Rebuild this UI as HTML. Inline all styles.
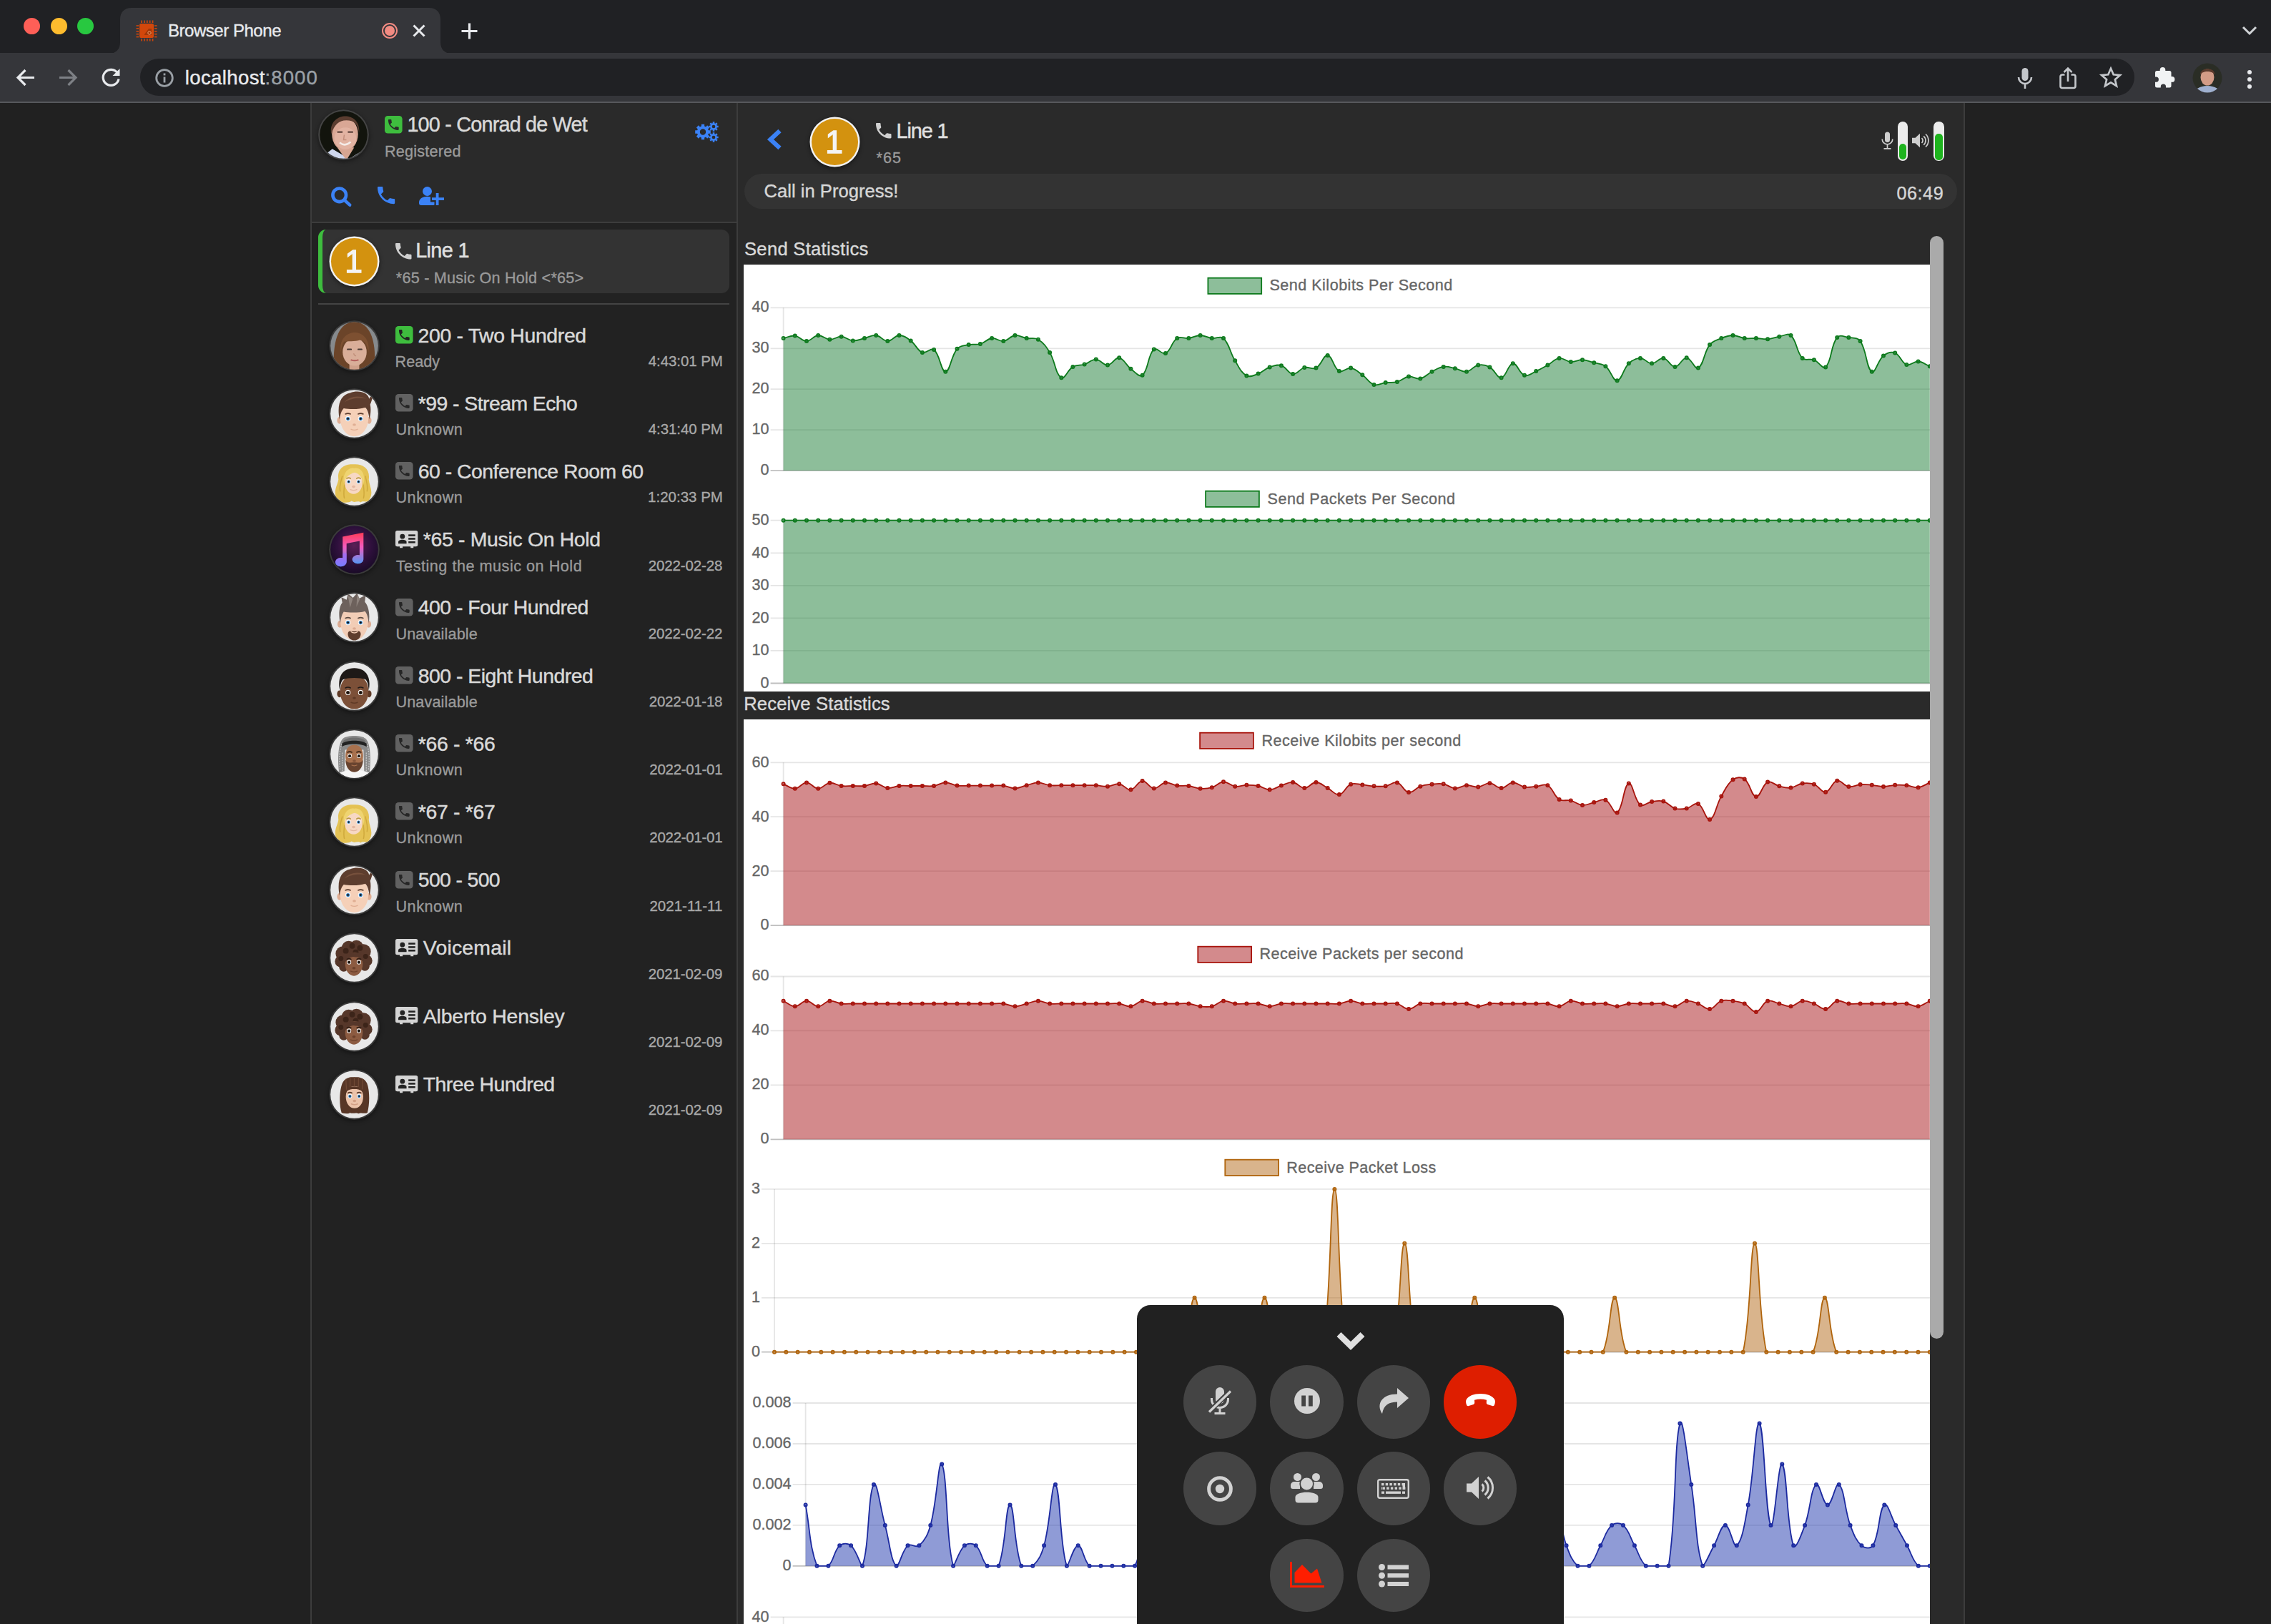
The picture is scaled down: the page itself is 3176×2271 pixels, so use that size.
<!DOCTYPE html><html><head><meta charset="utf-8"><title>Browser Phone</title><style>
*{box-sizing:border-box;margin:0;padding:0}
html,body{width:3176px;height:2271px;overflow:hidden;background:#202124}
body{position:relative;font-family:"Liberation Sans",sans-serif;}
.abs,.t{position:absolute}
.t{white-space:nowrap;line-height:1;-webkit-text-stroke:0.300px currentColor}
svg{position:absolute;overflow:visible}
svg.chart{overflow:hidden}
#tabstrip{position:absolute;left:0;top:0;width:3176px;height:74px;background:#202124}
#tab{position:absolute;left:168px;top:11px;width:449px;height:64px;background:#35363a;border-radius:16px 16px 0 0}
#toolbar{position:absolute;left:0;top:74px;width:3176px;height:68px;background:#35363a}
#toolbar-border{position:absolute;left:0;top:142px;width:3176px;height:2px;background:#57585c}
#omnibox{position:absolute;left:196px;top:8px;width:2789px;height:52px;border-radius:26px;background:#202124}
#page{position:absolute;left:0;top:144px;width:3176px;height:2127px;background:#212121;overflow:hidden}
#leftpanel{position:absolute;left:434px;top:0;width:596px;height:2127px;background:#222222;border-left:2px solid #3c3c3c}
#profile{position:absolute;left:0;top:0;width:594px;height:168px;background:#2a2a2a;border-bottom:2px solid #3c3c3c}
#rightpanel{position:absolute;left:1030px;top:0;width:1718px;height:2127px;background:#2a2a2a;border-left:2px solid #3c3c3c;border-right:2px solid #3c3c3c}
.avatar{position:absolute;width:72px;height:72px;border-radius:50%;overflow:hidden;border:2px solid #444;box-shadow:0 2px 6px rgba(0,0,0,.5)}

#linesel{position:absolute;left:8.600px;top:176.600px;width:575.400px;height:89.800px;background:#333;border-radius:11px;border-left:6.200px solid #3ebd3e}
#linesel i{display:none}
#listsep{position:absolute;left:9px;top:279.500px;width:575px;height:2px;background:#444}
#statuspill{position:absolute;left:8.600px;top:98.500px;width:1696px;height:49.500px;border-radius:25px;background:#333}
#content{position:absolute;left:0;top:0;width:3176px;height:2271px;overflow:hidden}
.buddy{position:static}
</style></head><body><div id="tabstrip">
<div class="abs" style="left:33.2px;top:25px;width:23px;height:23px;border-radius:50%;background:#fe5f57"></div>
<div class="abs" style="left:70.7px;top:25px;width:23px;height:23px;border-radius:50%;background:#febc2e"></div>
<div class="abs" style="left:108.1px;top:25px;width:23px;height:23px;border-radius:50%;background:#28c840"></div>
<svg style="left:152px;top:11px" width="480" height="64" viewBox="0 0 480 64"><path fill="#35363a" d="M0 64 C10 64 16 58 16 48 L16 16 C16 6 22 0 32 0 L448 0 C458 0 464 6 464 16 L464 48 C464 58 470 64 480 64 Z"/></svg>
<svg style="left:190px;top:28px" width="30" height="30" viewBox="0 0 30 30"><rect x="5" y="5" width="20" height="20" rx="2" fill="#d2470b"/><rect x="7.2" y="0.5" width="1.6" height="3.5" fill="#d2470b"/><rect x="7.2" y="26" width="1.6" height="3.5" fill="#d2470b"/><rect x="0.5" y="7.2" width="3.5" height="1.6" fill="#d2470b"/><rect x="26" y="7.2" width="3.5" height="1.6" fill="#d2470b"/><rect x="11.1" y="0.5" width="1.6" height="3.5" fill="#d2470b"/><rect x="11.1" y="26" width="1.6" height="3.5" fill="#d2470b"/><rect x="0.5" y="11.1" width="3.5" height="1.6" fill="#d2470b"/><rect x="26" y="11.1" width="3.5" height="1.6" fill="#d2470b"/><rect x="15.0" y="0.5" width="1.6" height="3.5" fill="#d2470b"/><rect x="15.0" y="26" width="1.6" height="3.5" fill="#d2470b"/><rect x="0.5" y="15.0" width="3.5" height="1.6" fill="#d2470b"/><rect x="26" y="15.0" width="3.5" height="1.6" fill="#d2470b"/><rect x="18.9" y="0.5" width="1.6" height="3.5" fill="#d2470b"/><rect x="18.9" y="26" width="1.6" height="3.5" fill="#d2470b"/><rect x="0.5" y="18.9" width="3.5" height="1.6" fill="#d2470b"/><rect x="26" y="18.9" width="3.5" height="1.6" fill="#d2470b"/><rect x="22.8" y="0.5" width="1.6" height="3.5" fill="#d2470b"/><rect x="22.8" y="26" width="1.6" height="3.5" fill="#d2470b"/><rect x="0.5" y="22.8" width="3.5" height="1.6" fill="#d2470b"/><rect x="26" y="22.8" width="3.5" height="1.6" fill="#d2470b"/><path d="M12 20 L18 12 L22 12 L22 21 L12 21Z" fill="#7a2a06" opacity=".55"/><circle cx="19" cy="18" r="2.2" fill="none" stroke="#f0a070" stroke-width="1"/></svg>
<span id="t1" class="t " style="top:30.6px;font-size:24.00px;color:#e8eaed;-webkit-text-stroke-width:0.38px;left:235.0px;letter-spacing:-0.467px;">Browser Phone</span>
<svg style="left:533px;top:31px" width="24" height="24" viewBox="0 0 24 24"><circle cx="12" cy="12" r="10" fill="none" stroke="#f28b82" stroke-width="2"/><circle cx="12" cy="12" r="7" fill="#f28b82"/></svg>
<svg style="left:577px;top:34px" width="18" height="18" viewBox="0 0 18 18"><path d="M1.5 1.5 L16.500 16.5 M16.5 1.5 L1.5 16.5" stroke="#e8eaed" stroke-width="3" fill="none"/></svg>
<svg style="left:645px;top:32px" width="23" height="23" viewBox="0 0 23 23"><path d="M11.5 0.5 V22.5 M0.5 11.5 H22.5" stroke="#e8eaed" stroke-width="3.200" fill="none"/></svg>
<svg style="left:3135px;top:36px" width="22" height="14" viewBox="0 0 22 14"><path d="M2 2 L11 11 L20 2" stroke="#d0d3d6" stroke-width="3" fill="none"/></svg>
</div>
<div id="toolbar"><div id="omnibox"></div></div><div id="toolbar-border"></div>
<svg style="left:21.500px;top:95px" width="28" height="27" viewBox="0 0 28 27"><path d="M26 13.5 H4 M13.500 3 L3 13.5 L13.500 24" stroke="#e8eaed" stroke-width="3.200" fill="none" stroke-linejoin="miter"/></svg>
<svg style="left:80.500px;top:95px" width="28" height="27" viewBox="0 0 28 27"><path d="M2 13.5 H24 M14.500 3 L25 13.5 L14.500 24" stroke="#7d8085" stroke-width="3.200" fill="none"/></svg>
<svg style="left:140px;top:93px" width="30" height="31" viewBox="0 0 30 31"><path d="M24.500 9.5 A11 11 0 1 0 26 17.500" stroke="#e8eaed" stroke-width="3.200" fill="none"/><path d="M27.500 3 V13 H17.500Z" fill="#e8eaed"/></svg>
<svg style="left:217px;top:95.500px" width="26" height="26" viewBox="0 0 26 26"><circle cx="13" cy="13" r="11.300" fill="none" stroke="#9aa0a6" stroke-width="2.800"/><rect x="11.600" y="11.500" width="2.800" height="8" fill="#9aa0a6"/><rect x="11.600" y="6.500" width="2.800" height="2.900" fill="#9aa0a6"/></svg>
<span id="t2" class="t " style="top:94.9px;font-size:27.50px;color:#e8eaed;-webkit-text-stroke-width:0.44px;left:258.8px;letter-spacing:0.387px;">localhost</span>
<span id="t3" class="t " style="top:94.9px;font-size:27.50px;color:#9aa0a6;-webkit-text-stroke-width:0.44px;left:370.6px;letter-spacing:1.100px;">:8000</span>
<svg style="left:2821px;top:94px" width="22" height="31" viewBox="0 0 22 31"><rect x="6.500" y="1" width="9" height="18" rx="4.500" fill="#c4c7cb"/><path d="M2 14 a9 9 0 0 0 18 0 M11 23 V30" stroke="#c4c7cb" stroke-width="2.600" fill="none"/></svg>
<svg style="left:2880px;top:93px" width="24" height="32" viewBox="0 0 24 32"><path d="M7.500 11.500 H4 a2.500 2.500 0 0 0 -2.500 2.500 V27.500 a2.500 2.500 0 0 0 2.500 2.500 H20 a2.500 2.500 0 0 0 2.500 -2.500 V14 a2.500 2.500 0 0 0 -2.500 -2.500 H16.500 M12 21 V3 M6.500 8 L12 2.500 L17.500 8" stroke="#c4c7cb" stroke-width="2.600" fill="none"/></svg>
<svg style="left:2937px;top:93px" width="30" height="30" viewBox="0 0 30 30"><path d="M15 2.800 L18.700 11.300 L27.900 12.100 L20.900 18.200 L23 27.200 L15 22.400 L7 27.200 L9.100 18.200 L2.100 12.100 L11.300 11.300 Z" stroke="#c4c7cb" stroke-width="2.700" fill="none" stroke-linejoin="miter"/></svg>
<svg style="left:3012px;top:93px" width="30" height="30" viewBox="0 0 30 30"><path fill="#f1f3f4" d="M12.500 1 a3.800 3.800 0 0 1 3.800 3.800 V6 H22 a2.500 2.500 0 0 1 2.500 2.500 V14 h1 a3.900 3.900 0 0 1 0 7.800 h-1 V27 a2.500 2.500 0 0 1 -2.500 2.500 H17 v-1.300 a3.600 3.600 0 0 0 -7.200 0 V29.500 H4.500 A2.500 2.500 0 0 1 2 27 V21.800 h1.300 a3.600 3.600 0 0 0 0 -7.200 H2 V8.500 A2.500 2.500 0 0 1 4.500 6 H8.700 V4.800 A3.800 3.800 0 0 1 12.500 1 Z"/></svg>
<svg style="left:3066px;top:88px" width="42" height="42" viewBox="0 0 42 42"><defs><clipPath id="cpa"><circle cx="21" cy="21" r="20.500"/></clipPath></defs><g clip-path="url(#cpa)"><rect width="42" height="42" fill="#2a2d25"/><ellipse cx="21" cy="44" rx="19" ry="12" fill="#9fb0cf"/><ellipse cx="21" cy="20" rx="9.500" ry="11.500" fill="#d39c86"/><path d="M11 17 C10 6 32 5 31.500 17 C29 11 14 10 11 17Z" fill="#5a3a2c"/></g></svg>
<svg style="left:3141px;top:97px" width="10" height="28" viewBox="0 0 10 28"><circle cx="5" cy="4" r="3" fill="#e8eaed"/><circle cx="5" cy="14" r="3" fill="#e8eaed"/><circle cx="5" cy="24" r="3" fill="#e8eaed"/></svg>
<div id="page"><div id="leftpanel"><div id="profile"></div><div id="linesel"><i></i></div><div id="listsep"></div></div><div id="rightpanel"><div id="statuspill"></div></div></div>
<div id="content">
<svg style="left:445.1px;top:152.9px;filter:drop-shadow(0 2px 3px rgba(0,0,0,.45))" width="71.0" height="71.0" viewBox="0 0 72 72"><defs><clipPath id="av1"><circle cx="36" cy="36" r="33.800"/></clipPath></defs><circle cx="36" cy="36" r="35.800" fill="#444"/><g clip-path="url(#av1)"><rect width="72" height="72" fill="#12140d"/><path d="M0 72 L20 56 L44 70 L60 60 L72 72Z" fill="#cfd8ee"/><path d="M27 54 L40 72 L51 54Z" fill="#d7a691"/><ellipse cx="38" cy="35" rx="18.500" ry="23.500" fill="#d9a795"/><ellipse cx="38.500" cy="41" rx="15.500" ry="15.500" fill="#e2b3a2"/><path d="M18.500 35 C13 3 61 0 58 33 C56 21 51 15.500 40 15.500 C29 15.500 23 22 18.500 35Z" fill="#5b3d30"/><path d="M30.500 47 Q38 53.500 46 46" stroke="#f5ece8" stroke-width="2.600" fill="none"/><rect x="27" y="31" width="7.500" height="2.200" fill="#5a4038"/><rect x="42" y="31" width="7.500" height="2.200" fill="#5a4038"/><path d="M37 36 L36 43 L40 43" stroke="#c48f7c" stroke-width="1.500" fill="none"/></g></svg>
<svg style="left:538.2px;top:161.5px" width="24.6" height="24.6" viewBox="0 0 24 24" ><rect x="0" y="0" width="24" height="24" rx="4.200" fill="#3ebd3e"/><g transform="translate(2.400,2.600) scale(0.800)"><path fill="none" stroke="#2a2a2a" stroke-width="0" d=""/><path fill="#2a2a2a" d="M6.6 10.8c1.4 2.8 3.8 5.1 6.6 6.6l2.200-2.200c.3-.3.7-.4 1-.2 1.100.4 2.300.6 3.600.6.600 0 1 .4 1 1V20c0 .600-.400 1-1 1C10.600 21 3 13.400 3 4c0-.6.4-1 1-1h3.500c.600 0 1 .4 1 1 0 1.300.2 2.500.6 3.600.100.3 0 .700-.2 1l-2.300 2.200z"/></g></svg>
<span id="t4" class="t " style="top:159.7px;font-size:28.80px;color:#d9d9d9;-webkit-text-stroke-width:0.46px;left:569.4px;letter-spacing:-0.800px;">100 - Conrad de Wet</span>
<span id="t5" class="t " style="top:201.0px;font-size:21.60px;color:#9a9a9a;-webkit-text-stroke-width:0.35px;left:538.0px;letter-spacing:0.222px;">Registered</span>
<svg style="left:971.7px;top:170.0px" width="33.0" height="29.0" viewBox="0 0 33 29" ><path fill="#3b82f6" fill-rule="evenodd" d="M18.91 12.35L21.79 12.35L21.79 16.65L18.91 16.65L18.11 18.58L20.15 20.61L17.11 23.65L15.08 21.61L13.15 22.41L13.15 25.29L8.85 25.29L8.85 22.41L6.92 21.61L4.89 23.65L1.85 20.61L3.89 18.58L3.09 16.65L0.21 16.65L0.21 12.35L3.09 12.35L3.89 10.42L1.85 8.39L4.89 5.35L6.92 7.39L8.85 6.59L8.85 3.71L13.15 3.71L13.15 6.59L15.08 7.39L17.11 5.35L20.15 8.39L18.11 10.42ZM6.80 14.50 a4.20 4.20 0 1 0 8.40 0 a4.20 4.20 0 1 0 -8.40 0ZM30.73 5.72L32.67 5.67L32.67 8.33L30.73 8.28L30.25 9.44L31.65 10.78L29.78 12.65L28.44 11.25L27.28 11.73L27.33 13.67L24.67 13.67L24.72 11.73L23.56 11.25L22.22 12.65L20.35 10.78L21.75 9.44L21.27 8.28L19.33 8.33L19.33 5.67L21.27 5.72L21.75 4.56L20.35 3.22L22.22 1.35L23.56 2.75L24.72 2.27L24.67 0.33L27.33 0.33L27.28 2.27L28.44 2.75L29.78 1.35L31.65 3.22L30.25 4.56ZM23.70 7.00 a2.30 2.30 0 1 0 4.60 0 a2.30 2.30 0 1 0 -4.60 0ZM30.73 20.72L32.67 20.67L32.67 23.33L30.73 23.28L30.25 24.44L31.65 25.78L29.78 27.65L28.44 26.25L27.28 26.73L27.33 28.67L24.67 28.67L24.72 26.73L23.56 26.25L22.22 27.65L20.35 25.78L21.75 24.44L21.27 23.28L19.33 23.33L19.33 20.67L21.27 20.72L21.75 19.56L20.35 18.22L22.22 16.35L23.56 17.75L24.72 17.27L24.67 15.33L27.33 15.33L27.28 17.27L28.44 17.75L29.78 16.35L31.65 18.22L30.25 19.56ZM23.70 22.00 a2.30 2.30 0 1 0 4.60 0 a2.30 2.30 0 1 0 -4.60 0Z"/></svg>
<svg style="left:462.0px;top:260.0px" width="30.0" height="30.0" viewBox="0 0 30 30" ><circle cx="12.700" cy="12.800" r="9.300" fill="none" stroke="#3b82f6" stroke-width="4.600"/><path d="M19.500 19.600 L27.200 26.600" stroke="#3b82f6" stroke-width="4.600" stroke-linecap="round"/></svg>
<svg style="left:528.2px;top:260.6px" width="24.2" height="24.2" viewBox="3 3 18 18" ><path fill="#3b82f6" d="M6.6 10.8c1.4 2.8 3.8 5.1 6.6 6.6l2.200-2.200c.3-.3.7-.4 1-.2 1.100.4 2.300.6 3.600.6.600 0 1 .4 1 1V20c0 .600-.400 1-1 1C10.600 21 3 13.400 3 4c0-.6.4-1 1-1h3.500c.600 0 1 .4 1 1 0 1.300.2 2.500.6 3.600.100.3 0 .700-.2 1l-2.300 2.200z"/></svg>
<svg style="left:586.4px;top:260.6px" width="35.0" height="26.0" viewBox="0 0 35 26" ><circle cx="11.500" cy="6.500" r="6.500" fill="#3b82f6"/><path d="M0 22 C0 11 23 11 23 22 V23 A3 3 0 0 1 20 26 H3 A3 3 0 0 1 0 23Z" fill="#3b82f6"/><path d="M16 12.500 H35 V21.500 H16Z M21.500 7 H29.500 V26 H21.500Z" fill="#2a2a2a"/><path d="M18 15.200 H35 V19 H18Z M23.700 9 H27.500 V26 H23.700Z" fill="#3b82f6"/></svg>
<svg style="left:459.9px;top:330.0px;filter:drop-shadow(0 2px 3px rgba(0,0,0,.45))" width="71.0" height="71.0" viewBox="0 0 72 72"><circle cx="36" cy="36" r="35.500" fill="#f2f2f2"/><circle cx="36" cy="36" r="33" fill="#d3920f"/><text x="35" y="52" font-size="45" text-anchor="middle" fill="#f4f4f4" stroke="#f4f4f4" stroke-width="1.400" font-family="Liberation Sans, sans-serif">1</text></svg>
<svg style="left:553.3px;top:340.0px" width="22.5" height="22.5" viewBox="3 3 18 18" ><path fill="#d0d0d0" d="M6.6 10.8c1.4 2.8 3.8 5.1 6.6 6.6l2.200-2.200c.3-.3.7-.4 1-.2 1.100.4 2.300.6 3.600.6.600 0 1 .4 1 1V20c0 .600-.400 1-1 1C10.600 21 3 13.400 3 4c0-.6.4-1 1-1h3.500c.600 0 1 .4 1 1 0 1.300.2 2.500.6 3.600.100.3 0 .700-.2 1l-2.300 2.200z"/></svg>
<span id="t6" class="t " style="top:336.3px;font-size:28.80px;color:#e0e0e0;-webkit-text-stroke-width:0.46px;left:581.2px;letter-spacing:-0.640px;">Line 1</span>
<span id="t7" class="t " style="top:378.1px;font-size:21.60px;color:#9a9a9a;-webkit-text-stroke-width:0.35px;left:553.8px;letter-spacing:0.229px;">*65 - Music On Hold &lt;*65&gt;</span>
<div class="buddy">
<svg style="left:459.9px;top:447.5px;filter:drop-shadow(0 2px 3px rgba(0,0,0,.45))" width="71.0" height="71.0" viewBox="0 0 72 72"><defs><clipPath id="av2"><circle cx="36" cy="36" r="33.800"/></clipPath></defs><circle cx="36" cy="36" r="35.800" fill="#3a3a3a"/><g clip-path="url(#av2)"><rect width="72" height="72" fill="#868a8d"/><path d="M8 80 C4 40 9 3 36 2 C63 3 69 40 63 80Z" fill="#6b4429"/><ellipse cx="36" cy="82" rx="26" ry="14" fill="#3f3431"/><rect x="29" y="58" width="14" height="14" fill="#cfa08a"/><ellipse cx="36.500" cy="45" rx="17" ry="19.500" fill="#d9ae99"/><path d="M17 45 C11 9 61 7 56 45 C54.500 33 50 29 44 28 C38 30 24 30 22 30 C19 33 18 38 17 45Z" fill="#7d5031"/><rect x="25.500" y="40" width="7" height="2.200" rx="1" fill="#4b3a35"/><rect x="40.500" y="40" width="7" height="2.200" rx="1" fill="#4b3a35"/><path d="M31 56 Q36.500 58 42 56" stroke="#b5625e" stroke-width="2.200" fill="none"/><path d="M35 47 Q36.500 51 38.500 50" stroke="#c08f7a" stroke-width="1.500" fill="none"/></g></svg>
<svg style="left:553.2px;top:455.9px" width="24.6" height="24.6" viewBox="0 0 24 24" ><rect x="0" y="0" width="24" height="24" rx="4.200" fill="#3ebd3e"/><g transform="translate(2.400,2.600) scale(0.800)"><path fill="none" stroke="#222222" stroke-width="0" d=""/><path fill="#222222" d="M6.6 10.8c1.4 2.8 3.8 5.1 6.6 6.6l2.200-2.200c.3-.3.7-.4 1-.2 1.100.4 2.300.6 3.600.6.600 0 1 .4 1 1V20c0 .600-.400 1-1 1C10.600 21 3 13.400 3 4c0-.6.4-1 1-1h3.500c.600 0 1 .4 1 1 0 1.300.2 2.500.6 3.600.100.3 0 .700-.2 1l-2.300 2.200z"/></g></svg>
<span id="t8" class="t " style="top:454.6px;font-size:28.40px;color:#d9d9d9;-webkit-text-stroke-width:0.45px;left:584.6px;letter-spacing:-0.337px;">200 - Two Hundred</span>
<span id="t9" class="t " style="top:494.9px;font-size:21.60px;color:#9a9a9a;-webkit-text-stroke-width:0.35px;left:552.6px;">Ready</span>
<span id="t10" class="t " style="top:494.9px;font-size:20.50px;color:#a8a8a8;-webkit-text-stroke-width:0.33px;left:1010.9px;transform:translateX(-100%);letter-spacing:-0.067px;">4:43:01 PM</span>
</div>
<div class="buddy">
<svg style="left:459.9px;top:542.7px;filter:drop-shadow(0 2px 3px rgba(0,0,0,.45))" width="71.0" height="71.0" viewBox="0 0 72 72"><defs><clipPath id="av3"><circle cx="36" cy="36" r="33.800"/></clipPath></defs><circle cx="36" cy="36" r="35.800" fill="#3a3a3a"/><g clip-path="url(#av3)"><rect width="72" height="72" fill="#e8e8e8"/><ellipse cx="15.0" cy="45.5" rx="3.400" ry="5" fill="#e0ae93"/><ellipse cx="57.0" cy="45.5" rx="3.400" ry="5" fill="#e0ae93"/><path d="M36.0 19.0 C51.0 19.0 56.0 30.0 56.0 42.3 C56.0 57.0 47.0 68.0 36.0 68.0 C25.0 68.0 16.0 57.0 16.0 42.3 C16.0 30.0 21.0 19.0 36.0 19.0 Z" fill="#f5d0b8"/><ellipse cx="36.0" cy="51.6" rx="2.400" ry="1.700" fill="#e0ae93"/><path d="M31.5 58.2 Q36.0 60.2 40.5 58.2" stroke="#e0ae93" stroke-width="1.500" fill="none" stroke-linecap="round"/><path d="M15 44 C11 22 17 9 30 6.500 C42 2 56 6 57 15 C58 12 61 11 63 10 C61 16 60 20 58.500 23 C60 30 59 37 57.500 44 C56.500 36 55 30 51.500 27 C44 30 30 30 21 28.500 C17.500 32 16 38 15 44Z" fill="#5d3d2e"/><path d="M22 20 C28 11 44 9 53 15 C44 13 30 14 22 20Z" fill="#76503c"/><path d="M23.4 36.5 q3.6 -1.800 7.2 0 M41.4 36.5 q3.6 -1.800 7.2 0" stroke="#5d3d2e" stroke-width="1.600" fill="none" stroke-linecap="round"/><ellipse cx="27.0" cy="43.0" rx="3.6" ry="3.8" fill="#fdfdfd"/><circle cx="27.0" cy="43.2" r="2.6" fill="#3f86c4"/><circle cx="27.0" cy="43.2" r="1.4" fill="#111"/><ellipse cx="45.0" cy="43.0" rx="3.6" ry="3.8" fill="#fdfdfd"/><circle cx="45.0" cy="43.2" r="2.6" fill="#3f86c4"/><circle cx="45.0" cy="43.2" r="1.4" fill="#111"/></g></svg>
<svg style="left:553.2px;top:551.1px" width="24.6" height="24.6" viewBox="0 0 24 24" ><rect x="0" y="0" width="24" height="24" rx="4.200" fill="#616161"/><g transform="translate(2.400,2.600) scale(0.800)"><path fill="none" stroke="#262626" stroke-width="0" d=""/><path fill="#262626" d="M6.6 10.8c1.4 2.8 3.8 5.1 6.6 6.6l2.200-2.200c.3-.3.7-.4 1-.2 1.100.4 2.300.6 3.600.6.600 0 1 .4 1 1V20c0 .600-.400 1-1 1C10.600 21 3 13.400 3 4c0-.6.4-1 1-1h3.500c.600 0 1 .4 1 1 0 1.300.2 2.500.6 3.600.100.3 0 .700-.2 1l-2.300 2.200z"/></g></svg>
<span id="t11" class="t " style="top:549.8px;font-size:28.40px;color:#d9d9d9;-webkit-text-stroke-width:0.45px;left:584.8px;letter-spacing:-0.556px;">*99 - Stream Echo</span>
<span id="t12" class="t " style="top:590.1px;font-size:21.60px;color:#9a9a9a;-webkit-text-stroke-width:0.35px;left:553.4px;letter-spacing:0.567px;">Unknown</span>
<span id="t13" class="t " style="top:590.1px;font-size:20.50px;color:#a8a8a8;-webkit-text-stroke-width:0.33px;left:1010.9px;transform:translateX(-100%);letter-spacing:-0.067px;">4:31:40 PM</span>
</div>
<div class="buddy">
<svg style="left:459.9px;top:637.9px;filter:drop-shadow(0 2px 3px rgba(0,0,0,.45))" width="71.0" height="71.0" viewBox="0 0 72 72"><defs><clipPath id="av4"><circle cx="36" cy="36" r="33.800"/></clipPath></defs><circle cx="36" cy="36" r="35.800" fill="#3a3a3a"/><g clip-path="url(#av4)"><rect width="72" height="72" fill="#e8e8e8"/><path d="M12 62 C5 50 12 42 13.500 33 C11 16 24 10.500 35 11.500 C47 10.500 59 17 56.500 33 C57.500 43 64 51 57 62 C53 67 48 62 45 65.500 C41 62 37 67 32 63.500 C28 67 22 65 19 66 C16 66 14 64 12 62Z" fill="#e4c254"/><path d="M16 50 C14 40 18 34 19 28 M54 50 C56 40 52 34 52 28 M22 60 C20 52 22 46 22 40 M49 60 C51 52 49 46 49 40" stroke="#cfa93c" stroke-width="1.500" fill="none"/><path d="M35.0 22.5 C44.4 22.5 47.5 29.5 47.5 37.2 C47.5 46.5 41.9 53.5 35.0 53.5 C28.1 53.5 22.5 46.5 22.5 37.2 C22.5 29.5 25.6 22.5 35.0 22.5 Z" fill="#f7d8c4"/><ellipse cx="35.0" cy="43.1" rx="2.400" ry="1.700" fill="#e4b8a2"/><path d="M30.5 47.3 Q35.0 49.3 39.5 47.3" stroke="#e4b8a2" stroke-width="1.500" fill="none" stroke-linecap="round"/><path d="M21 38 C19 20 31 15.500 36 17 C45 15 52 24 49.500 39 C47 30 43 24.500 36.500 23 C29 25 24 29 21 38Z" fill="#efd470"/><path d="M25.2 31.5 q2.8 -1.800 5.6 0 M39.2 31.5 q2.8 -1.800 5.6 0" stroke="#b99a45" stroke-width="1.600" fill="none" stroke-linecap="round"/><ellipse cx="28.0" cy="36.0" rx="3.0" ry="3.2" fill="#fdfdfd"/><circle cx="28.0" cy="36.2" r="2.2" fill="#3f86c4"/><circle cx="28.0" cy="36.2" r="1.1" fill="#111"/><ellipse cx="42.0" cy="36.0" rx="3.0" ry="3.2" fill="#fdfdfd"/><circle cx="42.0" cy="36.2" r="2.2" fill="#3f86c4"/><circle cx="42.0" cy="36.2" r="1.1" fill="#111"/></g></svg>
<svg style="left:553.2px;top:646.3px" width="24.6" height="24.6" viewBox="0 0 24 24" ><rect x="0" y="0" width="24" height="24" rx="4.200" fill="#616161"/><g transform="translate(2.400,2.600) scale(0.800)"><path fill="none" stroke="#262626" stroke-width="0" d=""/><path fill="#262626" d="M6.6 10.8c1.4 2.8 3.8 5.1 6.6 6.6l2.200-2.200c.3-.3.7-.4 1-.2 1.100.4 2.300.6 3.600.6.600 0 1 .4 1 1V20c0 .600-.400 1-1 1C10.600 21 3 13.400 3 4c0-.6.4-1 1-1h3.500c.600 0 1 .4 1 1 0 1.300.2 2.500.6 3.600.100.3 0 .700-.2 1l-2.300 2.200z"/></g></svg>
<span id="t14" class="t " style="top:645.0px;font-size:28.40px;color:#d9d9d9;-webkit-text-stroke-width:0.45px;left:584.8px;letter-spacing:-0.518px;">60 - Conference Room 60</span>
<span id="t15" class="t " style="top:685.3px;font-size:21.60px;color:#9a9a9a;-webkit-text-stroke-width:0.35px;left:553.4px;letter-spacing:0.567px;">Unknown</span>
<span id="t16" class="t " style="top:685.3px;font-size:20.50px;color:#a8a8a8;-webkit-text-stroke-width:0.33px;left:1010.9px;transform:translateX(-100%);">1:20:33 PM</span>
</div>
<div class="buddy">
<svg style="left:459.9px;top:733.1px;filter:drop-shadow(0 2px 3px rgba(0,0,0,.45))" width="71.0" height="71.0" viewBox="0 0 72 72"><defs><clipPath id="av5"><circle cx="36" cy="36" r="33.800"/></clipPath><radialGradient id="mgav5" cx="50%" cy="42%" r="62%"><stop offset="0" stop-color="#5c1f56"/><stop offset=".55" stop-color="#2e103c"/><stop offset="1" stop-color="#130920"/></radialGradient><linearGradient id="ngav5" x1="0" y1="0" x2="0" y2="1"><stop offset="0" stop-color="#ff3b55"/><stop offset=".42" stop-color="#f45bbf"/><stop offset="1" stop-color="#3aa2ff"/></linearGradient></defs><circle cx="36" cy="36" r="35.800" fill="#3a3a3a"/><g clip-path="url(#av5)"><rect width="72" height="72" fill="url(#mgav5)"/><g transform="translate(30.250 36) scale(1.230 1.130) translate(-35.750 -35.250)"><path fill="url(#ngav5)" d="M27 19 L51 14 V47.500 A6.500 5.500 0 1 1 46.500 42.300 V24.500 L31.500 27.600 V51 A6.500 5.500 0 1 1 27 45.800 Z"/><path fill="#a264ff" opacity=".6" d="M31.500 51 A6.500 5.500 0 1 1 27 45.800 V40 L31.500 40Z"/></g></g></svg>
<svg style="left:553.4px;top:742.0px" width="31.3" height="24.4" viewBox="0 0 31 24" ><path fill="#d4d4d4" d="M2.500 0 H28.500 A2.500 2.500 0 0 1 31 2.500 V19.500 A2.500 2.500 0 0 1 28.500 22 H25 V24 H21 V22 H10 V24 H6 V22 H2.500 A2.500 2.500 0 0 1 0 19.500 V2.500 A2.500 2.500 0 0 1 2.500 0Z"/><circle cx="9.700" cy="8" r="3.400" fill="#222222"/><path d="M4 18 V15.500 C4 11.500 15.400 11.500 15.400 15.500 V18Z" fill="#222222"/><rect x="18" y="5.2" width="9.500" height="2.500" fill="#222222"/><rect x="18" y="10.0" width="9.500" height="2.500" fill="#222222"/><rect x="18" y="14.8" width="9.500" height="2.500" fill="#222222"/></svg>
<span id="t17" class="t " style="top:740.2px;font-size:28.40px;color:#d9d9d9;-webkit-text-stroke-width:0.45px;left:591.8px;letter-spacing:-0.317px;">*65 - Music On Hold</span>
<span id="t18" class="t " style="top:780.5px;font-size:21.60px;color:#9a9a9a;-webkit-text-stroke-width:0.35px;left:553.8px;letter-spacing:0.525px;">Testing the music on Hold</span>
<span id="t19" class="t " style="top:780.5px;font-size:20.50px;color:#a8a8a8;-webkit-text-stroke-width:0.33px;left:1010.3px;transform:translateX(-100%);letter-spacing:-0.133px;">2022-02-28</span>
</div>
<div class="buddy">
<svg style="left:459.9px;top:828.3px;filter:drop-shadow(0 2px 3px rgba(0,0,0,.45))" width="71.0" height="71.0" viewBox="0 0 72 72"><defs><clipPath id="av6"><circle cx="36" cy="36" r="33.800"/></clipPath></defs><circle cx="36" cy="36" r="35.800" fill="#3a3a3a"/><g clip-path="url(#av6)"><rect width="72" height="72" fill="#e8e8e8"/><ellipse cx="15.5" cy="45.5" rx="3.400" ry="5" fill="#dcab92"/><ellipse cx="56.5" cy="45.5" rx="3.400" ry="5" fill="#dcab92"/><path d="M36.0 19.0 C50.6 19.0 55.5 30.0 55.5 42.3 C55.5 57.0 46.7 68.0 36.0 68.0 C25.3 68.0 16.5 57.0 16.5 42.3 C16.5 30.0 21.4 19.0 36.0 19.0 Z" fill="#f2cdb6"/><ellipse cx="36.0" cy="51.6" rx="2.400" ry="1.700" fill="#dcab92"/><path d="M31.5 58.2 Q36.0 60.2 40.5 58.2" stroke="#dcab92" stroke-width="1.500" fill="none" stroke-linecap="round"/><path d="M27 58 C28 54 32 55.500 36 55.500 C40 55.500 44 54 45 58 C46 64 41 68.500 36 68.500 C31 68.500 26 64 27 58Z" fill="#5e3d2d"/><path d="M31 56 Q36 59.500 41 56" stroke="#f2cdb6" stroke-width="1.400" fill="none"/><path d="M16 44 C13 30 15 20 19 15 L17.500 7 L25 11 L27 2 L34 8 L40 1.500 L43 9 L52 4 L51 14 C56 20 58.500 30 56.500 44 C55.500 36 54 30 51 27 C44 29.500 29 29.500 21 28 C18 32 17 38 16 44Z" fill="#6d615c"/><path d="M27 5 L30 22 L34 9Z M40 3 L39 21 L44 10Z" fill="#8d827c"/><path d="M23.4 37.0 q3.6 -1.800 7.2 0 M41.4 37.0 q3.6 -1.800 7.2 0" stroke="#5a4a42" stroke-width="1.600" fill="none" stroke-linecap="round"/><ellipse cx="27.0" cy="43.0" rx="3.6" ry="3.8" fill="#fdfdfd"/><circle cx="27.0" cy="43.2" r="2.6" fill="#3f86c4"/><circle cx="27.0" cy="43.2" r="1.4" fill="#111"/><ellipse cx="45.0" cy="43.0" rx="3.6" ry="3.8" fill="#fdfdfd"/><circle cx="45.0" cy="43.2" r="2.6" fill="#3f86c4"/><circle cx="45.0" cy="43.2" r="1.4" fill="#111"/></g></svg>
<svg style="left:553.2px;top:836.7px" width="24.6" height="24.6" viewBox="0 0 24 24" ><rect x="0" y="0" width="24" height="24" rx="4.200" fill="#616161"/><g transform="translate(2.400,2.600) scale(0.800)"><path fill="none" stroke="#262626" stroke-width="0" d=""/><path fill="#262626" d="M6.6 10.8c1.4 2.8 3.8 5.1 6.6 6.6l2.200-2.200c.3-.3.7-.4 1-.2 1.100.4 2.300.6 3.600.6.600 0 1 .4 1 1V20c0 .600-.400 1-1 1C10.600 21 3 13.400 3 4c0-.6.4-1 1-1h3.500c.600 0 1 .4 1 1 0 1.300.2 2.500.6 3.600.100.3 0 .700-.2 1l-2.300 2.200z"/></g></svg>
<span id="t20" class="t " style="top:835.4px;font-size:28.40px;color:#d9d9d9;-webkit-text-stroke-width:0.45px;left:584.8px;letter-spacing:-0.541px;">400 - Four Hundred</span>
<span id="t21" class="t " style="top:875.7px;font-size:21.60px;color:#9a9a9a;-webkit-text-stroke-width:0.35px;left:553.4px;letter-spacing:0.160px;">Unavailable</span>
<span id="t22" class="t " style="top:875.7px;font-size:20.50px;color:#a8a8a8;-webkit-text-stroke-width:0.33px;left:1010.3px;transform:translateX(-100%);letter-spacing:-0.133px;">2022-02-22</span>
</div>
<div class="buddy">
<svg style="left:459.9px;top:923.5px;filter:drop-shadow(0 2px 3px rgba(0,0,0,.45))" width="71.0" height="71.0" viewBox="0 0 72 72"><defs><clipPath id="av7"><circle cx="36" cy="36" r="33.800"/></clipPath></defs><circle cx="36" cy="36" r="35.800" fill="#3a3a3a"/><g clip-path="url(#av7)"><rect width="72" height="72" fill="#e8e8e8"/><ellipse cx="15.0" cy="47.0" rx="3.400" ry="5" fill="#5f3a26"/><ellipse cx="57.0" cy="47.0" rx="3.400" ry="5" fill="#5f3a26"/><path d="M36.0 21.5 C51.0 21.5 56.0 32.1 56.0 43.8 C56.0 57.9 47.0 68.5 36.0 68.5 C25.0 68.5 16.0 57.9 16.0 43.8 C16.0 32.1 21.0 21.5 36.0 21.5 Z" fill="#7c5038"/><ellipse cx="36.0" cy="52.8" rx="2.400" ry="1.700" fill="#5f3a26"/><path d="M31.5 59.1 Q36.0 61.1 40.5 59.1" stroke="#5f3a26" stroke-width="1.500" fill="none" stroke-linecap="round"/><path d="M15.500 42 C12 24 18 11 36 10.500 C54 11 60 24 56.500 42 C56 34 54.500 29 52 26.500 C44 23.500 28 23.500 20 26.500 C17.500 29 16 34 15.500 42Z" fill="#1e1917"/><path d="M23.4 38.5 q3.6 -1.800 7.2 0 M41.4 38.5 q3.6 -1.800 7.2 0" stroke="#1e1917" stroke-width="1.600" fill="none" stroke-linecap="round"/><ellipse cx="27.0" cy="45.0" rx="3.6" ry="3.8" fill="#fdfdfd"/><circle cx="27.0" cy="45.2" r="2.6" fill="#3a2416"/><circle cx="27.0" cy="45.2" r="1.4" fill="#111"/><ellipse cx="45.0" cy="45.0" rx="3.6" ry="3.8" fill="#fdfdfd"/><circle cx="45.0" cy="45.2" r="2.6" fill="#3a2416"/><circle cx="45.0" cy="45.2" r="1.4" fill="#111"/></g></svg>
<svg style="left:553.2px;top:931.9px" width="24.6" height="24.6" viewBox="0 0 24 24" ><rect x="0" y="0" width="24" height="24" rx="4.200" fill="#616161"/><g transform="translate(2.400,2.600) scale(0.800)"><path fill="none" stroke="#262626" stroke-width="0" d=""/><path fill="#262626" d="M6.6 10.8c1.4 2.8 3.8 5.1 6.6 6.6l2.200-2.200c.3-.3.7-.4 1-.2 1.100.4 2.300.6 3.600.6.600 0 1 .4 1 1V20c0 .600-.400 1-1 1C10.600 21 3 13.400 3 4c0-.6.4-1 1-1h3.500c.600 0 1 .4 1 1 0 1.300.2 2.500.6 3.600.100.3 0 .700-.2 1l-2.300 2.200z"/></g></svg>
<span id="t23" class="t " style="top:930.6px;font-size:28.40px;color:#d9d9d9;-webkit-text-stroke-width:0.45px;left:584.8px;letter-spacing:-0.511px;">800 - Eight Hundred</span>
<span id="t24" class="t " style="top:970.9px;font-size:21.60px;color:#9a9a9a;-webkit-text-stroke-width:0.35px;left:553.4px;letter-spacing:0.160px;">Unavailable</span>
<span id="t25" class="t " style="top:970.9px;font-size:20.50px;color:#a8a8a8;-webkit-text-stroke-width:0.33px;left:1010.3px;transform:translateX(-100%);letter-spacing:-0.233px;">2022-01-18</span>
</div>
<div class="buddy">
<svg style="left:459.9px;top:1018.7px;filter:drop-shadow(0 2px 3px rgba(0,0,0,.45))" width="71.0" height="71.0" viewBox="0 0 72 72"><defs><clipPath id="av8"><circle cx="36" cy="36" r="33.800"/></clipPath></defs><circle cx="36" cy="36" r="35.800" fill="#3a3a3a"/><g clip-path="url(#av8)"><rect width="72" height="72" fill="#e8e8e8"/><path d="M10 72 C14 62 24 58 36 58 C48 58 58 62 62 72Z" fill="#f6f6f6"/><path d="M14.500 62 C12 44 13 20 20 14 C26 9 46 9 52 14 C59 20 60 44 57.500 62 L50 60 L49 30 L23 30 L22 60Z" fill="#8b8b8b"/><path d="M16 58 C14 44 15 28 19 20 M56 58 C58 44 57 28 53 20 M19 60 L19 34 M53 60 L53 34" stroke="#c9c9c9" stroke-width="1.300" fill="none" stroke-dasharray="2 1.500"/><path d="M20 18 C24 11 48 11 52 18 L52 22 C44 18 28 18 20 22Z" fill="#6f6f6f"/><path d="M36.0 23.0 C45.4 23.0 48.5 30.6 48.5 39.1 C48.5 49.4 42.9 57.0 36.0 57.0 C29.1 57.0 23.5 49.4 23.5 39.1 C23.5 30.6 26.6 23.0 36.0 23.0 Z" fill="#a8714e"/><ellipse cx="36.0" cy="45.6" rx="2.400" ry="1.700" fill="#85553a"/><path d="M31.5 50.2 Q36.0 52.2 40.5 50.2" stroke="#85553a" stroke-width="1.500" fill="none" stroke-linecap="round"/><path d="M23.500 44 C24 56 30 61.500 36 61.500 C42 61.500 48 56 48.500 44 C45 49.500 41 48 36 48 C31 48 27 49.500 23.500 44Z" fill="#68432f"/><path d="M32 51.500 Q36 53.500 40 51.500" stroke="#a8714e" stroke-width="1.300" fill="none"/><path d="M18.500 21 C26 15.500 46 15.500 53.500 21 L53.500 25.500 C46 20.500 26 20.500 18.500 25.500Z" fill="#222"/><path d="M26.5 33.5 q3.0 -1.800 6.0 0 M39.5 33.5 q3.0 -1.800 6.0 0" stroke="#3b2618" stroke-width="1.600" fill="none" stroke-linecap="round"/><ellipse cx="29.5" cy="38.5" rx="3.0" ry="3.2" fill="#fdfdfd"/><circle cx="29.5" cy="38.7" r="2.2" fill="#3a2416"/><circle cx="29.5" cy="38.7" r="1.1" fill="#111"/><ellipse cx="42.5" cy="38.5" rx="3.0" ry="3.2" fill="#fdfdfd"/><circle cx="42.5" cy="38.7" r="2.2" fill="#3a2416"/><circle cx="42.5" cy="38.7" r="1.1" fill="#111"/></g></svg>
<svg style="left:553.2px;top:1027.1px" width="24.6" height="24.6" viewBox="0 0 24 24" ><rect x="0" y="0" width="24" height="24" rx="4.200" fill="#616161"/><g transform="translate(2.400,2.600) scale(0.800)"><path fill="none" stroke="#262626" stroke-width="0" d=""/><path fill="#262626" d="M6.6 10.8c1.4 2.8 3.8 5.1 6.6 6.6l2.200-2.200c.3-.3.7-.4 1-.2 1.100.4 2.300.6 3.600.6.600 0 1 .4 1 1V20c0 .600-.400 1-1 1C10.600 21 3 13.400 3 4c0-.6.4-1 1-1h3.500c.600 0 1 .4 1 1 0 1.300.2 2.500.6 3.600.100.3 0 .700-.2 1l-2.300 2.200z"/></g></svg>
<span id="t26" class="t " style="top:1025.8px;font-size:28.40px;color:#d9d9d9;-webkit-text-stroke-width:0.45px;left:584.8px;letter-spacing:-0.300px;">*66 - *66</span>
<span id="t27" class="t " style="top:1066.1px;font-size:21.60px;color:#9a9a9a;-webkit-text-stroke-width:0.35px;left:553.4px;letter-spacing:0.567px;">Unknown</span>
<span id="t28" class="t " style="top:1066.1px;font-size:20.50px;color:#a8a8a8;-webkit-text-stroke-width:0.33px;left:1010.3px;transform:translateX(-100%);letter-spacing:-0.289px;">2022-01-01</span>
</div>
<div class="buddy">
<svg style="left:459.9px;top:1113.9px;filter:drop-shadow(0 2px 3px rgba(0,0,0,.45))" width="71.0" height="71.0" viewBox="0 0 72 72"><defs><clipPath id="av9"><circle cx="36" cy="36" r="33.800"/></clipPath></defs><circle cx="36" cy="36" r="35.800" fill="#3a3a3a"/><g clip-path="url(#av9)"><rect width="72" height="72" fill="#e8e8e8"/><path d="M12 62 C5 50 12 42 13.500 33 C11 16 24 10.500 35 11.500 C47 10.500 59 17 56.500 33 C57.500 43 64 51 57 62 C53 67 48 62 45 65.500 C41 62 37 67 32 63.500 C28 67 22 65 19 66 C16 66 14 64 12 62Z" fill="#e4c254"/><path d="M16 50 C14 40 18 34 19 28 M54 50 C56 40 52 34 52 28 M22 60 C20 52 22 46 22 40 M49 60 C51 52 49 46 49 40" stroke="#cfa93c" stroke-width="1.500" fill="none"/><path d="M35.0 22.5 C44.4 22.5 47.5 29.5 47.5 37.2 C47.5 46.5 41.9 53.5 35.0 53.5 C28.1 53.5 22.5 46.5 22.5 37.2 C22.5 29.5 25.6 22.5 35.0 22.5 Z" fill="#f7d8c4"/><ellipse cx="35.0" cy="43.1" rx="2.400" ry="1.700" fill="#e4b8a2"/><path d="M30.5 47.3 Q35.0 49.3 39.5 47.3" stroke="#e4b8a2" stroke-width="1.500" fill="none" stroke-linecap="round"/><path d="M21 38 C19 20 31 15.500 36 17 C45 15 52 24 49.500 39 C47 30 43 24.500 36.500 23 C29 25 24 29 21 38Z" fill="#efd470"/><path d="M25.2 31.5 q2.8 -1.800 5.6 0 M39.2 31.5 q2.8 -1.800 5.6 0" stroke="#b99a45" stroke-width="1.600" fill="none" stroke-linecap="round"/><ellipse cx="28.0" cy="36.0" rx="3.0" ry="3.2" fill="#fdfdfd"/><circle cx="28.0" cy="36.2" r="2.2" fill="#3f86c4"/><circle cx="28.0" cy="36.2" r="1.1" fill="#111"/><ellipse cx="42.0" cy="36.0" rx="3.0" ry="3.2" fill="#fdfdfd"/><circle cx="42.0" cy="36.2" r="2.2" fill="#3f86c4"/><circle cx="42.0" cy="36.2" r="1.1" fill="#111"/></g></svg>
<svg style="left:553.2px;top:1122.3px" width="24.6" height="24.6" viewBox="0 0 24 24" ><rect x="0" y="0" width="24" height="24" rx="4.200" fill="#616161"/><g transform="translate(2.400,2.600) scale(0.800)"><path fill="none" stroke="#262626" stroke-width="0" d=""/><path fill="#262626" d="M6.6 10.8c1.4 2.8 3.8 5.1 6.6 6.6l2.200-2.200c.3-.3.7-.4 1-.2 1.100.4 2.300.6 3.600.6.600 0 1 .4 1 1V20c0 .600-.400 1-1 1C10.600 21 3 13.400 3 4c0-.6.4-1 1-1h3.500c.600 0 1 .4 1 1 0 1.300.2 2.500.6 3.600.100.3 0 .700-.2 1l-2.300 2.200z"/></g></svg>
<span id="t29" class="t " style="top:1121.0px;font-size:28.40px;color:#d9d9d9;-webkit-text-stroke-width:0.45px;left:584.8px;letter-spacing:-0.300px;">*67 - *67</span>
<span id="t30" class="t " style="top:1161.3px;font-size:21.60px;color:#9a9a9a;-webkit-text-stroke-width:0.35px;left:553.4px;letter-spacing:0.567px;">Unknown</span>
<span id="t31" class="t " style="top:1161.3px;font-size:20.50px;color:#a8a8a8;-webkit-text-stroke-width:0.33px;left:1010.3px;transform:translateX(-100%);letter-spacing:-0.289px;">2022-01-01</span>
</div>
<div class="buddy">
<svg style="left:459.9px;top:1209.1px;filter:drop-shadow(0 2px 3px rgba(0,0,0,.45))" width="71.0" height="71.0" viewBox="0 0 72 72"><defs><clipPath id="av10"><circle cx="36" cy="36" r="33.800"/></clipPath></defs><circle cx="36" cy="36" r="35.800" fill="#3a3a3a"/><g clip-path="url(#av10)"><rect width="72" height="72" fill="#e8e8e8"/><ellipse cx="15.0" cy="45.5" rx="3.400" ry="5" fill="#e0ae93"/><ellipse cx="57.0" cy="45.5" rx="3.400" ry="5" fill="#e0ae93"/><path d="M36.0 19.0 C51.0 19.0 56.0 30.0 56.0 42.3 C56.0 57.0 47.0 68.0 36.0 68.0 C25.0 68.0 16.0 57.0 16.0 42.3 C16.0 30.0 21.0 19.0 36.0 19.0 Z" fill="#f5d0b8"/><ellipse cx="36.0" cy="51.6" rx="2.400" ry="1.700" fill="#e0ae93"/><path d="M31.5 58.2 Q36.0 60.2 40.5 58.2" stroke="#e0ae93" stroke-width="1.500" fill="none" stroke-linecap="round"/><path d="M15 44 C11 22 17 9 30 6.500 C42 2 56 6 57 15 C58 12 61 11 63 10 C61 16 60 20 58.500 23 C60 30 59 37 57.500 44 C56.500 36 55 30 51.500 27 C44 30 30 30 21 28.500 C17.500 32 16 38 15 44Z" fill="#5d3d2e"/><path d="M22 20 C28 11 44 9 53 15 C44 13 30 14 22 20Z" fill="#76503c"/><path d="M23.4 36.5 q3.6 -1.800 7.2 0 M41.4 36.5 q3.6 -1.800 7.2 0" stroke="#5d3d2e" stroke-width="1.600" fill="none" stroke-linecap="round"/><ellipse cx="27.0" cy="43.0" rx="3.6" ry="3.8" fill="#fdfdfd"/><circle cx="27.0" cy="43.2" r="2.6" fill="#3f86c4"/><circle cx="27.0" cy="43.2" r="1.4" fill="#111"/><ellipse cx="45.0" cy="43.0" rx="3.6" ry="3.8" fill="#fdfdfd"/><circle cx="45.0" cy="43.2" r="2.6" fill="#3f86c4"/><circle cx="45.0" cy="43.2" r="1.4" fill="#111"/></g></svg>
<svg style="left:553.2px;top:1217.5px" width="24.6" height="24.6" viewBox="0 0 24 24" ><rect x="0" y="0" width="24" height="24" rx="4.200" fill="#616161"/><g transform="translate(2.400,2.600) scale(0.800)"><path fill="none" stroke="#262626" stroke-width="0" d=""/><path fill="#262626" d="M6.6 10.8c1.4 2.8 3.8 5.1 6.6 6.6l2.200-2.200c.3-.3.7-.4 1-.2 1.100.4 2.300.6 3.600.6.600 0 1 .4 1 1V20c0 .600-.400 1-1 1C10.600 21 3 13.400 3 4c0-.6.4-1 1-1h3.500c.600 0 1 .4 1 1 0 1.300.2 2.500.6 3.600.100.3 0 .700-.2 1l-2.300 2.200z"/></g></svg>
<span id="t32" class="t " style="top:1216.2px;font-size:28.40px;color:#d9d9d9;-webkit-text-stroke-width:0.45px;left:584.8px;letter-spacing:-0.650px;">500 - 500</span>
<span id="t33" class="t " style="top:1256.5px;font-size:21.60px;color:#9a9a9a;-webkit-text-stroke-width:0.35px;left:553.4px;letter-spacing:0.567px;">Unknown</span>
<span id="t34" class="t " style="top:1256.5px;font-size:20.50px;color:#a8a8a8;-webkit-text-stroke-width:0.33px;left:1010.3px;transform:translateX(-100%);">2021-11-11</span>
</div>
<div class="buddy">
<svg style="left:459.9px;top:1304.3px;filter:drop-shadow(0 2px 3px rgba(0,0,0,.45))" width="71.0" height="71.0" viewBox="0 0 72 72"><defs><clipPath id="av11"><circle cx="36" cy="36" r="33.800"/></clipPath></defs><circle cx="36" cy="36" r="35.800" fill="#3a3a3a"/><g clip-path="url(#av11)"><rect width="72" height="72" fill="#e8e8e8"/><circle cx="20.0" cy="30.0" r="10.5" fill="#56372a"/><circle cx="28.0" cy="22.0" r="10.0" fill="#56372a"/><circle cx="39.0" cy="21.0" r="10.0" fill="#56372a"/><circle cx="49.0" cy="27.0" r="10.5" fill="#56372a"/><circle cx="17.0" cy="41.0" r="8.5" fill="#56372a"/><circle cx="53.0" cy="40.0" r="8.5" fill="#56372a"/><circle cx="35.0" cy="25.0" r="11.0" fill="#56372a"/><circle cx="21.0" cy="49.0" r="6.5" fill="#56372a"/><circle cx="51.0" cy="48.0" r="6.5" fill="#56372a"/><circle cx="24.0" cy="26.0" r="4.0" fill="#3c2419"/><circle cx="33.0" cy="19.0" r="4.0" fill="#3c2419"/><circle cx="44.0" cy="22.0" r="4.0" fill="#3c2419"/><circle cx="17.0" cy="37.0" r="3.5" fill="#3c2419"/><circle cx="52.0" cy="34.0" r="3.5" fill="#3c2419"/><circle cx="38.0" cy="28.0" r="4.0" fill="#3c2419"/><path d="M35.5 28.5 C44.9 28.5 48.0 35.9 48.0 44.2 C48.0 54.1 42.4 61.5 35.5 61.5 C28.6 61.5 23.0 54.1 23.0 44.2 C23.0 35.9 26.1 28.5 35.5 28.5 Z" fill="#8c5b41"/><ellipse cx="35.5" cy="50.4" rx="2.400" ry="1.700" fill="#6c412b"/><path d="M31.0 54.9 Q35.5 56.9 40.0 54.9" stroke="#6c412b" stroke-width="1.500" fill="none" stroke-linecap="round"/><path d="M22 44 C22 30 30 27 37 29 C44 27 50 32 49 44 C46 37 42 34.500 38 35 C32 33 26 37 22 44Z" fill="#56372a"/><path d="M25.7 38.0 q2.8 -1.800 5.6 0 M39.7 38.0 q2.8 -1.800 5.6 0" stroke="#2f1c13" stroke-width="1.600" fill="none" stroke-linecap="round"/><ellipse cx="28.5" cy="42.0" rx="3.1" ry="3.3" fill="#fdfdfd"/><circle cx="28.5" cy="42.2" r="2.2" fill="#2c1a10"/><circle cx="28.5" cy="42.2" r="1.2" fill="#111"/><ellipse cx="42.5" cy="42.0" rx="3.1" ry="3.3" fill="#fdfdfd"/><circle cx="42.5" cy="42.2" r="2.2" fill="#2c1a10"/><circle cx="42.5" cy="42.2" r="1.2" fill="#111"/></g></svg>
<svg style="left:553.4px;top:1313.2px" width="31.3" height="24.4" viewBox="0 0 31 24" ><path fill="#d4d4d4" d="M2.500 0 H28.500 A2.500 2.500 0 0 1 31 2.500 V19.500 A2.500 2.500 0 0 1 28.500 22 H25 V24 H21 V22 H10 V24 H6 V22 H2.500 A2.500 2.500 0 0 1 0 19.500 V2.500 A2.500 2.500 0 0 1 2.500 0Z"/><circle cx="9.700" cy="8" r="3.400" fill="#222222"/><path d="M4 18 V15.500 C4 11.500 15.400 11.500 15.400 15.500 V18Z" fill="#222222"/><rect x="18" y="5.2" width="9.500" height="2.500" fill="#222222"/><rect x="18" y="10.0" width="9.500" height="2.500" fill="#222222"/><rect x="18" y="14.8" width="9.500" height="2.500" fill="#222222"/></svg>
<span id="t35" class="t " style="top:1311.4px;font-size:28.40px;color:#d9d9d9;-webkit-text-stroke-width:0.45px;left:591.8px;letter-spacing:0.213px;">Voicemail</span>
<span id="t36" class="t " style="top:1351.7px;font-size:20.50px;color:#a8a8a8;-webkit-text-stroke-width:0.33px;left:1010.3px;transform:translateX(-100%);letter-spacing:-0.133px;">2021-02-09</span>
</div>
<div class="buddy">
<svg style="left:459.9px;top:1399.5px;filter:drop-shadow(0 2px 3px rgba(0,0,0,.45))" width="71.0" height="71.0" viewBox="0 0 72 72"><defs><clipPath id="av12"><circle cx="36" cy="36" r="33.800"/></clipPath></defs><circle cx="36" cy="36" r="35.800" fill="#3a3a3a"/><g clip-path="url(#av12)"><rect width="72" height="72" fill="#e8e8e8"/><circle cx="20.0" cy="30.0" r="10.5" fill="#56372a"/><circle cx="28.0" cy="22.0" r="10.0" fill="#56372a"/><circle cx="39.0" cy="21.0" r="10.0" fill="#56372a"/><circle cx="49.0" cy="27.0" r="10.5" fill="#56372a"/><circle cx="17.0" cy="41.0" r="8.5" fill="#56372a"/><circle cx="53.0" cy="40.0" r="8.5" fill="#56372a"/><circle cx="35.0" cy="25.0" r="11.0" fill="#56372a"/><circle cx="21.0" cy="49.0" r="6.5" fill="#56372a"/><circle cx="51.0" cy="48.0" r="6.5" fill="#56372a"/><circle cx="24.0" cy="26.0" r="4.0" fill="#3c2419"/><circle cx="33.0" cy="19.0" r="4.0" fill="#3c2419"/><circle cx="44.0" cy="22.0" r="4.0" fill="#3c2419"/><circle cx="17.0" cy="37.0" r="3.5" fill="#3c2419"/><circle cx="52.0" cy="34.0" r="3.5" fill="#3c2419"/><circle cx="38.0" cy="28.0" r="4.0" fill="#3c2419"/><path d="M35.5 28.5 C44.9 28.5 48.0 35.9 48.0 44.2 C48.0 54.1 42.4 61.5 35.5 61.5 C28.6 61.5 23.0 54.1 23.0 44.2 C23.0 35.9 26.1 28.5 35.5 28.5 Z" fill="#8c5b41"/><ellipse cx="35.5" cy="50.4" rx="2.400" ry="1.700" fill="#6c412b"/><path d="M31.0 54.9 Q35.5 56.9 40.0 54.9" stroke="#6c412b" stroke-width="1.500" fill="none" stroke-linecap="round"/><path d="M22 44 C22 30 30 27 37 29 C44 27 50 32 49 44 C46 37 42 34.500 38 35 C32 33 26 37 22 44Z" fill="#56372a"/><path d="M25.7 38.0 q2.8 -1.800 5.6 0 M39.7 38.0 q2.8 -1.800 5.6 0" stroke="#2f1c13" stroke-width="1.600" fill="none" stroke-linecap="round"/><ellipse cx="28.5" cy="42.0" rx="3.1" ry="3.3" fill="#fdfdfd"/><circle cx="28.5" cy="42.2" r="2.2" fill="#2c1a10"/><circle cx="28.5" cy="42.2" r="1.2" fill="#111"/><ellipse cx="42.5" cy="42.0" rx="3.1" ry="3.3" fill="#fdfdfd"/><circle cx="42.5" cy="42.2" r="2.2" fill="#2c1a10"/><circle cx="42.5" cy="42.2" r="1.2" fill="#111"/></g></svg>
<svg style="left:553.4px;top:1408.4px" width="31.3" height="24.4" viewBox="0 0 31 24" ><path fill="#d4d4d4" d="M2.500 0 H28.500 A2.500 2.500 0 0 1 31 2.500 V19.500 A2.500 2.500 0 0 1 28.500 22 H25 V24 H21 V22 H10 V24 H6 V22 H2.500 A2.500 2.500 0 0 1 0 19.500 V2.500 A2.500 2.500 0 0 1 2.500 0Z"/><circle cx="9.700" cy="8" r="3.400" fill="#222222"/><path d="M4 18 V15.500 C4 11.500 15.400 11.500 15.400 15.500 V18Z" fill="#222222"/><rect x="18" y="5.2" width="9.500" height="2.500" fill="#222222"/><rect x="18" y="10.0" width="9.500" height="2.500" fill="#222222"/><rect x="18" y="14.8" width="9.500" height="2.500" fill="#222222"/></svg>
<span id="t37" class="t " style="top:1406.6px;font-size:28.40px;color:#d9d9d9;-webkit-text-stroke-width:0.45px;left:591.8px;letter-spacing:-0.171px;">Alberto Hensley</span>
<span id="t38" class="t " style="top:1446.9px;font-size:20.50px;color:#a8a8a8;-webkit-text-stroke-width:0.33px;left:1010.3px;transform:translateX(-100%);letter-spacing:-0.133px;">2021-02-09</span>
</div>
<div class="buddy">
<svg style="left:459.9px;top:1494.7px;filter:drop-shadow(0 2px 3px rgba(0,0,0,.45))" width="71.0" height="71.0" viewBox="0 0 72 72"><defs><clipPath id="av13"><circle cx="36" cy="36" r="33.800"/></clipPath></defs><circle cx="36" cy="36" r="35.800" fill="#3a3a3a"/><g clip-path="url(#av13)"><rect width="72" height="72" fill="#e8e8e8"/><path d="M18 62 C14 50 15 30 19 20 C23 12 30 11 36 11.500 C42 11 50 12 54 20 C58 30 58 50 54.500 62 C50 64 46 61 42 63 C38 61 34 64 30 62 C26 64 22 63 18 62Z" fill="#573626"/><path d="M24 14 L25 30 M30 12 L30 28 M36 11.500 L36 27 M42 12 L42 28 M48 14 L47 30" stroke="#6e4834" stroke-width="1.400"/><path d="M36.3 24.4 C45.5 24.4 48.6 31.4 48.6 39.2 C48.6 48.6 43.1 55.6 36.3 55.6 C29.5 55.6 24.0 48.6 24.0 39.2 C24.0 31.4 27.1 24.4 36.3 24.4 Z" fill="#ecc3aa"/><ellipse cx="36.3" cy="45.1" rx="2.400" ry="1.700" fill="#d29f85"/><path d="M31.8 49.4 Q36.3 51.4 40.8 49.4" stroke="#d29f85" stroke-width="1.500" fill="none" stroke-linecap="round"/><path d="M23.500 38 C23 27 28 24.500 36 24.500 C44 24.500 49.500 27 49 38 C48 31 45 28.500 36 28.500 C27 28.500 24.500 31 23.500 38Z" fill="#573626"/><path d="M27.0 34.0 q2.8 -1.800 5.6 0 M40.0 34.0 q2.8 -1.800 5.6 0" stroke="#573626" stroke-width="1.600" fill="none" stroke-linecap="round"/><ellipse cx="29.8" cy="38.3" rx="3.0" ry="3.2" fill="#fdfdfd"/><circle cx="29.8" cy="38.5" r="2.2" fill="#3f86c4"/><circle cx="29.8" cy="38.5" r="1.1" fill="#111"/><ellipse cx="42.8" cy="38.3" rx="3.0" ry="3.2" fill="#fdfdfd"/><circle cx="42.8" cy="38.5" r="2.2" fill="#3f86c4"/><circle cx="42.8" cy="38.5" r="1.1" fill="#111"/></g></svg>
<svg style="left:553.4px;top:1503.6px" width="31.3" height="24.4" viewBox="0 0 31 24" ><path fill="#d4d4d4" d="M2.500 0 H28.500 A2.500 2.500 0 0 1 31 2.500 V19.500 A2.500 2.500 0 0 1 28.500 22 H25 V24 H21 V22 H10 V24 H6 V22 H2.500 A2.500 2.500 0 0 1 0 19.500 V2.500 A2.500 2.500 0 0 1 2.500 0Z"/><circle cx="9.700" cy="8" r="3.400" fill="#222222"/><path d="M4 18 V15.500 C4 11.500 15.400 11.500 15.400 15.500 V18Z" fill="#222222"/><rect x="18" y="5.2" width="9.500" height="2.500" fill="#222222"/><rect x="18" y="10.0" width="9.500" height="2.500" fill="#222222"/><rect x="18" y="14.8" width="9.500" height="2.500" fill="#222222"/></svg>
<span id="t39" class="t " style="top:1501.8px;font-size:28.40px;color:#d9d9d9;-webkit-text-stroke-width:0.45px;left:591.8px;letter-spacing:-0.550px;">Three Hundred</span>
<span id="t40" class="t " style="top:1542.1px;font-size:20.50px;color:#a8a8a8;-webkit-text-stroke-width:0.33px;left:1010.3px;transform:translateX(-100%);letter-spacing:-0.133px;">2021-02-09</span>
</div>
<svg style="left:1071.0px;top:180.0px" width="24.0" height="30.0" viewBox="0 0 24 30" ><path d="M19.500 3 L6.500 15 L19.500 27" stroke="#3b82f6" stroke-width="6.200" fill="none" stroke-linejoin="miter"/></svg>
<svg style="left:1131.8px;top:162.6px;filter:drop-shadow(0 2px 3px rgba(0,0,0,.45))" width="71.0" height="71.0" viewBox="0 0 72 72"><circle cx="36" cy="36" r="35.500" fill="#f2f2f2"/><circle cx="36" cy="36" r="33" fill="#d3920f"/><text x="35" y="52" font-size="45" text-anchor="middle" fill="#f4f4f4" stroke="#f4f4f4" stroke-width="1.400" font-family="Liberation Sans, sans-serif">1</text></svg>
<svg style="left:1225.4px;top:171.5px" width="21.5" height="21.5" viewBox="3 3 18 18" ><path fill="#d0d0d0" d="M6.6 10.8c1.4 2.8 3.8 5.1 6.6 6.6l2.200-2.200c.3-.3.7-.4 1-.2 1.100.4 2.300.6 3.600.6.600 0 1 .4 1 1V20c0 .600-.400 1-1 1C10.600 21 3 13.400 3 4c0-.6.4-1 1-1h3.500c.600 0 1 .4 1 1 0 1.300.2 2.500.6 3.600.100.3 0 .700-.2 1l-2.300 2.200z"/></svg>
<span id="t41" class="t " style="top:169.1px;font-size:28.80px;color:#e0e0e0;-webkit-text-stroke-width:0.46px;left:1253.6px;letter-spacing:-1.120px;">Line 1</span>
<span id="t42" class="t " style="top:209.7px;font-size:21.60px;color:#9a9a9a;-webkit-text-stroke-width:0.35px;left:1225.4px;letter-spacing:1.100px;">*65</span>
<span id="t43" class="t " style="top:255.0px;font-size:25.60px;color:#d6d6d6;-webkit-text-stroke-width:0.41px;left:1068.6px;">Call in Progress!</span>
<span id="t44" class="t " style="top:258.2px;font-size:25.20px;color:#d6d6d6;-webkit-text-stroke-width:0.40px;left:2718.2px;transform:translateX(-100%);letter-spacing:0.550px;">06:49</span>
<svg style="left:2631.0px;top:183.5px" width="17.0" height="25.0" viewBox="0 0 17 25" ><rect x="5" y="0.500" width="7" height="14.500" rx="3.500" fill="#cfcfcf"/><path d="M1.200 10.500 a7.300 7.300 0 0 0 14.600 0 M8.500 18 V23.500 M3.500 23.800 H13.500" stroke="#cfcfcf" stroke-width="1.700" fill="none"/></svg>
<div class="abs" style="left:2653.5px;top:169.8px;width:14.3px;height:55.7px;border-radius:7.150px;background:#ececec"></div><div class="abs" style="left:2655.5px;top:200.8px;width:10.3px;height:22.7px;border-radius:5px;background:#1eb41e"></div>
<svg style="left:2674.4px;top:186.0px" width="24.5" height="21.0" viewBox="0 0 24.500 21" ><path d="M0 6.800 H4.500 L11 0.800 V20.200 L4.500 14.200 H0Z" fill="#cfcfcf"/><path d="M13.500 7.200 A4.300 4.300 0 0 1 13.500 13.800 M16.200 4.300 A8.300 8.300 0 0 1 16.200 16.700 M19 1.500 A12.300 12.300 0 0 1 19 19.500" stroke="#cfcfcf" stroke-width="1.700" fill="none"/></svg>
<div class="abs" style="left:2704.4px;top:169.8px;width:14.3px;height:55.7px;border-radius:7.150px;background:#ececec"></div><div class="abs" style="left:2706.4px;top:187.0px;width:10.3px;height:36.5px;border-radius:5px;background:#1eb41e"></div>
<span id="t45" class="t " style="top:336.3px;font-size:25.60px;color:#d9d9d9;-webkit-text-stroke-width:0.41px;left:1041.0px;letter-spacing:0.286px;">Send Statistics</span>
<span id="t46" class="t " style="top:972.3px;font-size:25.60px;color:#d9d9d9;-webkit-text-stroke-width:0.41px;left:1040.2px;letter-spacing:0.147px;">Receive Statistics</span>
<div class="abs" id="sendpanel" style="left:1040px;top:369.5px;width:1659px;height:597.300px;background:#fff"></div>
<div class="abs" id="recvpanel" style="left:1040px;top:1005.800px;width:1659px;height:1270px;background:#fff"></div>
<svg class="chart" style="left:1040px;top:369.5px" width="1659" height="298.5" viewBox="1040 369.5 1659 298.5"><path d="M1077.6 657.6 H2699" stroke="rgba(0,0,0,0.25)" stroke-width="1.800"/><path d="M1077.6 600.6 H2699" stroke="rgba(0,0,0,0.1)" stroke-width="1.800"/><path d="M1077.6 543.7 H2699" stroke="rgba(0,0,0,0.1)" stroke-width="1.800"/><path d="M1077.6 486.8 H2699" stroke="rgba(0,0,0,0.1)" stroke-width="1.800"/><path d="M1077.6 429.8 H2699" stroke="rgba(0,0,0,0.1)" stroke-width="1.800"/><path d="M1095.6 429.8 V657.6" stroke="rgba(0,0,0,0.1)" stroke-width="1.800"/><path d="M1095.6 472.5C1102.1 471.1 1105.6 468.3 1111.8 469.1C1118.5 469.9 1121.6 476.6 1128.0 476.5C1134.5 476.4 1137.5 469.0 1144.2 468.5C1150.5 468.1 1153.8 473.9 1160.4 474.2C1166.8 474.6 1170.2 469.9 1176.6 470.2C1183.1 470.6 1186.2 475.5 1192.8 475.9C1199.1 476.4 1202.5 474.0 1209.0 472.5C1215.5 471.0 1218.9 467.8 1225.2 468.5C1231.9 469.4 1234.9 476.5 1241.3 476.5C1247.8 476.5 1251.0 468.6 1257.5 468.5C1264.0 468.4 1268.1 471.8 1273.7 475.9C1281.1 481.3 1282.4 489.5 1289.9 492.4C1295.4 494.5 1301.9 485.0 1306.1 488.5C1314.9 495.7 1315.9 519.4 1322.3 519.2C1328.9 519.0 1329.8 497.5 1338.5 487.3C1342.7 482.4 1348.0 483.0 1354.7 481.6C1361.0 480.3 1364.8 482.2 1370.9 480.5C1377.7 478.6 1380.4 473.3 1387.1 472.5C1393.3 471.7 1397.1 477.3 1403.3 476.5C1410.0 475.7 1412.7 469.4 1419.5 468.5C1425.7 467.8 1429.1 471.4 1435.7 472.5C1442.1 473.6 1446.7 471.0 1451.9 474.2C1459.6 479.0 1463.1 484.2 1468.1 492.4C1476.0 505.6 1476.0 522.7 1484.3 527.8C1489.0 530.7 1493.0 516.7 1500.4 512.4C1506.0 509.2 1510.4 510.9 1516.6 509.0C1523.3 506.8 1526.4 501.9 1532.8 502.1C1539.4 502.4 1542.7 510.5 1549.0 510.1C1555.7 509.6 1559.2 498.9 1565.2 499.8C1572.2 501.0 1574.3 509.9 1581.4 515.2C1587.3 519.7 1593.5 527.8 1597.6 524.3C1606.4 516.9 1604.7 496.5 1613.8 487.9C1617.7 484.2 1624.9 496.0 1630.0 493.6C1637.9 489.8 1638.1 477.7 1646.2 472.5C1651.1 469.3 1656.0 473.3 1662.4 472.5C1669.0 471.7 1672.1 468.5 1678.6 468.5C1685.1 468.5 1688.2 471.7 1694.8 472.5C1701.2 473.3 1706.9 468.6 1711.0 472.5C1719.8 481.1 1719.8 491.9 1727.2 503.8C1732.7 512.8 1735.4 520.4 1743.4 524.9C1748.3 527.7 1753.5 524.3 1759.6 522.1C1766.4 519.5 1768.9 515.4 1775.7 512.9C1781.8 510.8 1786.1 508.9 1791.9 510.7C1799.1 512.8 1801.4 522.0 1808.1 522.6C1814.4 523.2 1817.4 515.3 1824.3 513.5C1830.4 511.9 1835.3 516.8 1840.5 514.1C1848.2 510.0 1850.7 495.6 1856.7 496.4C1863.6 497.4 1864.9 514.3 1872.9 518.6C1877.8 521.3 1883.0 513.1 1889.1 514.1C1896.0 515.2 1899.2 519.4 1905.3 523.8C1912.2 528.7 1914.2 535.0 1921.5 537.4C1927.2 539.3 1931.2 535.4 1937.7 534.6C1944.1 533.8 1947.7 535.1 1953.9 533.4C1960.7 531.7 1963.3 527.0 1970.1 526.0C1976.3 525.2 1980.2 530.2 1986.3 528.9C1993.2 527.4 1995.8 522.6 2002.5 519.2C2008.7 516.0 2011.9 513.3 2018.7 512.4C2024.9 511.5 2028.5 513.3 2034.8 514.7C2041.4 516.0 2044.9 520.1 2051.0 519.2C2057.8 518.3 2060.4 511.4 2067.2 510.1C2073.3 508.9 2077.9 509.9 2083.4 512.9C2090.8 517.0 2093.7 528.7 2099.6 527.8C2106.6 526.6 2109.0 508.5 2115.8 507.8C2122.0 507.2 2124.6 521.9 2132.0 524.3C2137.5 526.2 2141.9 521.4 2148.2 518.6C2154.9 515.7 2158.0 513.7 2164.4 510.1C2171.0 506.4 2173.8 501.4 2180.6 500.4C2186.7 499.6 2190.2 505.1 2196.8 505.5C2203.2 506.0 2206.6 502.5 2213.0 502.7C2219.5 502.9 2222.8 504.9 2229.2 506.7C2235.7 508.5 2240.2 507.8 2245.4 511.8C2253.2 517.8 2255.5 532.5 2261.6 531.7C2268.4 530.9 2269.7 515.6 2277.8 507.8C2282.7 503.0 2287.5 500.4 2294.0 500.4C2300.4 500.4 2303.7 507.8 2310.1 507.8C2316.6 507.8 2320.3 499.6 2326.3 500.4C2333.2 501.4 2336.1 512.5 2342.5 512.4C2349.1 512.3 2352.4 499.5 2358.7 499.8C2365.4 500.2 2370.1 516.8 2374.9 514.1C2383.0 509.5 2382.5 492.6 2391.1 481.6C2395.5 476.0 2400.5 475.3 2407.3 472.5C2413.4 470.0 2417.0 468.5 2423.5 468.5C2430.0 468.5 2433.1 471.7 2439.7 472.5C2446.1 473.3 2449.4 472.3 2455.9 472.5C2462.4 472.7 2465.7 474.1 2472.1 473.7C2478.6 473.2 2481.7 471.3 2488.3 470.2C2494.7 469.2 2500.4 464.7 2504.5 468.5C2513.4 476.8 2511.8 491.0 2520.7 500.4C2524.7 504.7 2530.9 500.4 2536.9 502.7C2543.9 505.4 2549.2 516.7 2553.1 512.9C2562.1 504.2 2559.7 483.6 2569.2 471.4C2572.7 466.9 2579.1 470.4 2585.4 471.4C2592.1 472.4 2598.1 471.3 2601.6 476.5C2611.1 490.4 2609.7 514.1 2617.8 519.2C2622.7 522.3 2626.0 503.5 2634.0 497.0C2638.9 493.0 2644.8 490.9 2650.2 493.0C2657.7 495.9 2658.9 506.8 2666.4 509.5C2671.9 511.5 2676.3 504.5 2682.6 505.0C2689.2 505.4 2692.3 509.1 2698.8 511.8 L2698.8 657.6 L1095.6 657.6 Z" fill="rgba(27,125,53,0.5)"/><path d="M1095.6 472.5C1102.1 471.1 1105.6 468.3 1111.8 469.1C1118.5 469.9 1121.6 476.6 1128.0 476.5C1134.5 476.4 1137.5 469.0 1144.2 468.5C1150.5 468.1 1153.8 473.9 1160.4 474.2C1166.8 474.6 1170.2 469.9 1176.6 470.2C1183.1 470.6 1186.2 475.5 1192.8 475.9C1199.1 476.4 1202.5 474.0 1209.0 472.5C1215.5 471.0 1218.9 467.8 1225.2 468.5C1231.9 469.4 1234.9 476.5 1241.3 476.5C1247.8 476.5 1251.0 468.6 1257.5 468.5C1264.0 468.4 1268.1 471.8 1273.7 475.9C1281.1 481.3 1282.4 489.5 1289.9 492.4C1295.4 494.5 1301.9 485.0 1306.1 488.5C1314.9 495.7 1315.9 519.4 1322.3 519.2C1328.9 519.0 1329.8 497.5 1338.5 487.3C1342.7 482.4 1348.0 483.0 1354.7 481.6C1361.0 480.3 1364.8 482.2 1370.9 480.5C1377.7 478.6 1380.4 473.3 1387.1 472.5C1393.3 471.7 1397.1 477.3 1403.3 476.5C1410.0 475.7 1412.7 469.4 1419.5 468.5C1425.7 467.8 1429.1 471.4 1435.7 472.5C1442.1 473.6 1446.7 471.0 1451.9 474.2C1459.6 479.0 1463.1 484.2 1468.1 492.4C1476.0 505.6 1476.0 522.7 1484.3 527.8C1489.0 530.7 1493.0 516.7 1500.4 512.4C1506.0 509.2 1510.4 510.9 1516.6 509.0C1523.3 506.8 1526.4 501.9 1532.8 502.1C1539.4 502.4 1542.7 510.5 1549.0 510.1C1555.7 509.6 1559.2 498.9 1565.2 499.8C1572.2 501.0 1574.3 509.9 1581.4 515.2C1587.3 519.7 1593.5 527.8 1597.6 524.3C1606.4 516.9 1604.7 496.5 1613.8 487.9C1617.7 484.2 1624.9 496.0 1630.0 493.6C1637.9 489.8 1638.1 477.7 1646.2 472.5C1651.1 469.3 1656.0 473.3 1662.4 472.5C1669.0 471.7 1672.1 468.5 1678.6 468.5C1685.1 468.5 1688.2 471.7 1694.8 472.5C1701.2 473.3 1706.9 468.6 1711.0 472.5C1719.8 481.1 1719.8 491.9 1727.2 503.8C1732.7 512.8 1735.4 520.4 1743.4 524.9C1748.3 527.7 1753.5 524.3 1759.6 522.1C1766.4 519.5 1768.9 515.4 1775.7 512.9C1781.8 510.8 1786.1 508.9 1791.9 510.7C1799.1 512.8 1801.4 522.0 1808.1 522.6C1814.4 523.2 1817.4 515.3 1824.3 513.5C1830.4 511.9 1835.3 516.8 1840.5 514.1C1848.2 510.0 1850.7 495.6 1856.7 496.4C1863.6 497.4 1864.9 514.3 1872.9 518.6C1877.8 521.3 1883.0 513.1 1889.1 514.1C1896.0 515.2 1899.2 519.4 1905.3 523.8C1912.2 528.7 1914.2 535.0 1921.5 537.4C1927.2 539.3 1931.2 535.4 1937.7 534.6C1944.1 533.8 1947.7 535.1 1953.9 533.4C1960.7 531.7 1963.3 527.0 1970.1 526.0C1976.3 525.2 1980.2 530.2 1986.3 528.9C1993.2 527.4 1995.8 522.6 2002.5 519.2C2008.7 516.0 2011.9 513.3 2018.7 512.4C2024.9 511.5 2028.5 513.3 2034.8 514.7C2041.4 516.0 2044.9 520.1 2051.0 519.2C2057.8 518.3 2060.4 511.4 2067.2 510.1C2073.3 508.9 2077.9 509.9 2083.4 512.9C2090.8 517.0 2093.7 528.7 2099.6 527.8C2106.6 526.6 2109.0 508.5 2115.8 507.8C2122.0 507.2 2124.6 521.9 2132.0 524.3C2137.5 526.2 2141.9 521.4 2148.2 518.6C2154.9 515.7 2158.0 513.7 2164.4 510.1C2171.0 506.4 2173.8 501.4 2180.6 500.4C2186.7 499.6 2190.2 505.1 2196.8 505.5C2203.2 506.0 2206.6 502.5 2213.0 502.7C2219.5 502.9 2222.8 504.9 2229.2 506.7C2235.7 508.5 2240.2 507.8 2245.4 511.8C2253.2 517.8 2255.5 532.5 2261.6 531.7C2268.4 530.9 2269.7 515.6 2277.8 507.8C2282.7 503.0 2287.5 500.4 2294.0 500.4C2300.4 500.4 2303.7 507.8 2310.1 507.8C2316.6 507.8 2320.3 499.6 2326.3 500.4C2333.2 501.4 2336.1 512.5 2342.5 512.4C2349.1 512.3 2352.4 499.5 2358.7 499.8C2365.4 500.2 2370.1 516.8 2374.9 514.1C2383.0 509.5 2382.5 492.6 2391.1 481.6C2395.5 476.0 2400.5 475.3 2407.3 472.5C2413.4 470.0 2417.0 468.5 2423.5 468.5C2430.0 468.5 2433.1 471.7 2439.7 472.5C2446.1 473.3 2449.4 472.3 2455.9 472.5C2462.4 472.7 2465.7 474.1 2472.1 473.7C2478.6 473.2 2481.7 471.3 2488.3 470.2C2494.7 469.2 2500.4 464.7 2504.5 468.5C2513.4 476.8 2511.8 491.0 2520.7 500.4C2524.7 504.7 2530.9 500.4 2536.9 502.7C2543.9 505.4 2549.2 516.7 2553.1 512.9C2562.1 504.2 2559.7 483.6 2569.2 471.4C2572.7 466.9 2579.1 470.4 2585.4 471.4C2592.1 472.4 2598.1 471.3 2601.6 476.5C2611.1 490.4 2609.7 514.1 2617.8 519.2C2622.7 522.3 2626.0 503.5 2634.0 497.0C2638.9 493.0 2644.8 490.9 2650.2 493.0C2657.7 495.9 2658.9 506.8 2666.4 509.5C2671.9 511.5 2676.3 504.5 2682.6 505.0C2689.2 505.4 2692.3 509.1 2698.8 511.8" fill="none" stroke="#0d7a1c" stroke-width="1.800" stroke-linejoin="round"/><g fill="rgba(27,125,53,0.5)" stroke="#0d7a1c" stroke-width="1.800"><circle cx="1095.6" cy="472.5" r="2.100"/><circle cx="1111.8" cy="469.1" r="2.100"/><circle cx="1128.0" cy="476.5" r="2.100"/><circle cx="1144.2" cy="468.5" r="2.100"/><circle cx="1160.4" cy="474.2" r="2.100"/><circle cx="1176.6" cy="470.2" r="2.100"/><circle cx="1192.8" cy="475.9" r="2.100"/><circle cx="1209.0" cy="472.5" r="2.100"/><circle cx="1225.2" cy="468.5" r="2.100"/><circle cx="1241.3" cy="476.5" r="2.100"/><circle cx="1257.5" cy="468.5" r="2.100"/><circle cx="1273.7" cy="475.9" r="2.100"/><circle cx="1289.9" cy="492.4" r="2.100"/><circle cx="1306.1" cy="488.5" r="2.100"/><circle cx="1322.3" cy="519.2" r="2.100"/><circle cx="1338.5" cy="487.3" r="2.100"/><circle cx="1354.7" cy="481.6" r="2.100"/><circle cx="1370.9" cy="480.5" r="2.100"/><circle cx="1387.1" cy="472.5" r="2.100"/><circle cx="1403.3" cy="476.5" r="2.100"/><circle cx="1419.5" cy="468.5" r="2.100"/><circle cx="1435.7" cy="472.5" r="2.100"/><circle cx="1451.9" cy="474.2" r="2.100"/><circle cx="1468.1" cy="492.4" r="2.100"/><circle cx="1484.3" cy="527.8" r="2.100"/><circle cx="1500.4" cy="512.4" r="2.100"/><circle cx="1516.6" cy="509.0" r="2.100"/><circle cx="1532.8" cy="502.1" r="2.100"/><circle cx="1549.0" cy="510.1" r="2.100"/><circle cx="1565.2" cy="499.8" r="2.100"/><circle cx="1581.4" cy="515.2" r="2.100"/><circle cx="1597.6" cy="524.3" r="2.100"/><circle cx="1613.8" cy="487.9" r="2.100"/><circle cx="1630.0" cy="493.6" r="2.100"/><circle cx="1646.2" cy="472.5" r="2.100"/><circle cx="1662.4" cy="472.5" r="2.100"/><circle cx="1678.6" cy="468.5" r="2.100"/><circle cx="1694.8" cy="472.5" r="2.100"/><circle cx="1711.0" cy="472.5" r="2.100"/><circle cx="1727.2" cy="503.8" r="2.100"/><circle cx="1743.4" cy="524.9" r="2.100"/><circle cx="1759.6" cy="522.1" r="2.100"/><circle cx="1775.7" cy="512.9" r="2.100"/><circle cx="1791.9" cy="510.7" r="2.100"/><circle cx="1808.1" cy="522.6" r="2.100"/><circle cx="1824.3" cy="513.5" r="2.100"/><circle cx="1840.5" cy="514.1" r="2.100"/><circle cx="1856.7" cy="496.4" r="2.100"/><circle cx="1872.9" cy="518.6" r="2.100"/><circle cx="1889.1" cy="514.1" r="2.100"/><circle cx="1905.3" cy="523.8" r="2.100"/><circle cx="1921.5" cy="537.4" r="2.100"/><circle cx="1937.7" cy="534.6" r="2.100"/><circle cx="1953.9" cy="533.4" r="2.100"/><circle cx="1970.1" cy="526.0" r="2.100"/><circle cx="1986.3" cy="528.9" r="2.100"/><circle cx="2002.5" cy="519.2" r="2.100"/><circle cx="2018.7" cy="512.4" r="2.100"/><circle cx="2034.8" cy="514.7" r="2.100"/><circle cx="2051.0" cy="519.2" r="2.100"/><circle cx="2067.2" cy="510.1" r="2.100"/><circle cx="2083.4" cy="512.9" r="2.100"/><circle cx="2099.6" cy="527.8" r="2.100"/><circle cx="2115.8" cy="507.8" r="2.100"/><circle cx="2132.0" cy="524.3" r="2.100"/><circle cx="2148.2" cy="518.6" r="2.100"/><circle cx="2164.4" cy="510.1" r="2.100"/><circle cx="2180.6" cy="500.4" r="2.100"/><circle cx="2196.8" cy="505.5" r="2.100"/><circle cx="2213.0" cy="502.7" r="2.100"/><circle cx="2229.2" cy="506.7" r="2.100"/><circle cx="2245.4" cy="511.8" r="2.100"/><circle cx="2261.6" cy="531.7" r="2.100"/><circle cx="2277.8" cy="507.8" r="2.100"/><circle cx="2294.0" cy="500.4" r="2.100"/><circle cx="2310.1" cy="507.8" r="2.100"/><circle cx="2326.3" cy="500.4" r="2.100"/><circle cx="2342.5" cy="512.4" r="2.100"/><circle cx="2358.7" cy="499.8" r="2.100"/><circle cx="2374.9" cy="514.1" r="2.100"/><circle cx="2391.1" cy="481.6" r="2.100"/><circle cx="2407.3" cy="472.5" r="2.100"/><circle cx="2423.5" cy="468.5" r="2.100"/><circle cx="2439.7" cy="472.5" r="2.100"/><circle cx="2455.9" cy="472.5" r="2.100"/><circle cx="2472.1" cy="473.7" r="2.100"/><circle cx="2488.3" cy="470.2" r="2.100"/><circle cx="2504.5" cy="468.5" r="2.100"/><circle cx="2520.7" cy="500.4" r="2.100"/><circle cx="2536.9" cy="502.7" r="2.100"/><circle cx="2553.1" cy="512.9" r="2.100"/><circle cx="2569.2" cy="471.4" r="2.100"/><circle cx="2585.4" cy="471.4" r="2.100"/><circle cx="2601.6" cy="476.5" r="2.100"/><circle cx="2617.8" cy="519.2" r="2.100"/><circle cx="2634.0" cy="497.0" r="2.100"/><circle cx="2650.2" cy="493.0" r="2.100"/><circle cx="2666.4" cy="509.5" r="2.100"/><circle cx="2682.6" cy="505.0" r="2.100"/><circle cx="2698.8" cy="511.8" r="2.100"/></g><rect x="1689.4" y="388.2" width="74.800" height="22.200" fill="rgba(27,125,53,0.5)" stroke="#0d7a1c" stroke-width="1.800"/></svg>
<span id="t47" class="t " style="top:645.9px;font-size:21.60px;color:#666666;-webkit-text-stroke-width:0.35px;left:1075.6px;transform:translateX(-100%);">0</span>
<span id="t48" class="t " style="top:589.0px;font-size:21.60px;color:#666666;-webkit-text-stroke-width:0.35px;left:1075.6px;transform:translateX(-100%);">10</span>
<span id="t49" class="t " style="top:532.0px;font-size:21.60px;color:#666666;-webkit-text-stroke-width:0.35px;left:1075.6px;transform:translateX(-100%);">20</span>
<span id="t50" class="t " style="top:475.1px;font-size:21.60px;color:#666666;-webkit-text-stroke-width:0.35px;left:1075.6px;transform:translateX(-100%);">30</span>
<span id="t51" class="t " style="top:418.1px;font-size:21.60px;color:#666666;-webkit-text-stroke-width:0.35px;left:1075.6px;transform:translateX(-100%);">40</span>
<span id="t52" class="t " style="top:388.4px;font-size:21.60px;color:#666666;-webkit-text-stroke-width:0.35px;left:1775.4px;letter-spacing:0.478px;">Send Kilobits Per Second</span>
<svg class="chart" style="left:1040px;top:668.0px" width="1659" height="298.5" viewBox="1040 668.0 1659 298.5"><path d="M1077.6 955.5 H2699" stroke="rgba(0,0,0,0.25)" stroke-width="1.800"/><path d="M1077.6 909.9 H2699" stroke="rgba(0,0,0,0.1)" stroke-width="1.800"/><path d="M1077.6 864.4 H2699" stroke="rgba(0,0,0,0.1)" stroke-width="1.800"/><path d="M1077.6 818.8 H2699" stroke="rgba(0,0,0,0.1)" stroke-width="1.800"/><path d="M1077.6 773.3 H2699" stroke="rgba(0,0,0,0.1)" stroke-width="1.800"/><path d="M1077.6 727.7 H2699" stroke="rgba(0,0,0,0.1)" stroke-width="1.800"/><path d="M1095.6 727.7 V955.5" stroke="rgba(0,0,0,0.1)" stroke-width="1.800"/><path d="M1095.6 727.7C1102.1 727.7 1105.3 727.7 1111.8 727.7C1118.3 727.7 1121.5 727.7 1128.0 727.7C1134.5 727.7 1137.7 727.7 1144.2 727.7C1150.7 727.7 1153.9 727.7 1160.4 727.7C1166.9 727.7 1170.1 727.7 1176.6 727.7C1183.0 727.7 1186.3 727.7 1192.8 727.7C1199.2 727.7 1202.5 727.7 1209.0 727.7C1215.4 727.7 1218.7 727.7 1225.2 727.7C1231.6 727.7 1234.9 727.7 1241.3 727.7C1247.8 727.7 1251.1 727.7 1257.5 727.7C1264.0 727.7 1267.3 727.7 1273.7 727.7C1280.2 727.7 1283.4 727.7 1289.9 727.7C1296.4 727.7 1299.6 727.7 1306.1 727.7C1312.6 727.7 1315.8 727.7 1322.3 727.7C1328.8 727.7 1332.0 727.7 1338.5 727.7C1345.0 727.7 1348.2 727.7 1354.7 727.7C1361.2 727.7 1364.4 727.7 1370.9 727.7C1377.4 727.7 1380.6 727.7 1387.1 727.7C1393.6 727.7 1396.8 727.7 1403.3 727.7C1409.8 727.7 1413.0 727.7 1419.5 727.7C1426.0 727.7 1429.2 727.7 1435.7 727.7C1442.2 727.7 1445.4 727.7 1451.9 727.7C1458.3 727.7 1461.6 727.7 1468.1 727.7C1474.5 727.7 1477.8 727.7 1484.3 727.7C1490.7 727.7 1494.0 727.7 1500.4 727.7C1506.9 727.7 1510.2 727.7 1516.6 727.7C1523.1 727.7 1526.4 727.7 1532.8 727.7C1539.3 727.7 1542.6 727.7 1549.0 727.7C1555.5 727.7 1558.7 727.7 1565.2 727.7C1571.7 727.7 1574.9 727.7 1581.4 727.7C1587.9 727.7 1591.1 727.7 1597.6 727.7C1604.1 727.7 1607.3 727.7 1613.8 727.7C1620.3 727.7 1623.5 727.7 1630.0 727.7C1636.5 727.7 1639.7 727.7 1646.2 727.7C1652.7 727.7 1655.9 727.7 1662.4 727.7C1668.9 727.7 1672.1 727.7 1678.6 727.7C1685.1 727.7 1688.3 727.7 1694.8 727.7C1701.3 727.7 1704.5 727.7 1711.0 727.7C1717.4 727.7 1720.7 727.7 1727.2 727.7C1733.6 727.7 1736.9 727.7 1743.4 727.7C1749.8 727.7 1753.1 727.7 1759.6 727.7C1766.0 727.7 1769.3 727.7 1775.7 727.7C1782.2 727.7 1785.5 727.7 1791.9 727.7C1798.4 727.7 1801.7 727.7 1808.1 727.7C1814.6 727.7 1817.8 727.7 1824.3 727.7C1830.8 727.7 1834.0 727.7 1840.5 727.7C1847.0 727.7 1850.2 727.7 1856.7 727.7C1863.2 727.7 1866.4 727.7 1872.9 727.7C1879.4 727.7 1882.6 727.7 1889.1 727.7C1895.6 727.7 1898.8 727.7 1905.3 727.7C1911.8 727.7 1915.0 727.7 1921.5 727.7C1928.0 727.7 1931.2 727.7 1937.7 727.7C1944.2 727.7 1947.4 727.7 1953.9 727.7C1960.4 727.7 1963.6 727.7 1970.1 727.7C1976.6 727.7 1979.8 727.7 1986.3 727.7C1992.7 727.7 1996.0 727.7 2002.5 727.7C2008.9 727.7 2012.2 727.7 2018.7 727.7C2025.1 727.7 2028.4 727.7 2034.8 727.7C2041.3 727.7 2044.6 727.7 2051.0 727.7C2057.5 727.7 2060.8 727.7 2067.2 727.7C2073.7 727.7 2077.0 727.7 2083.4 727.7C2089.9 727.7 2093.1 727.7 2099.6 727.7C2106.1 727.7 2109.3 727.7 2115.8 727.7C2122.3 727.7 2125.5 727.7 2132.0 727.7C2138.5 727.7 2141.7 727.7 2148.2 727.7C2154.7 727.7 2157.9 727.7 2164.4 727.7C2170.9 727.7 2174.1 727.7 2180.6 727.7C2187.1 727.7 2190.3 727.7 2196.8 727.7C2203.3 727.7 2206.5 727.7 2213.0 727.7C2219.5 727.7 2222.7 727.7 2229.2 727.7C2235.7 727.7 2238.9 727.7 2245.4 727.7C2251.8 727.7 2255.1 727.7 2261.6 727.7C2268.0 727.7 2271.3 727.7 2277.8 727.7C2284.2 727.7 2287.5 727.7 2294.0 727.7C2300.4 727.7 2303.7 727.7 2310.1 727.7C2316.6 727.7 2319.9 727.7 2326.3 727.7C2332.8 727.7 2336.1 727.7 2342.5 727.7C2349.0 727.7 2352.2 727.7 2358.7 727.7C2365.2 727.7 2368.4 727.7 2374.9 727.7C2381.4 727.7 2384.6 727.7 2391.1 727.7C2397.6 727.7 2400.8 727.7 2407.3 727.7C2413.8 727.7 2417.0 727.7 2423.5 727.7C2430.0 727.7 2433.2 727.7 2439.7 727.7C2446.2 727.7 2449.4 727.7 2455.9 727.7C2462.4 727.7 2465.6 727.7 2472.1 727.7C2478.6 727.7 2481.8 727.7 2488.3 727.7C2494.8 727.7 2498.0 727.7 2504.5 727.7C2511.0 727.7 2514.2 727.7 2520.7 727.7C2527.1 727.7 2530.4 727.7 2536.9 727.7C2543.3 727.7 2546.6 727.7 2553.1 727.7C2559.5 727.7 2562.8 727.7 2569.2 727.7C2575.7 727.7 2579.0 727.7 2585.4 727.7C2591.9 727.7 2595.2 727.7 2601.6 727.7C2608.1 727.7 2611.4 727.7 2617.8 727.7C2624.3 727.7 2627.5 727.7 2634.0 727.7C2640.5 727.7 2643.7 727.7 2650.2 727.7C2656.7 727.7 2659.9 727.7 2666.4 727.7C2672.9 727.7 2676.1 727.7 2682.6 727.7C2689.1 727.7 2692.3 727.7 2698.8 727.7 L2698.8 955.5 L1095.6 955.5 Z" fill="rgba(27,125,53,0.5)"/><path d="M1095.6 727.7C1102.1 727.7 1105.3 727.7 1111.8 727.7C1118.3 727.7 1121.5 727.7 1128.0 727.7C1134.5 727.7 1137.7 727.7 1144.2 727.7C1150.7 727.7 1153.9 727.7 1160.4 727.7C1166.9 727.7 1170.1 727.7 1176.6 727.7C1183.0 727.7 1186.3 727.7 1192.8 727.7C1199.2 727.7 1202.5 727.7 1209.0 727.7C1215.4 727.7 1218.7 727.7 1225.2 727.7C1231.6 727.7 1234.9 727.7 1241.3 727.7C1247.8 727.7 1251.1 727.7 1257.5 727.7C1264.0 727.7 1267.3 727.7 1273.7 727.7C1280.2 727.7 1283.4 727.7 1289.9 727.7C1296.4 727.7 1299.6 727.7 1306.1 727.7C1312.6 727.7 1315.8 727.7 1322.3 727.7C1328.8 727.7 1332.0 727.7 1338.5 727.7C1345.0 727.7 1348.2 727.7 1354.7 727.7C1361.2 727.7 1364.4 727.7 1370.9 727.7C1377.4 727.7 1380.6 727.7 1387.1 727.7C1393.6 727.7 1396.8 727.7 1403.3 727.7C1409.8 727.7 1413.0 727.7 1419.5 727.7C1426.0 727.7 1429.2 727.7 1435.7 727.7C1442.2 727.7 1445.4 727.7 1451.9 727.7C1458.3 727.7 1461.6 727.7 1468.1 727.7C1474.5 727.7 1477.8 727.7 1484.3 727.7C1490.7 727.7 1494.0 727.7 1500.4 727.7C1506.9 727.7 1510.2 727.7 1516.6 727.7C1523.1 727.7 1526.4 727.7 1532.8 727.7C1539.3 727.7 1542.6 727.7 1549.0 727.7C1555.5 727.7 1558.7 727.7 1565.2 727.7C1571.7 727.7 1574.9 727.7 1581.4 727.7C1587.9 727.7 1591.1 727.7 1597.6 727.7C1604.1 727.7 1607.3 727.7 1613.8 727.7C1620.3 727.7 1623.5 727.7 1630.0 727.7C1636.5 727.7 1639.7 727.7 1646.2 727.7C1652.7 727.7 1655.9 727.7 1662.4 727.7C1668.9 727.7 1672.1 727.7 1678.6 727.7C1685.1 727.7 1688.3 727.7 1694.8 727.7C1701.3 727.7 1704.5 727.7 1711.0 727.7C1717.4 727.7 1720.7 727.7 1727.2 727.7C1733.6 727.7 1736.9 727.7 1743.4 727.7C1749.8 727.7 1753.1 727.7 1759.6 727.7C1766.0 727.7 1769.3 727.7 1775.7 727.7C1782.2 727.7 1785.5 727.7 1791.9 727.7C1798.4 727.7 1801.7 727.7 1808.1 727.7C1814.6 727.7 1817.8 727.7 1824.3 727.7C1830.8 727.7 1834.0 727.7 1840.5 727.7C1847.0 727.7 1850.2 727.7 1856.7 727.7C1863.2 727.7 1866.4 727.7 1872.9 727.7C1879.4 727.7 1882.6 727.7 1889.1 727.7C1895.6 727.7 1898.8 727.7 1905.3 727.7C1911.8 727.7 1915.0 727.7 1921.5 727.7C1928.0 727.7 1931.2 727.7 1937.7 727.7C1944.2 727.7 1947.4 727.7 1953.9 727.7C1960.4 727.7 1963.6 727.7 1970.1 727.7C1976.6 727.7 1979.8 727.7 1986.3 727.7C1992.7 727.7 1996.0 727.7 2002.5 727.7C2008.9 727.7 2012.2 727.7 2018.7 727.7C2025.1 727.7 2028.4 727.7 2034.8 727.7C2041.3 727.7 2044.6 727.7 2051.0 727.7C2057.5 727.7 2060.8 727.7 2067.2 727.7C2073.7 727.7 2077.0 727.7 2083.4 727.7C2089.9 727.7 2093.1 727.7 2099.6 727.7C2106.1 727.7 2109.3 727.7 2115.8 727.7C2122.3 727.7 2125.5 727.7 2132.0 727.7C2138.5 727.7 2141.7 727.7 2148.2 727.7C2154.7 727.7 2157.9 727.7 2164.4 727.7C2170.9 727.7 2174.1 727.7 2180.6 727.7C2187.1 727.7 2190.3 727.7 2196.8 727.7C2203.3 727.7 2206.5 727.7 2213.0 727.7C2219.5 727.7 2222.7 727.7 2229.2 727.7C2235.7 727.7 2238.9 727.7 2245.4 727.7C2251.8 727.7 2255.1 727.7 2261.6 727.7C2268.0 727.7 2271.3 727.7 2277.8 727.7C2284.2 727.7 2287.5 727.7 2294.0 727.7C2300.4 727.7 2303.7 727.7 2310.1 727.7C2316.6 727.7 2319.9 727.7 2326.3 727.7C2332.8 727.7 2336.1 727.7 2342.5 727.7C2349.0 727.7 2352.2 727.7 2358.7 727.7C2365.2 727.7 2368.4 727.7 2374.9 727.7C2381.4 727.7 2384.6 727.7 2391.1 727.7C2397.6 727.7 2400.8 727.7 2407.3 727.7C2413.8 727.7 2417.0 727.7 2423.5 727.7C2430.0 727.7 2433.2 727.7 2439.7 727.7C2446.2 727.7 2449.4 727.7 2455.9 727.7C2462.4 727.7 2465.6 727.7 2472.1 727.7C2478.6 727.7 2481.8 727.7 2488.3 727.7C2494.8 727.7 2498.0 727.7 2504.5 727.7C2511.0 727.7 2514.2 727.7 2520.7 727.7C2527.1 727.7 2530.4 727.7 2536.9 727.7C2543.3 727.7 2546.6 727.7 2553.1 727.7C2559.5 727.7 2562.8 727.7 2569.2 727.7C2575.7 727.7 2579.0 727.7 2585.4 727.7C2591.9 727.7 2595.2 727.7 2601.6 727.7C2608.1 727.7 2611.4 727.7 2617.8 727.7C2624.3 727.7 2627.5 727.7 2634.0 727.7C2640.5 727.7 2643.7 727.7 2650.2 727.7C2656.7 727.7 2659.9 727.7 2666.4 727.7C2672.9 727.7 2676.1 727.7 2682.6 727.7C2689.1 727.7 2692.3 727.7 2698.8 727.7" fill="none" stroke="#0d7a1c" stroke-width="1.800" stroke-linejoin="round"/><g fill="rgba(27,125,53,0.5)" stroke="#0d7a1c" stroke-width="1.800"><circle cx="1095.6" cy="727.7" r="2.100"/><circle cx="1111.8" cy="727.7" r="2.100"/><circle cx="1128.0" cy="727.7" r="2.100"/><circle cx="1144.2" cy="727.7" r="2.100"/><circle cx="1160.4" cy="727.7" r="2.100"/><circle cx="1176.6" cy="727.7" r="2.100"/><circle cx="1192.8" cy="727.7" r="2.100"/><circle cx="1209.0" cy="727.7" r="2.100"/><circle cx="1225.2" cy="727.7" r="2.100"/><circle cx="1241.3" cy="727.7" r="2.100"/><circle cx="1257.5" cy="727.7" r="2.100"/><circle cx="1273.7" cy="727.7" r="2.100"/><circle cx="1289.9" cy="727.7" r="2.100"/><circle cx="1306.1" cy="727.7" r="2.100"/><circle cx="1322.3" cy="727.7" r="2.100"/><circle cx="1338.5" cy="727.7" r="2.100"/><circle cx="1354.7" cy="727.7" r="2.100"/><circle cx="1370.9" cy="727.7" r="2.100"/><circle cx="1387.1" cy="727.7" r="2.100"/><circle cx="1403.3" cy="727.7" r="2.100"/><circle cx="1419.5" cy="727.7" r="2.100"/><circle cx="1435.7" cy="727.7" r="2.100"/><circle cx="1451.9" cy="727.7" r="2.100"/><circle cx="1468.1" cy="727.7" r="2.100"/><circle cx="1484.3" cy="727.7" r="2.100"/><circle cx="1500.4" cy="727.7" r="2.100"/><circle cx="1516.6" cy="727.7" r="2.100"/><circle cx="1532.8" cy="727.7" r="2.100"/><circle cx="1549.0" cy="727.7" r="2.100"/><circle cx="1565.2" cy="727.7" r="2.100"/><circle cx="1581.4" cy="727.7" r="2.100"/><circle cx="1597.6" cy="727.7" r="2.100"/><circle cx="1613.8" cy="727.7" r="2.100"/><circle cx="1630.0" cy="727.7" r="2.100"/><circle cx="1646.2" cy="727.7" r="2.100"/><circle cx="1662.4" cy="727.7" r="2.100"/><circle cx="1678.6" cy="727.7" r="2.100"/><circle cx="1694.8" cy="727.7" r="2.100"/><circle cx="1711.0" cy="727.7" r="2.100"/><circle cx="1727.2" cy="727.7" r="2.100"/><circle cx="1743.4" cy="727.7" r="2.100"/><circle cx="1759.6" cy="727.7" r="2.100"/><circle cx="1775.7" cy="727.7" r="2.100"/><circle cx="1791.9" cy="727.7" r="2.100"/><circle cx="1808.1" cy="727.7" r="2.100"/><circle cx="1824.3" cy="727.7" r="2.100"/><circle cx="1840.5" cy="727.7" r="2.100"/><circle cx="1856.7" cy="727.7" r="2.100"/><circle cx="1872.9" cy="727.7" r="2.100"/><circle cx="1889.1" cy="727.7" r="2.100"/><circle cx="1905.3" cy="727.7" r="2.100"/><circle cx="1921.5" cy="727.7" r="2.100"/><circle cx="1937.7" cy="727.7" r="2.100"/><circle cx="1953.9" cy="727.7" r="2.100"/><circle cx="1970.1" cy="727.7" r="2.100"/><circle cx="1986.3" cy="727.7" r="2.100"/><circle cx="2002.5" cy="727.7" r="2.100"/><circle cx="2018.7" cy="727.7" r="2.100"/><circle cx="2034.8" cy="727.7" r="2.100"/><circle cx="2051.0" cy="727.7" r="2.100"/><circle cx="2067.2" cy="727.7" r="2.100"/><circle cx="2083.4" cy="727.7" r="2.100"/><circle cx="2099.6" cy="727.7" r="2.100"/><circle cx="2115.8" cy="727.7" r="2.100"/><circle cx="2132.0" cy="727.7" r="2.100"/><circle cx="2148.2" cy="727.7" r="2.100"/><circle cx="2164.4" cy="727.7" r="2.100"/><circle cx="2180.6" cy="727.7" r="2.100"/><circle cx="2196.8" cy="727.7" r="2.100"/><circle cx="2213.0" cy="727.7" r="2.100"/><circle cx="2229.2" cy="727.7" r="2.100"/><circle cx="2245.4" cy="727.7" r="2.100"/><circle cx="2261.6" cy="727.7" r="2.100"/><circle cx="2277.8" cy="727.7" r="2.100"/><circle cx="2294.0" cy="727.7" r="2.100"/><circle cx="2310.1" cy="727.7" r="2.100"/><circle cx="2326.3" cy="727.7" r="2.100"/><circle cx="2342.5" cy="727.7" r="2.100"/><circle cx="2358.7" cy="727.7" r="2.100"/><circle cx="2374.9" cy="727.7" r="2.100"/><circle cx="2391.1" cy="727.7" r="2.100"/><circle cx="2407.3" cy="727.7" r="2.100"/><circle cx="2423.5" cy="727.7" r="2.100"/><circle cx="2439.7" cy="727.7" r="2.100"/><circle cx="2455.9" cy="727.7" r="2.100"/><circle cx="2472.1" cy="727.7" r="2.100"/><circle cx="2488.3" cy="727.7" r="2.100"/><circle cx="2504.5" cy="727.7" r="2.100"/><circle cx="2520.7" cy="727.7" r="2.100"/><circle cx="2536.9" cy="727.7" r="2.100"/><circle cx="2553.1" cy="727.7" r="2.100"/><circle cx="2569.2" cy="727.7" r="2.100"/><circle cx="2585.4" cy="727.7" r="2.100"/><circle cx="2601.6" cy="727.7" r="2.100"/><circle cx="2617.8" cy="727.7" r="2.100"/><circle cx="2634.0" cy="727.7" r="2.100"/><circle cx="2650.2" cy="727.7" r="2.100"/><circle cx="2666.4" cy="727.7" r="2.100"/><circle cx="2682.6" cy="727.7" r="2.100"/><circle cx="2698.8" cy="727.7" r="2.100"/></g><rect x="1686.1" y="686.7" width="74.800" height="22.200" fill="rgba(27,125,53,0.5)" stroke="#0d7a1c" stroke-width="1.800"/></svg>
<span id="t53" class="t " style="top:943.8px;font-size:21.60px;color:#666666;-webkit-text-stroke-width:0.35px;left:1075.6px;transform:translateX(-100%);">0</span>
<span id="t54" class="t " style="top:898.3px;font-size:21.60px;color:#666666;-webkit-text-stroke-width:0.35px;left:1075.6px;transform:translateX(-100%);">10</span>
<span id="t55" class="t " style="top:852.7px;font-size:21.60px;color:#666666;-webkit-text-stroke-width:0.35px;left:1075.6px;transform:translateX(-100%);">20</span>
<span id="t56" class="t " style="top:807.1px;font-size:21.60px;color:#666666;-webkit-text-stroke-width:0.35px;left:1075.6px;transform:translateX(-100%);">30</span>
<span id="t57" class="t " style="top:761.6px;font-size:21.60px;color:#666666;-webkit-text-stroke-width:0.35px;left:1075.6px;transform:translateX(-100%);">40</span>
<span id="t58" class="t " style="top:716.0px;font-size:21.60px;color:#666666;-webkit-text-stroke-width:0.35px;left:1075.6px;transform:translateX(-100%);">50</span>
<span id="t59" class="t " style="top:686.9px;font-size:21.60px;color:#666666;-webkit-text-stroke-width:0.35px;left:1772.6px;letter-spacing:0.468px;">Send Packets Per Second</span>
<svg class="chart" style="left:1040px;top:1006.0px" width="1659" height="298.5" viewBox="1040 1006.0 1659 298.5"><path d="M1077.6 1294.1 H2699" stroke="rgba(0,0,0,0.25)" stroke-width="1.800"/><path d="M1077.6 1218.2 H2699" stroke="rgba(0,0,0,0.1)" stroke-width="1.800"/><path d="M1077.6 1142.2 H2699" stroke="rgba(0,0,0,0.1)" stroke-width="1.800"/><path d="M1077.6 1066.3 H2699" stroke="rgba(0,0,0,0.1)" stroke-width="1.800"/><path d="M1095.6 1066.3 V1294.1" stroke="rgba(0,0,0,0.1)" stroke-width="1.800"/><path d="M1095.6 1096.3C1102.1 1098.9 1105.5 1103.1 1111.8 1102.7C1118.4 1102.4 1121.5 1094.4 1128.0 1094.4C1134.5 1094.4 1137.7 1102.7 1144.2 1102.7C1150.6 1102.8 1153.7 1095.6 1160.4 1094.8C1166.6 1094.0 1170.0 1098.1 1176.6 1099.0C1182.9 1099.8 1186.3 1099.0 1192.8 1099.0C1199.2 1099.0 1202.6 1099.6 1209.0 1099.0C1215.5 1098.3 1218.8 1094.9 1225.2 1095.5C1231.8 1096.2 1234.7 1101.3 1241.3 1102.0C1247.6 1102.7 1251.0 1099.6 1257.5 1099.0C1264.0 1098.3 1267.3 1099.0 1273.7 1099.0C1280.2 1099.0 1283.4 1099.0 1289.9 1099.0C1296.4 1099.0 1299.8 1099.8 1306.1 1099.0C1312.7 1098.0 1315.8 1094.5 1322.3 1094.4C1328.8 1094.3 1331.9 1097.7 1338.5 1098.6C1344.9 1099.4 1348.2 1098.6 1354.7 1098.6C1361.2 1098.6 1364.4 1098.6 1370.9 1098.6C1377.4 1098.6 1380.6 1098.6 1387.1 1098.6C1393.6 1098.6 1396.9 1097.8 1403.3 1098.6C1409.8 1099.3 1413.0 1102.4 1419.5 1102.4C1426.0 1102.3 1429.2 1099.8 1435.7 1098.2C1442.1 1096.6 1445.4 1094.4 1451.9 1094.4C1458.3 1094.4 1461.5 1097.4 1468.1 1098.2C1474.5 1098.9 1477.8 1098.2 1484.3 1098.2C1490.7 1098.2 1494.0 1098.2 1500.4 1098.2C1506.9 1098.2 1510.2 1098.2 1516.6 1098.2C1523.1 1098.2 1526.4 1097.9 1532.8 1098.2C1539.3 1098.5 1542.6 1100.1 1549.0 1099.7C1555.6 1099.3 1559.0 1095.4 1565.2 1096.3C1572.0 1097.2 1575.3 1105.1 1581.4 1104.3C1588.3 1103.4 1591.0 1092.5 1597.6 1092.1C1603.9 1091.7 1607.1 1101.9 1613.8 1102.4C1620.1 1102.8 1623.3 1095.2 1630.0 1094.4C1636.2 1093.7 1639.6 1097.6 1646.2 1098.6C1652.6 1099.5 1656.0 1098.1 1662.4 1099.0C1669.0 1099.8 1672.0 1102.3 1678.6 1102.7C1685.0 1103.2 1688.6 1103.0 1694.8 1101.2C1701.6 1099.2 1704.4 1093.6 1711.0 1093.3C1717.3 1093.0 1720.5 1098.8 1727.2 1099.7C1733.4 1100.6 1736.9 1098.0 1743.4 1097.8C1749.8 1097.7 1753.2 1097.7 1759.6 1099.0C1766.2 1100.3 1769.3 1104.3 1775.7 1104.3C1782.2 1104.2 1785.4 1100.6 1791.9 1098.6C1798.4 1096.5 1801.9 1093.4 1808.1 1094.0C1814.8 1094.7 1817.8 1102.0 1824.3 1102.0C1830.8 1102.0 1834.0 1094.0 1840.5 1094.0C1847.0 1094.0 1850.3 1098.6 1856.7 1102.0C1863.3 1105.5 1866.9 1112.1 1872.9 1111.1C1879.9 1110.0 1881.7 1099.8 1889.1 1096.7C1894.6 1094.3 1898.8 1096.9 1905.3 1097.4C1911.8 1098.0 1915.0 1099.0 1921.5 1099.3C1927.9 1099.7 1931.4 1100.3 1937.7 1099.3C1944.3 1098.3 1948.1 1092.8 1953.9 1094.4C1961.1 1096.3 1963.1 1106.9 1970.1 1108.1C1976.1 1109.0 1979.5 1102.1 1986.3 1099.7C1992.4 1097.5 1995.9 1097.4 2002.5 1096.7C2008.9 1096.0 2012.4 1095.2 2018.7 1096.3C2025.3 1097.5 2028.3 1102.0 2034.8 1102.4C2041.2 1102.7 2044.5 1098.6 2051.0 1098.2C2057.4 1097.8 2060.9 1101.1 2067.2 1100.5C2073.8 1099.8 2077.1 1094.9 2083.4 1095.2C2090.0 1095.5 2093.2 1102.1 2099.6 1102.0C2106.2 1101.8 2109.2 1094.7 2115.8 1094.4C2122.2 1094.1 2125.3 1099.4 2132.0 1100.5C2138.3 1101.5 2141.7 1100.2 2148.2 1099.7C2154.7 1099.3 2159.4 1095.4 2164.4 1098.2C2172.3 1102.6 2172.7 1112.7 2180.6 1117.9C2185.6 1121.2 2190.5 1117.9 2196.8 1119.5C2203.5 1121.1 2206.4 1125.4 2213.0 1125.9C2219.3 1126.4 2222.7 1123.6 2229.2 1122.1C2235.6 1120.7 2240.1 1116.3 2245.4 1118.7C2253.0 1122.1 2257.0 1139.8 2261.6 1136.5C2269.9 1130.5 2270.5 1098.0 2277.8 1095.5C2283.4 1093.6 2285.3 1118.7 2294.0 1125.5C2298.2 1128.9 2303.5 1122.0 2310.1 1121.0C2316.5 1120.0 2320.4 1118.8 2326.3 1120.6C2333.3 1122.6 2335.5 1128.3 2342.5 1130.5C2348.5 1132.3 2352.5 1131.7 2358.7 1130.5C2365.4 1129.1 2369.9 1121.6 2374.9 1124.0C2382.8 1127.8 2385.6 1147.9 2391.1 1146.0C2398.5 1143.6 2400.0 1126.0 2407.3 1113.4C2413.0 1103.6 2415.3 1096.3 2423.5 1090.2C2428.2 1086.7 2435.1 1086.1 2439.7 1089.5C2448.1 1095.6 2449.0 1113.3 2455.9 1114.1C2462.0 1114.9 2464.3 1097.2 2472.1 1093.6C2477.2 1091.3 2481.6 1097.7 2488.3 1099.3C2494.6 1100.9 2498.2 1102.3 2504.5 1101.6C2511.1 1100.8 2514.0 1096.6 2520.7 1095.5C2526.9 1094.6 2531.0 1094.5 2536.9 1096.7C2543.9 1099.3 2547.1 1108.6 2553.1 1107.7C2560.0 1106.6 2562.1 1093.4 2569.2 1091.7C2575.0 1090.4 2578.6 1099.0 2585.4 1100.1C2591.6 1101.1 2595.1 1097.5 2601.6 1097.1C2608.1 1096.6 2611.4 1097.2 2617.8 1097.8C2624.3 1098.4 2627.5 1100.1 2634.0 1100.1C2640.5 1100.1 2643.7 1098.2 2650.2 1097.8C2656.7 1097.4 2660.0 1097.5 2666.4 1098.2C2672.9 1098.9 2676.3 1102.0 2682.6 1101.2C2689.3 1100.4 2692.3 1097.1 2698.8 1094.4 L2698.8 1294.1 L1095.6 1294.1 Z" fill="rgba(167,21,25,0.5)"/><path d="M1095.6 1096.3C1102.1 1098.9 1105.5 1103.1 1111.8 1102.7C1118.4 1102.4 1121.5 1094.4 1128.0 1094.4C1134.5 1094.4 1137.7 1102.7 1144.2 1102.7C1150.6 1102.8 1153.7 1095.6 1160.4 1094.8C1166.6 1094.0 1170.0 1098.1 1176.6 1099.0C1182.9 1099.8 1186.3 1099.0 1192.8 1099.0C1199.2 1099.0 1202.6 1099.6 1209.0 1099.0C1215.5 1098.3 1218.8 1094.9 1225.2 1095.5C1231.8 1096.2 1234.7 1101.3 1241.3 1102.0C1247.6 1102.7 1251.0 1099.6 1257.5 1099.0C1264.0 1098.3 1267.3 1099.0 1273.7 1099.0C1280.2 1099.0 1283.4 1099.0 1289.9 1099.0C1296.4 1099.0 1299.8 1099.8 1306.1 1099.0C1312.7 1098.0 1315.8 1094.5 1322.3 1094.4C1328.8 1094.3 1331.9 1097.7 1338.5 1098.6C1344.9 1099.4 1348.2 1098.6 1354.7 1098.6C1361.2 1098.6 1364.4 1098.6 1370.9 1098.6C1377.4 1098.6 1380.6 1098.6 1387.1 1098.6C1393.6 1098.6 1396.9 1097.8 1403.3 1098.6C1409.8 1099.3 1413.0 1102.4 1419.5 1102.4C1426.0 1102.3 1429.2 1099.8 1435.7 1098.2C1442.1 1096.6 1445.4 1094.4 1451.9 1094.4C1458.3 1094.4 1461.5 1097.4 1468.1 1098.2C1474.5 1098.9 1477.8 1098.2 1484.3 1098.2C1490.7 1098.2 1494.0 1098.2 1500.4 1098.2C1506.9 1098.2 1510.2 1098.2 1516.6 1098.2C1523.1 1098.2 1526.4 1097.9 1532.8 1098.2C1539.3 1098.5 1542.6 1100.1 1549.0 1099.7C1555.6 1099.3 1559.0 1095.4 1565.2 1096.3C1572.0 1097.2 1575.3 1105.1 1581.4 1104.3C1588.3 1103.4 1591.0 1092.5 1597.6 1092.1C1603.9 1091.7 1607.1 1101.9 1613.8 1102.4C1620.1 1102.8 1623.3 1095.2 1630.0 1094.4C1636.2 1093.7 1639.6 1097.6 1646.2 1098.6C1652.6 1099.5 1656.0 1098.1 1662.4 1099.0C1669.0 1099.8 1672.0 1102.3 1678.6 1102.7C1685.0 1103.2 1688.6 1103.0 1694.8 1101.2C1701.6 1099.2 1704.4 1093.6 1711.0 1093.3C1717.3 1093.0 1720.5 1098.8 1727.2 1099.7C1733.4 1100.6 1736.9 1098.0 1743.4 1097.8C1749.8 1097.7 1753.2 1097.7 1759.6 1099.0C1766.2 1100.3 1769.3 1104.3 1775.7 1104.3C1782.2 1104.2 1785.4 1100.6 1791.9 1098.6C1798.4 1096.5 1801.9 1093.4 1808.1 1094.0C1814.8 1094.7 1817.8 1102.0 1824.3 1102.0C1830.8 1102.0 1834.0 1094.0 1840.5 1094.0C1847.0 1094.0 1850.3 1098.6 1856.7 1102.0C1863.3 1105.5 1866.9 1112.1 1872.9 1111.1C1879.9 1110.0 1881.7 1099.8 1889.1 1096.7C1894.6 1094.3 1898.8 1096.9 1905.3 1097.4C1911.8 1098.0 1915.0 1099.0 1921.5 1099.3C1927.9 1099.7 1931.4 1100.3 1937.7 1099.3C1944.3 1098.3 1948.1 1092.8 1953.9 1094.4C1961.1 1096.3 1963.1 1106.9 1970.1 1108.1C1976.1 1109.0 1979.5 1102.1 1986.3 1099.7C1992.4 1097.5 1995.9 1097.4 2002.5 1096.7C2008.9 1096.0 2012.4 1095.2 2018.7 1096.3C2025.3 1097.5 2028.3 1102.0 2034.8 1102.4C2041.2 1102.7 2044.5 1098.6 2051.0 1098.2C2057.4 1097.8 2060.9 1101.1 2067.2 1100.5C2073.8 1099.8 2077.1 1094.9 2083.4 1095.2C2090.0 1095.5 2093.2 1102.1 2099.6 1102.0C2106.2 1101.8 2109.2 1094.7 2115.8 1094.4C2122.2 1094.1 2125.3 1099.4 2132.0 1100.5C2138.3 1101.5 2141.7 1100.2 2148.2 1099.7C2154.7 1099.3 2159.4 1095.4 2164.4 1098.2C2172.3 1102.6 2172.7 1112.7 2180.6 1117.9C2185.6 1121.2 2190.5 1117.9 2196.8 1119.5C2203.5 1121.1 2206.4 1125.4 2213.0 1125.9C2219.3 1126.4 2222.7 1123.6 2229.2 1122.1C2235.6 1120.7 2240.1 1116.3 2245.4 1118.7C2253.0 1122.1 2257.0 1139.8 2261.6 1136.5C2269.9 1130.5 2270.5 1098.0 2277.8 1095.5C2283.4 1093.6 2285.3 1118.7 2294.0 1125.5C2298.2 1128.9 2303.5 1122.0 2310.1 1121.0C2316.5 1120.0 2320.4 1118.8 2326.3 1120.6C2333.3 1122.6 2335.5 1128.3 2342.5 1130.5C2348.5 1132.3 2352.5 1131.7 2358.7 1130.5C2365.4 1129.1 2369.9 1121.6 2374.9 1124.0C2382.8 1127.8 2385.6 1147.9 2391.1 1146.0C2398.5 1143.6 2400.0 1126.0 2407.3 1113.4C2413.0 1103.6 2415.3 1096.3 2423.5 1090.2C2428.2 1086.7 2435.1 1086.1 2439.7 1089.5C2448.1 1095.6 2449.0 1113.3 2455.9 1114.1C2462.0 1114.9 2464.3 1097.2 2472.1 1093.6C2477.2 1091.3 2481.6 1097.7 2488.3 1099.3C2494.6 1100.9 2498.2 1102.3 2504.5 1101.6C2511.1 1100.8 2514.0 1096.6 2520.7 1095.5C2526.9 1094.6 2531.0 1094.5 2536.9 1096.7C2543.9 1099.3 2547.1 1108.6 2553.1 1107.7C2560.0 1106.6 2562.1 1093.4 2569.2 1091.7C2575.0 1090.4 2578.6 1099.0 2585.4 1100.1C2591.6 1101.1 2595.1 1097.5 2601.6 1097.1C2608.1 1096.6 2611.4 1097.2 2617.8 1097.8C2624.3 1098.4 2627.5 1100.1 2634.0 1100.1C2640.5 1100.1 2643.7 1098.2 2650.2 1097.8C2656.7 1097.4 2660.0 1097.5 2666.4 1098.2C2672.9 1098.9 2676.3 1102.0 2682.6 1101.2C2689.3 1100.4 2692.3 1097.1 2698.8 1094.4" fill="none" stroke="#a8140c" stroke-width="1.800" stroke-linejoin="round"/><g fill="rgba(167,21,25,0.5)" stroke="#a8140c" stroke-width="1.800"><circle cx="1095.6" cy="1096.3" r="2.100"/><circle cx="1111.8" cy="1102.7" r="2.100"/><circle cx="1128.0" cy="1094.4" r="2.100"/><circle cx="1144.2" cy="1102.7" r="2.100"/><circle cx="1160.4" cy="1094.8" r="2.100"/><circle cx="1176.6" cy="1099.0" r="2.100"/><circle cx="1192.8" cy="1099.0" r="2.100"/><circle cx="1209.0" cy="1099.0" r="2.100"/><circle cx="1225.2" cy="1095.5" r="2.100"/><circle cx="1241.3" cy="1102.0" r="2.100"/><circle cx="1257.5" cy="1099.0" r="2.100"/><circle cx="1273.7" cy="1099.0" r="2.100"/><circle cx="1289.9" cy="1099.0" r="2.100"/><circle cx="1306.1" cy="1099.0" r="2.100"/><circle cx="1322.3" cy="1094.4" r="2.100"/><circle cx="1338.5" cy="1098.6" r="2.100"/><circle cx="1354.7" cy="1098.6" r="2.100"/><circle cx="1370.9" cy="1098.6" r="2.100"/><circle cx="1387.1" cy="1098.6" r="2.100"/><circle cx="1403.3" cy="1098.6" r="2.100"/><circle cx="1419.5" cy="1102.4" r="2.100"/><circle cx="1435.7" cy="1098.2" r="2.100"/><circle cx="1451.9" cy="1094.4" r="2.100"/><circle cx="1468.1" cy="1098.2" r="2.100"/><circle cx="1484.3" cy="1098.2" r="2.100"/><circle cx="1500.4" cy="1098.2" r="2.100"/><circle cx="1516.6" cy="1098.2" r="2.100"/><circle cx="1532.8" cy="1098.2" r="2.100"/><circle cx="1549.0" cy="1099.7" r="2.100"/><circle cx="1565.2" cy="1096.3" r="2.100"/><circle cx="1581.4" cy="1104.3" r="2.100"/><circle cx="1597.6" cy="1092.1" r="2.100"/><circle cx="1613.8" cy="1102.4" r="2.100"/><circle cx="1630.0" cy="1094.4" r="2.100"/><circle cx="1646.2" cy="1098.6" r="2.100"/><circle cx="1662.4" cy="1099.0" r="2.100"/><circle cx="1678.6" cy="1102.7" r="2.100"/><circle cx="1694.8" cy="1101.2" r="2.100"/><circle cx="1711.0" cy="1093.3" r="2.100"/><circle cx="1727.2" cy="1099.7" r="2.100"/><circle cx="1743.4" cy="1097.8" r="2.100"/><circle cx="1759.6" cy="1099.0" r="2.100"/><circle cx="1775.7" cy="1104.3" r="2.100"/><circle cx="1791.9" cy="1098.6" r="2.100"/><circle cx="1808.1" cy="1094.0" r="2.100"/><circle cx="1824.3" cy="1102.0" r="2.100"/><circle cx="1840.5" cy="1094.0" r="2.100"/><circle cx="1856.7" cy="1102.0" r="2.100"/><circle cx="1872.9" cy="1111.1" r="2.100"/><circle cx="1889.1" cy="1096.7" r="2.100"/><circle cx="1905.3" cy="1097.4" r="2.100"/><circle cx="1921.5" cy="1099.3" r="2.100"/><circle cx="1937.7" cy="1099.3" r="2.100"/><circle cx="1953.9" cy="1094.4" r="2.100"/><circle cx="1970.1" cy="1108.1" r="2.100"/><circle cx="1986.3" cy="1099.7" r="2.100"/><circle cx="2002.5" cy="1096.7" r="2.100"/><circle cx="2018.7" cy="1096.3" r="2.100"/><circle cx="2034.8" cy="1102.4" r="2.100"/><circle cx="2051.0" cy="1098.2" r="2.100"/><circle cx="2067.2" cy="1100.5" r="2.100"/><circle cx="2083.4" cy="1095.2" r="2.100"/><circle cx="2099.6" cy="1102.0" r="2.100"/><circle cx="2115.8" cy="1094.4" r="2.100"/><circle cx="2132.0" cy="1100.5" r="2.100"/><circle cx="2148.2" cy="1099.7" r="2.100"/><circle cx="2164.4" cy="1098.2" r="2.100"/><circle cx="2180.6" cy="1117.9" r="2.100"/><circle cx="2196.8" cy="1119.5" r="2.100"/><circle cx="2213.0" cy="1125.9" r="2.100"/><circle cx="2229.2" cy="1122.1" r="2.100"/><circle cx="2245.4" cy="1118.7" r="2.100"/><circle cx="2261.6" cy="1136.5" r="2.100"/><circle cx="2277.8" cy="1095.5" r="2.100"/><circle cx="2294.0" cy="1125.5" r="2.100"/><circle cx="2310.1" cy="1121.0" r="2.100"/><circle cx="2326.3" cy="1120.6" r="2.100"/><circle cx="2342.5" cy="1130.5" r="2.100"/><circle cx="2358.7" cy="1130.5" r="2.100"/><circle cx="2374.9" cy="1124.0" r="2.100"/><circle cx="2391.1" cy="1146.0" r="2.100"/><circle cx="2407.3" cy="1113.4" r="2.100"/><circle cx="2423.5" cy="1090.2" r="2.100"/><circle cx="2439.7" cy="1089.5" r="2.100"/><circle cx="2455.9" cy="1114.1" r="2.100"/><circle cx="2472.1" cy="1093.6" r="2.100"/><circle cx="2488.3" cy="1099.3" r="2.100"/><circle cx="2504.5" cy="1101.6" r="2.100"/><circle cx="2520.7" cy="1095.5" r="2.100"/><circle cx="2536.9" cy="1096.7" r="2.100"/><circle cx="2553.1" cy="1107.7" r="2.100"/><circle cx="2569.2" cy="1091.7" r="2.100"/><circle cx="2585.4" cy="1100.1" r="2.100"/><circle cx="2601.6" cy="1097.1" r="2.100"/><circle cx="2617.8" cy="1097.8" r="2.100"/><circle cx="2634.0" cy="1100.1" r="2.100"/><circle cx="2650.2" cy="1097.8" r="2.100"/><circle cx="2666.4" cy="1098.2" r="2.100"/><circle cx="2682.6" cy="1101.2" r="2.100"/><circle cx="2698.8" cy="1094.4" r="2.100"/></g><rect x="1678.1" y="1024.7" width="74.800" height="22.200" fill="rgba(167,21,25,0.5)" stroke="#a8140c" stroke-width="1.800"/></svg>
<span id="t60" class="t " style="top:1282.4px;font-size:21.60px;color:#666666;-webkit-text-stroke-width:0.35px;left:1075.6px;transform:translateX(-100%);">0</span>
<span id="t61" class="t " style="top:1206.5px;font-size:21.60px;color:#666666;-webkit-text-stroke-width:0.35px;left:1075.6px;transform:translateX(-100%);">20</span>
<span id="t62" class="t " style="top:1130.5px;font-size:21.60px;color:#666666;-webkit-text-stroke-width:0.35px;left:1075.6px;transform:translateX(-100%);">40</span>
<span id="t63" class="t " style="top:1054.6px;font-size:21.60px;color:#666666;-webkit-text-stroke-width:0.35px;left:1075.6px;transform:translateX(-100%);">60</span>
<span id="t64" class="t " style="top:1024.9px;font-size:21.60px;color:#666666;-webkit-text-stroke-width:0.35px;left:1764.4px;letter-spacing:0.477px;">Receive Kilobits per second</span>
<svg class="chart" style="left:1040px;top:1304.5px" width="1659" height="298.5" viewBox="1040 1304.5 1659 298.5"><path d="M1077.6 1592.8 H2699" stroke="rgba(0,0,0,0.25)" stroke-width="1.800"/><path d="M1077.6 1516.9 H2699" stroke="rgba(0,0,0,0.1)" stroke-width="1.800"/><path d="M1077.6 1440.9 H2699" stroke="rgba(0,0,0,0.1)" stroke-width="1.800"/><path d="M1077.6 1365.0 H2699" stroke="rgba(0,0,0,0.1)" stroke-width="1.800"/><path d="M1095.6 1365.0 V1592.8" stroke="rgba(0,0,0,0.1)" stroke-width="1.800"/><path d="M1095.6 1399.2C1102.1 1402.2 1105.3 1406.8 1111.8 1406.8C1118.3 1406.8 1121.5 1399.2 1128.0 1399.2C1134.5 1399.2 1137.7 1406.8 1144.2 1406.8C1150.7 1406.8 1153.7 1400.0 1160.4 1399.2C1166.6 1398.4 1170.0 1402.2 1176.6 1403.0C1183.0 1403.7 1186.3 1403.0 1192.8 1403.0C1199.2 1403.0 1202.5 1403.0 1209.0 1403.0C1215.4 1403.0 1218.7 1403.0 1225.2 1403.0C1231.6 1403.0 1234.9 1403.0 1241.3 1403.0C1247.8 1403.0 1251.1 1403.0 1257.5 1403.0C1264.0 1403.0 1267.3 1403.0 1273.7 1403.0C1280.2 1403.0 1283.4 1403.0 1289.9 1403.0C1296.4 1403.0 1299.6 1403.0 1306.1 1403.0C1312.6 1403.0 1315.8 1403.0 1322.3 1403.0C1328.8 1403.0 1332.0 1403.0 1338.5 1403.0C1345.0 1403.0 1348.2 1403.0 1354.7 1403.0C1361.2 1403.0 1364.4 1403.0 1370.9 1403.0C1377.4 1403.0 1380.6 1403.0 1387.1 1403.0C1393.6 1403.0 1396.9 1402.2 1403.3 1403.0C1409.8 1403.7 1413.0 1406.8 1419.5 1406.8C1426.0 1406.8 1429.2 1404.5 1435.7 1403.0C1442.2 1401.4 1445.4 1399.2 1451.9 1399.2C1458.3 1399.2 1461.5 1402.2 1468.1 1403.0C1474.5 1403.7 1477.8 1403.0 1484.3 1403.0C1490.7 1403.0 1494.0 1403.0 1500.4 1403.0C1506.9 1403.0 1510.2 1403.0 1516.6 1403.0C1523.1 1403.0 1526.4 1403.0 1532.8 1403.0C1539.3 1403.0 1542.6 1403.0 1549.0 1403.0C1555.5 1403.0 1558.8 1402.2 1565.2 1403.0C1571.8 1403.7 1575.2 1407.5 1581.4 1406.8C1588.1 1406.0 1590.9 1400.0 1597.6 1399.2C1603.9 1398.4 1607.2 1402.2 1613.8 1403.0C1620.2 1403.7 1623.5 1403.0 1630.0 1403.0C1636.5 1403.0 1639.7 1403.0 1646.2 1403.0C1652.7 1403.0 1656.0 1402.2 1662.4 1403.0C1669.0 1403.7 1672.0 1406.0 1678.6 1406.8C1685.0 1407.5 1688.6 1408.2 1694.8 1406.8C1701.6 1405.2 1704.3 1400.0 1711.0 1399.2C1717.2 1398.4 1720.6 1402.2 1727.2 1403.0C1733.6 1403.7 1736.9 1403.0 1743.4 1403.0C1749.8 1403.0 1753.2 1402.2 1759.6 1403.0C1766.1 1403.7 1769.3 1406.8 1775.7 1406.8C1782.2 1406.8 1785.4 1403.7 1791.9 1403.0C1798.3 1402.2 1801.7 1403.0 1808.1 1403.0C1814.6 1403.0 1817.8 1403.0 1824.3 1403.0C1830.8 1403.0 1834.0 1403.0 1840.5 1403.0C1847.0 1403.0 1850.2 1403.0 1856.7 1403.0C1863.2 1403.0 1866.5 1403.7 1872.9 1403.0C1879.5 1402.2 1882.6 1399.2 1889.1 1399.2C1895.6 1399.2 1898.7 1402.2 1905.3 1403.0C1911.7 1403.7 1915.0 1403.0 1921.5 1403.0C1928.0 1403.0 1931.2 1403.0 1937.7 1403.0C1944.2 1403.0 1947.7 1401.5 1953.9 1403.0C1960.7 1404.6 1963.6 1410.6 1970.1 1410.6C1976.6 1410.6 1979.5 1404.6 1986.3 1403.0C1992.4 1401.5 1996.0 1403.0 2002.5 1403.0C2008.9 1403.0 2012.2 1403.0 2018.7 1403.0C2025.1 1403.0 2028.4 1403.0 2034.8 1403.0C2041.3 1403.0 2044.7 1402.2 2051.0 1403.0C2057.6 1403.7 2060.8 1406.8 2067.2 1406.8C2073.7 1406.8 2076.9 1403.7 2083.4 1403.0C2089.8 1402.2 2093.1 1403.0 2099.6 1403.0C2106.1 1403.0 2109.3 1403.0 2115.8 1403.0C2122.3 1403.0 2125.5 1403.0 2132.0 1403.0C2138.5 1403.0 2141.7 1403.0 2148.2 1403.0C2154.7 1403.0 2158.0 1402.2 2164.4 1403.0C2171.0 1403.7 2174.4 1407.5 2180.6 1406.8C2187.3 1406.0 2190.1 1400.0 2196.8 1399.2C2203.0 1398.4 2206.4 1402.2 2213.0 1403.0C2219.4 1403.7 2222.7 1403.0 2229.2 1403.0C2235.7 1403.0 2239.0 1402.2 2245.4 1403.0C2251.9 1403.7 2255.1 1406.8 2261.6 1406.8C2268.0 1406.8 2271.2 1403.7 2277.8 1403.0C2284.1 1402.2 2287.5 1403.0 2294.0 1403.0C2300.4 1403.0 2303.7 1403.0 2310.1 1403.0C2316.6 1403.0 2319.9 1402.2 2326.3 1403.0C2332.9 1403.7 2336.3 1407.5 2342.5 1406.8C2349.2 1406.0 2352.0 1400.0 2358.7 1399.2C2365.0 1398.4 2368.7 1400.8 2374.9 1403.0C2381.6 1405.3 2385.0 1411.3 2391.1 1410.6C2397.9 1409.8 2400.2 1401.7 2407.3 1399.2C2413.1 1397.1 2417.1 1398.4 2423.5 1399.2C2430.1 1399.9 2433.8 1400.2 2439.7 1403.0C2446.7 1406.3 2449.8 1415.1 2455.9 1414.4C2462.7 1413.6 2464.7 1401.8 2472.1 1399.2C2477.6 1397.2 2481.8 1401.4 2488.3 1403.0C2494.8 1404.5 2498.2 1407.5 2504.5 1406.8C2511.2 1406.0 2514.0 1400.0 2520.7 1399.2C2526.9 1398.4 2530.6 1400.8 2536.9 1403.0C2543.6 1405.3 2546.9 1411.3 2553.1 1410.6C2559.9 1409.8 2562.2 1400.8 2569.2 1399.2C2575.2 1397.8 2578.9 1402.2 2585.4 1403.0C2591.8 1403.7 2595.2 1403.0 2601.6 1403.0C2608.1 1403.0 2611.4 1403.0 2617.8 1403.0C2624.3 1403.0 2627.5 1403.0 2634.0 1403.0C2640.5 1403.0 2643.7 1403.0 2650.2 1403.0C2656.7 1403.0 2660.0 1402.2 2666.4 1403.0C2673.0 1403.7 2676.4 1407.5 2682.6 1406.8C2689.3 1406.0 2692.3 1402.2 2698.8 1399.2 L2698.8 1592.8 L1095.6 1592.8 Z" fill="rgba(167,21,25,0.5)"/><path d="M1095.6 1399.2C1102.1 1402.2 1105.3 1406.8 1111.8 1406.8C1118.3 1406.8 1121.5 1399.2 1128.0 1399.2C1134.5 1399.2 1137.7 1406.8 1144.2 1406.8C1150.7 1406.8 1153.7 1400.0 1160.4 1399.2C1166.6 1398.4 1170.0 1402.2 1176.6 1403.0C1183.0 1403.7 1186.3 1403.0 1192.8 1403.0C1199.2 1403.0 1202.5 1403.0 1209.0 1403.0C1215.4 1403.0 1218.7 1403.0 1225.2 1403.0C1231.6 1403.0 1234.9 1403.0 1241.3 1403.0C1247.8 1403.0 1251.1 1403.0 1257.5 1403.0C1264.0 1403.0 1267.3 1403.0 1273.7 1403.0C1280.2 1403.0 1283.4 1403.0 1289.9 1403.0C1296.4 1403.0 1299.6 1403.0 1306.1 1403.0C1312.6 1403.0 1315.8 1403.0 1322.3 1403.0C1328.8 1403.0 1332.0 1403.0 1338.5 1403.0C1345.0 1403.0 1348.2 1403.0 1354.7 1403.0C1361.2 1403.0 1364.4 1403.0 1370.9 1403.0C1377.4 1403.0 1380.6 1403.0 1387.1 1403.0C1393.6 1403.0 1396.9 1402.2 1403.3 1403.0C1409.8 1403.7 1413.0 1406.8 1419.5 1406.8C1426.0 1406.8 1429.2 1404.5 1435.7 1403.0C1442.2 1401.4 1445.4 1399.2 1451.9 1399.2C1458.3 1399.2 1461.5 1402.2 1468.1 1403.0C1474.5 1403.7 1477.8 1403.0 1484.3 1403.0C1490.7 1403.0 1494.0 1403.0 1500.4 1403.0C1506.9 1403.0 1510.2 1403.0 1516.6 1403.0C1523.1 1403.0 1526.4 1403.0 1532.8 1403.0C1539.3 1403.0 1542.6 1403.0 1549.0 1403.0C1555.5 1403.0 1558.8 1402.2 1565.2 1403.0C1571.8 1403.7 1575.2 1407.5 1581.4 1406.8C1588.1 1406.0 1590.9 1400.0 1597.6 1399.2C1603.9 1398.4 1607.2 1402.2 1613.8 1403.0C1620.2 1403.7 1623.5 1403.0 1630.0 1403.0C1636.5 1403.0 1639.7 1403.0 1646.2 1403.0C1652.7 1403.0 1656.0 1402.2 1662.4 1403.0C1669.0 1403.7 1672.0 1406.0 1678.6 1406.8C1685.0 1407.5 1688.6 1408.2 1694.8 1406.8C1701.6 1405.2 1704.3 1400.0 1711.0 1399.2C1717.2 1398.4 1720.6 1402.2 1727.2 1403.0C1733.6 1403.7 1736.9 1403.0 1743.4 1403.0C1749.8 1403.0 1753.2 1402.2 1759.6 1403.0C1766.1 1403.7 1769.3 1406.8 1775.7 1406.8C1782.2 1406.8 1785.4 1403.7 1791.9 1403.0C1798.3 1402.2 1801.7 1403.0 1808.1 1403.0C1814.6 1403.0 1817.8 1403.0 1824.3 1403.0C1830.8 1403.0 1834.0 1403.0 1840.5 1403.0C1847.0 1403.0 1850.2 1403.0 1856.7 1403.0C1863.2 1403.0 1866.5 1403.7 1872.9 1403.0C1879.5 1402.2 1882.6 1399.2 1889.1 1399.2C1895.6 1399.2 1898.7 1402.2 1905.3 1403.0C1911.7 1403.7 1915.0 1403.0 1921.5 1403.0C1928.0 1403.0 1931.2 1403.0 1937.7 1403.0C1944.2 1403.0 1947.7 1401.5 1953.9 1403.0C1960.7 1404.6 1963.6 1410.6 1970.1 1410.6C1976.6 1410.6 1979.5 1404.6 1986.3 1403.0C1992.4 1401.5 1996.0 1403.0 2002.5 1403.0C2008.9 1403.0 2012.2 1403.0 2018.7 1403.0C2025.1 1403.0 2028.4 1403.0 2034.8 1403.0C2041.3 1403.0 2044.7 1402.2 2051.0 1403.0C2057.6 1403.7 2060.8 1406.8 2067.2 1406.8C2073.7 1406.8 2076.9 1403.7 2083.4 1403.0C2089.8 1402.2 2093.1 1403.0 2099.6 1403.0C2106.1 1403.0 2109.3 1403.0 2115.8 1403.0C2122.3 1403.0 2125.5 1403.0 2132.0 1403.0C2138.5 1403.0 2141.7 1403.0 2148.2 1403.0C2154.7 1403.0 2158.0 1402.2 2164.4 1403.0C2171.0 1403.7 2174.4 1407.5 2180.6 1406.8C2187.3 1406.0 2190.1 1400.0 2196.8 1399.2C2203.0 1398.4 2206.4 1402.2 2213.0 1403.0C2219.4 1403.7 2222.7 1403.0 2229.2 1403.0C2235.7 1403.0 2239.0 1402.2 2245.4 1403.0C2251.9 1403.7 2255.1 1406.8 2261.6 1406.8C2268.0 1406.8 2271.2 1403.7 2277.8 1403.0C2284.1 1402.2 2287.5 1403.0 2294.0 1403.0C2300.4 1403.0 2303.7 1403.0 2310.1 1403.0C2316.6 1403.0 2319.9 1402.2 2326.3 1403.0C2332.9 1403.7 2336.3 1407.5 2342.5 1406.8C2349.2 1406.0 2352.0 1400.0 2358.7 1399.2C2365.0 1398.4 2368.7 1400.8 2374.9 1403.0C2381.6 1405.3 2385.0 1411.3 2391.1 1410.6C2397.9 1409.8 2400.2 1401.7 2407.3 1399.2C2413.1 1397.1 2417.1 1398.4 2423.5 1399.2C2430.1 1399.9 2433.8 1400.2 2439.7 1403.0C2446.7 1406.3 2449.8 1415.1 2455.9 1414.4C2462.7 1413.6 2464.7 1401.8 2472.1 1399.2C2477.6 1397.2 2481.8 1401.4 2488.3 1403.0C2494.8 1404.5 2498.2 1407.5 2504.5 1406.8C2511.2 1406.0 2514.0 1400.0 2520.7 1399.2C2526.9 1398.4 2530.6 1400.8 2536.9 1403.0C2543.6 1405.3 2546.9 1411.3 2553.1 1410.6C2559.9 1409.8 2562.2 1400.8 2569.2 1399.2C2575.2 1397.8 2578.9 1402.2 2585.4 1403.0C2591.8 1403.7 2595.2 1403.0 2601.6 1403.0C2608.1 1403.0 2611.4 1403.0 2617.8 1403.0C2624.3 1403.0 2627.5 1403.0 2634.0 1403.0C2640.5 1403.0 2643.7 1403.0 2650.2 1403.0C2656.7 1403.0 2660.0 1402.2 2666.4 1403.0C2673.0 1403.7 2676.4 1407.5 2682.6 1406.8C2689.3 1406.0 2692.3 1402.2 2698.8 1399.2" fill="none" stroke="#a8140c" stroke-width="1.800" stroke-linejoin="round"/><g fill="rgba(167,21,25,0.5)" stroke="#a8140c" stroke-width="1.800"><circle cx="1095.6" cy="1399.2" r="2.100"/><circle cx="1111.8" cy="1406.8" r="2.100"/><circle cx="1128.0" cy="1399.2" r="2.100"/><circle cx="1144.2" cy="1406.8" r="2.100"/><circle cx="1160.4" cy="1399.2" r="2.100"/><circle cx="1176.6" cy="1403.0" r="2.100"/><circle cx="1192.8" cy="1403.0" r="2.100"/><circle cx="1209.0" cy="1403.0" r="2.100"/><circle cx="1225.2" cy="1403.0" r="2.100"/><circle cx="1241.3" cy="1403.0" r="2.100"/><circle cx="1257.5" cy="1403.0" r="2.100"/><circle cx="1273.7" cy="1403.0" r="2.100"/><circle cx="1289.9" cy="1403.0" r="2.100"/><circle cx="1306.1" cy="1403.0" r="2.100"/><circle cx="1322.3" cy="1403.0" r="2.100"/><circle cx="1338.5" cy="1403.0" r="2.100"/><circle cx="1354.7" cy="1403.0" r="2.100"/><circle cx="1370.9" cy="1403.0" r="2.100"/><circle cx="1387.1" cy="1403.0" r="2.100"/><circle cx="1403.3" cy="1403.0" r="2.100"/><circle cx="1419.5" cy="1406.8" r="2.100"/><circle cx="1435.7" cy="1403.0" r="2.100"/><circle cx="1451.9" cy="1399.2" r="2.100"/><circle cx="1468.1" cy="1403.0" r="2.100"/><circle cx="1484.3" cy="1403.0" r="2.100"/><circle cx="1500.4" cy="1403.0" r="2.100"/><circle cx="1516.6" cy="1403.0" r="2.100"/><circle cx="1532.8" cy="1403.0" r="2.100"/><circle cx="1549.0" cy="1403.0" r="2.100"/><circle cx="1565.2" cy="1403.0" r="2.100"/><circle cx="1581.4" cy="1406.8" r="2.100"/><circle cx="1597.6" cy="1399.2" r="2.100"/><circle cx="1613.8" cy="1403.0" r="2.100"/><circle cx="1630.0" cy="1403.0" r="2.100"/><circle cx="1646.2" cy="1403.0" r="2.100"/><circle cx="1662.4" cy="1403.0" r="2.100"/><circle cx="1678.6" cy="1406.8" r="2.100"/><circle cx="1694.8" cy="1406.8" r="2.100"/><circle cx="1711.0" cy="1399.2" r="2.100"/><circle cx="1727.2" cy="1403.0" r="2.100"/><circle cx="1743.4" cy="1403.0" r="2.100"/><circle cx="1759.6" cy="1403.0" r="2.100"/><circle cx="1775.7" cy="1406.8" r="2.100"/><circle cx="1791.9" cy="1403.0" r="2.100"/><circle cx="1808.1" cy="1403.0" r="2.100"/><circle cx="1824.3" cy="1403.0" r="2.100"/><circle cx="1840.5" cy="1403.0" r="2.100"/><circle cx="1856.7" cy="1403.0" r="2.100"/><circle cx="1872.9" cy="1403.0" r="2.100"/><circle cx="1889.1" cy="1399.2" r="2.100"/><circle cx="1905.3" cy="1403.0" r="2.100"/><circle cx="1921.5" cy="1403.0" r="2.100"/><circle cx="1937.7" cy="1403.0" r="2.100"/><circle cx="1953.9" cy="1403.0" r="2.100"/><circle cx="1970.1" cy="1410.6" r="2.100"/><circle cx="1986.3" cy="1403.0" r="2.100"/><circle cx="2002.5" cy="1403.0" r="2.100"/><circle cx="2018.7" cy="1403.0" r="2.100"/><circle cx="2034.8" cy="1403.0" r="2.100"/><circle cx="2051.0" cy="1403.0" r="2.100"/><circle cx="2067.2" cy="1406.8" r="2.100"/><circle cx="2083.4" cy="1403.0" r="2.100"/><circle cx="2099.6" cy="1403.0" r="2.100"/><circle cx="2115.8" cy="1403.0" r="2.100"/><circle cx="2132.0" cy="1403.0" r="2.100"/><circle cx="2148.2" cy="1403.0" r="2.100"/><circle cx="2164.4" cy="1403.0" r="2.100"/><circle cx="2180.6" cy="1406.8" r="2.100"/><circle cx="2196.8" cy="1399.2" r="2.100"/><circle cx="2213.0" cy="1403.0" r="2.100"/><circle cx="2229.2" cy="1403.0" r="2.100"/><circle cx="2245.4" cy="1403.0" r="2.100"/><circle cx="2261.6" cy="1406.8" r="2.100"/><circle cx="2277.8" cy="1403.0" r="2.100"/><circle cx="2294.0" cy="1403.0" r="2.100"/><circle cx="2310.1" cy="1403.0" r="2.100"/><circle cx="2326.3" cy="1403.0" r="2.100"/><circle cx="2342.5" cy="1406.8" r="2.100"/><circle cx="2358.7" cy="1399.2" r="2.100"/><circle cx="2374.9" cy="1403.0" r="2.100"/><circle cx="2391.1" cy="1410.6" r="2.100"/><circle cx="2407.3" cy="1399.2" r="2.100"/><circle cx="2423.5" cy="1399.2" r="2.100"/><circle cx="2439.7" cy="1403.0" r="2.100"/><circle cx="2455.9" cy="1414.4" r="2.100"/><circle cx="2472.1" cy="1399.2" r="2.100"/><circle cx="2488.3" cy="1403.0" r="2.100"/><circle cx="2504.5" cy="1406.8" r="2.100"/><circle cx="2520.7" cy="1399.2" r="2.100"/><circle cx="2536.9" cy="1403.0" r="2.100"/><circle cx="2553.1" cy="1410.6" r="2.100"/><circle cx="2569.2" cy="1399.2" r="2.100"/><circle cx="2585.4" cy="1403.0" r="2.100"/><circle cx="2601.6" cy="1403.0" r="2.100"/><circle cx="2617.8" cy="1403.0" r="2.100"/><circle cx="2634.0" cy="1403.0" r="2.100"/><circle cx="2650.2" cy="1403.0" r="2.100"/><circle cx="2666.4" cy="1403.0" r="2.100"/><circle cx="2682.6" cy="1406.8" r="2.100"/><circle cx="2698.8" cy="1399.2" r="2.100"/></g><rect x="1675.3" y="1323.2" width="74.800" height="22.200" fill="rgba(167,21,25,0.5)" stroke="#a8140c" stroke-width="1.800"/></svg>
<span id="t65" class="t " style="top:1581.1px;font-size:21.60px;color:#666666;-webkit-text-stroke-width:0.35px;left:1075.6px;transform:translateX(-100%);">0</span>
<span id="t66" class="t " style="top:1505.2px;font-size:21.60px;color:#666666;-webkit-text-stroke-width:0.35px;left:1075.6px;transform:translateX(-100%);">20</span>
<span id="t67" class="t " style="top:1429.2px;font-size:21.60px;color:#666666;-webkit-text-stroke-width:0.35px;left:1075.6px;transform:translateX(-100%);">40</span>
<span id="t68" class="t " style="top:1353.3px;font-size:21.60px;color:#666666;-webkit-text-stroke-width:0.35px;left:1075.6px;transform:translateX(-100%);">60</span>
<span id="t69" class="t " style="top:1323.4px;font-size:21.60px;color:#666666;-webkit-text-stroke-width:0.35px;left:1761.4px;letter-spacing:0.456px;">Receive Packets per second</span>
<svg class="chart" style="left:1040px;top:1603.0px" width="1659" height="298.5" viewBox="1040 1603.0 1659 298.5"><path d="M1065.0 1890.7 H2699" stroke="rgba(0,0,0,0.25)" stroke-width="1.800"/><path d="M1065.0 1814.8 H2699" stroke="rgba(0,0,0,0.1)" stroke-width="1.800"/><path d="M1065.0 1738.8 H2699" stroke="rgba(0,0,0,0.1)" stroke-width="1.800"/><path d="M1065.0 1662.9 H2699" stroke="rgba(0,0,0,0.1)" stroke-width="1.800"/><path d="M1083.0 1662.9 V1890.7" stroke="rgba(0,0,0,0.1)" stroke-width="1.800"/><path d="M1083.0 1890.7C1089.5 1890.7 1092.8 1890.7 1099.3 1890.7C1105.8 1890.7 1109.1 1890.7 1115.6 1890.7C1122.2 1890.7 1125.4 1890.7 1132.0 1890.7C1138.5 1890.7 1141.8 1890.7 1148.3 1890.7C1154.8 1890.7 1158.1 1890.7 1164.6 1890.7C1171.1 1890.7 1174.4 1890.7 1180.9 1890.7C1187.5 1890.7 1190.7 1890.7 1197.2 1890.7C1203.8 1890.7 1207.0 1890.7 1213.6 1890.7C1220.1 1890.7 1223.4 1890.7 1229.9 1890.7C1236.4 1890.7 1239.7 1890.7 1246.2 1890.7C1252.7 1890.7 1256.0 1890.7 1262.5 1890.7C1269.1 1890.7 1272.3 1890.7 1278.9 1890.7C1285.4 1890.7 1288.6 1890.7 1295.2 1890.7C1301.7 1890.7 1305.0 1890.7 1311.5 1890.7C1318.0 1890.7 1321.3 1890.7 1327.8 1890.7C1334.3 1890.7 1337.6 1890.7 1344.1 1890.7C1350.7 1890.7 1353.9 1890.7 1360.5 1890.7C1367.0 1890.7 1370.3 1890.7 1376.8 1890.7C1383.3 1890.7 1386.6 1890.7 1393.1 1890.7C1399.6 1890.7 1402.9 1890.7 1409.4 1890.7C1416.0 1890.7 1419.2 1890.7 1425.7 1890.7C1432.3 1890.7 1435.5 1890.7 1442.1 1890.7C1448.6 1890.7 1451.9 1890.7 1458.4 1890.7C1464.9 1890.7 1468.2 1890.7 1474.7 1890.7C1481.2 1890.7 1484.5 1890.7 1491.0 1890.7C1497.6 1890.7 1500.8 1890.7 1507.4 1890.7C1513.9 1890.7 1517.1 1890.7 1523.7 1890.7C1530.2 1890.7 1533.5 1890.7 1540.0 1890.7C1546.5 1890.7 1549.8 1890.7 1556.3 1890.7C1562.8 1890.7 1566.1 1890.7 1572.6 1890.7C1579.2 1890.7 1582.4 1890.7 1589.0 1890.7C1595.5 1890.7 1598.8 1890.7 1605.3 1890.7C1611.8 1890.7 1615.1 1890.7 1621.6 1890.7C1628.1 1890.7 1631.4 1890.7 1637.9 1890.7C1644.4 1890.7 1652.0 1890.7 1654.2 1890.7C1665.0 1865.6 1664.0 1814.8 1670.6 1814.8C1677.1 1814.8 1676.1 1865.6 1686.9 1890.7C1689.2 1890.7 1696.7 1890.7 1703.2 1890.7C1709.7 1890.7 1713.0 1890.7 1719.5 1890.7C1726.1 1890.7 1729.3 1890.7 1735.8 1890.7C1742.4 1890.7 1749.9 1890.7 1752.2 1890.7C1763.0 1865.6 1762.0 1814.8 1768.5 1814.8C1775.0 1814.8 1774.0 1865.6 1784.8 1890.7C1787.1 1890.7 1794.6 1890.7 1801.1 1890.7C1807.7 1890.7 1810.9 1890.7 1817.5 1890.7C1824.0 1890.7 1827.2 1890.7 1833.8 1890.7C1840.3 1890.7 1849.2 1890.7 1850.1 1890.7C1862.3 1805.7 1859.9 1662.9 1866.4 1662.9C1872.9 1662.9 1870.6 1805.7 1882.7 1890.7C1883.6 1890.7 1892.5 1890.7 1899.1 1890.7C1905.6 1890.7 1908.9 1890.7 1915.4 1890.7C1921.9 1890.7 1925.2 1890.7 1931.7 1890.7C1938.2 1890.7 1946.8 1890.7 1948.0 1890.7C1959.8 1835.8 1957.8 1738.8 1964.3 1738.8C1970.9 1738.8 1968.9 1835.8 1980.7 1890.7C1981.9 1890.7 1990.5 1890.7 1997.0 1890.7C2003.5 1890.7 2006.8 1890.7 2013.3 1890.7C2019.8 1890.7 2023.1 1890.7 2029.6 1890.7C2036.2 1890.7 2043.7 1890.7 2046.0 1890.7C2056.7 1865.6 2055.7 1814.8 2062.3 1814.8C2068.8 1814.8 2067.8 1865.6 2078.6 1890.7C2080.9 1890.7 2088.4 1890.7 2094.9 1890.7C2101.4 1890.7 2104.7 1890.7 2111.2 1890.7C2117.8 1890.7 2121.0 1890.7 2127.6 1890.7C2134.1 1890.7 2137.4 1890.7 2143.9 1890.7C2150.4 1890.7 2153.7 1890.7 2160.2 1890.7C2166.7 1890.7 2170.0 1890.7 2176.5 1890.7C2183.0 1890.7 2186.3 1890.7 2192.8 1890.7C2199.4 1890.7 2202.6 1890.7 2209.2 1890.7C2215.7 1890.7 2219.0 1890.7 2225.5 1890.7C2232.0 1890.7 2239.5 1890.7 2241.8 1890.7C2252.6 1865.6 2251.6 1814.8 2258.1 1814.8C2264.7 1814.8 2263.7 1865.6 2274.4 1890.7C2276.7 1890.7 2284.2 1890.7 2290.8 1890.7C2297.3 1890.7 2300.6 1890.7 2307.1 1890.7C2313.6 1890.7 2316.9 1890.7 2323.4 1890.7C2329.9 1890.7 2333.2 1890.7 2339.7 1890.7C2346.3 1890.7 2349.5 1890.7 2356.1 1890.7C2362.6 1890.7 2365.8 1890.7 2372.4 1890.7C2378.9 1890.7 2382.2 1890.7 2388.7 1890.7C2395.2 1890.7 2398.5 1890.7 2405.0 1890.7C2411.5 1890.7 2414.8 1890.7 2421.3 1890.7C2427.9 1890.7 2436.4 1890.7 2437.7 1890.7C2449.5 1835.8 2447.5 1738.8 2454.0 1738.8C2460.5 1738.8 2458.5 1835.8 2470.3 1890.7C2471.6 1890.7 2480.1 1890.7 2486.6 1890.7C2493.2 1890.7 2496.4 1890.7 2502.9 1890.7C2509.5 1890.7 2512.7 1890.7 2519.3 1890.7C2525.8 1890.7 2533.3 1890.7 2535.6 1890.7C2546.4 1865.6 2545.4 1814.8 2551.9 1814.8C2558.4 1814.8 2557.4 1865.6 2568.2 1890.7C2570.5 1890.7 2578.0 1890.7 2584.6 1890.7C2591.1 1890.7 2594.3 1890.7 2600.9 1890.7C2607.4 1890.7 2610.7 1890.7 2617.2 1890.7C2623.7 1890.7 2627.0 1890.7 2633.5 1890.7C2640.0 1890.7 2643.3 1890.7 2649.8 1890.7C2656.4 1890.7 2659.6 1890.7 2666.2 1890.7C2672.7 1890.7 2676.0 1890.7 2682.5 1890.7C2689.0 1890.7 2692.3 1890.7 2698.8 1890.7 L2698.8 1890.7 L1083.0 1890.7 Z" fill="rgba(179,105,25,0.5)"/><path d="M1083.0 1890.7C1089.5 1890.7 1092.8 1890.7 1099.3 1890.7C1105.8 1890.7 1109.1 1890.7 1115.6 1890.7C1122.2 1890.7 1125.4 1890.7 1132.0 1890.7C1138.5 1890.7 1141.8 1890.7 1148.3 1890.7C1154.8 1890.7 1158.1 1890.7 1164.6 1890.7C1171.1 1890.7 1174.4 1890.7 1180.9 1890.7C1187.5 1890.7 1190.7 1890.7 1197.2 1890.7C1203.8 1890.7 1207.0 1890.7 1213.6 1890.7C1220.1 1890.7 1223.4 1890.7 1229.9 1890.7C1236.4 1890.7 1239.7 1890.7 1246.2 1890.7C1252.7 1890.7 1256.0 1890.7 1262.5 1890.7C1269.1 1890.7 1272.3 1890.7 1278.9 1890.7C1285.4 1890.7 1288.6 1890.7 1295.2 1890.7C1301.7 1890.7 1305.0 1890.7 1311.5 1890.7C1318.0 1890.7 1321.3 1890.7 1327.8 1890.7C1334.3 1890.7 1337.6 1890.7 1344.1 1890.7C1350.7 1890.7 1353.9 1890.7 1360.5 1890.7C1367.0 1890.7 1370.3 1890.7 1376.8 1890.7C1383.3 1890.7 1386.6 1890.7 1393.1 1890.7C1399.6 1890.7 1402.9 1890.7 1409.4 1890.7C1416.0 1890.7 1419.2 1890.7 1425.7 1890.7C1432.3 1890.7 1435.5 1890.7 1442.1 1890.7C1448.6 1890.7 1451.9 1890.7 1458.4 1890.7C1464.9 1890.7 1468.2 1890.7 1474.7 1890.7C1481.2 1890.7 1484.5 1890.7 1491.0 1890.7C1497.6 1890.7 1500.8 1890.7 1507.4 1890.7C1513.9 1890.7 1517.1 1890.7 1523.7 1890.7C1530.2 1890.7 1533.5 1890.7 1540.0 1890.7C1546.5 1890.7 1549.8 1890.7 1556.3 1890.7C1562.8 1890.7 1566.1 1890.7 1572.6 1890.7C1579.2 1890.7 1582.4 1890.7 1589.0 1890.7C1595.5 1890.7 1598.8 1890.7 1605.3 1890.7C1611.8 1890.7 1615.1 1890.7 1621.6 1890.7C1628.1 1890.7 1631.4 1890.7 1637.9 1890.7C1644.4 1890.7 1652.0 1890.7 1654.2 1890.7C1665.0 1865.6 1664.0 1814.8 1670.6 1814.8C1677.1 1814.8 1676.1 1865.6 1686.9 1890.7C1689.2 1890.7 1696.7 1890.7 1703.2 1890.7C1709.7 1890.7 1713.0 1890.7 1719.5 1890.7C1726.1 1890.7 1729.3 1890.7 1735.8 1890.7C1742.4 1890.7 1749.9 1890.7 1752.2 1890.7C1763.0 1865.6 1762.0 1814.8 1768.5 1814.8C1775.0 1814.8 1774.0 1865.6 1784.8 1890.7C1787.1 1890.7 1794.6 1890.7 1801.1 1890.7C1807.7 1890.7 1810.9 1890.7 1817.5 1890.7C1824.0 1890.7 1827.2 1890.7 1833.8 1890.7C1840.3 1890.7 1849.2 1890.7 1850.1 1890.7C1862.3 1805.7 1859.9 1662.9 1866.4 1662.9C1872.9 1662.9 1870.6 1805.7 1882.7 1890.7C1883.6 1890.7 1892.5 1890.7 1899.1 1890.7C1905.6 1890.7 1908.9 1890.7 1915.4 1890.7C1921.9 1890.7 1925.2 1890.7 1931.7 1890.7C1938.2 1890.7 1946.8 1890.7 1948.0 1890.7C1959.8 1835.8 1957.8 1738.8 1964.3 1738.8C1970.9 1738.8 1968.9 1835.8 1980.7 1890.7C1981.9 1890.7 1990.5 1890.7 1997.0 1890.7C2003.5 1890.7 2006.8 1890.7 2013.3 1890.7C2019.8 1890.7 2023.1 1890.7 2029.6 1890.7C2036.2 1890.7 2043.7 1890.7 2046.0 1890.7C2056.7 1865.6 2055.7 1814.8 2062.3 1814.8C2068.8 1814.8 2067.8 1865.6 2078.6 1890.7C2080.9 1890.7 2088.4 1890.7 2094.9 1890.7C2101.4 1890.7 2104.7 1890.7 2111.2 1890.7C2117.8 1890.7 2121.0 1890.7 2127.6 1890.7C2134.1 1890.7 2137.4 1890.7 2143.9 1890.7C2150.4 1890.7 2153.7 1890.7 2160.2 1890.7C2166.7 1890.7 2170.0 1890.7 2176.5 1890.7C2183.0 1890.7 2186.3 1890.7 2192.8 1890.7C2199.4 1890.7 2202.6 1890.7 2209.2 1890.7C2215.7 1890.7 2219.0 1890.7 2225.5 1890.7C2232.0 1890.7 2239.5 1890.7 2241.8 1890.7C2252.6 1865.6 2251.6 1814.8 2258.1 1814.8C2264.7 1814.8 2263.7 1865.6 2274.4 1890.7C2276.7 1890.7 2284.2 1890.7 2290.8 1890.7C2297.3 1890.7 2300.6 1890.7 2307.1 1890.7C2313.6 1890.7 2316.9 1890.7 2323.4 1890.7C2329.9 1890.7 2333.2 1890.7 2339.7 1890.7C2346.3 1890.7 2349.5 1890.7 2356.1 1890.7C2362.6 1890.7 2365.8 1890.7 2372.4 1890.7C2378.9 1890.7 2382.2 1890.7 2388.7 1890.7C2395.2 1890.7 2398.5 1890.7 2405.0 1890.7C2411.5 1890.7 2414.8 1890.7 2421.3 1890.7C2427.9 1890.7 2436.4 1890.7 2437.7 1890.7C2449.5 1835.8 2447.5 1738.8 2454.0 1738.8C2460.5 1738.8 2458.5 1835.8 2470.3 1890.7C2471.6 1890.7 2480.1 1890.7 2486.6 1890.7C2493.2 1890.7 2496.4 1890.7 2502.9 1890.7C2509.5 1890.7 2512.7 1890.7 2519.3 1890.7C2525.8 1890.7 2533.3 1890.7 2535.6 1890.7C2546.4 1865.6 2545.4 1814.8 2551.9 1814.8C2558.4 1814.8 2557.4 1865.6 2568.2 1890.7C2570.5 1890.7 2578.0 1890.7 2584.6 1890.7C2591.1 1890.7 2594.3 1890.7 2600.9 1890.7C2607.4 1890.7 2610.7 1890.7 2617.2 1890.7C2623.7 1890.7 2627.0 1890.7 2633.5 1890.7C2640.0 1890.7 2643.3 1890.7 2649.8 1890.7C2656.4 1890.7 2659.6 1890.7 2666.2 1890.7C2672.7 1890.7 2676.0 1890.7 2682.5 1890.7C2689.0 1890.7 2692.3 1890.7 2698.8 1890.7" fill="none" stroke="#b0640c" stroke-width="1.800" stroke-linejoin="round"/><g fill="rgba(179,105,25,0.5)" stroke="#b0640c" stroke-width="1.800"><circle cx="1083.0" cy="1890.7" r="2.100"/><circle cx="1099.3" cy="1890.7" r="2.100"/><circle cx="1115.6" cy="1890.7" r="2.100"/><circle cx="1132.0" cy="1890.7" r="2.100"/><circle cx="1148.3" cy="1890.7" r="2.100"/><circle cx="1164.6" cy="1890.7" r="2.100"/><circle cx="1180.9" cy="1890.7" r="2.100"/><circle cx="1197.2" cy="1890.7" r="2.100"/><circle cx="1213.6" cy="1890.7" r="2.100"/><circle cx="1229.9" cy="1890.7" r="2.100"/><circle cx="1246.2" cy="1890.7" r="2.100"/><circle cx="1262.5" cy="1890.7" r="2.100"/><circle cx="1278.9" cy="1890.7" r="2.100"/><circle cx="1295.2" cy="1890.7" r="2.100"/><circle cx="1311.5" cy="1890.7" r="2.100"/><circle cx="1327.8" cy="1890.7" r="2.100"/><circle cx="1344.1" cy="1890.7" r="2.100"/><circle cx="1360.5" cy="1890.7" r="2.100"/><circle cx="1376.8" cy="1890.7" r="2.100"/><circle cx="1393.1" cy="1890.7" r="2.100"/><circle cx="1409.4" cy="1890.7" r="2.100"/><circle cx="1425.7" cy="1890.7" r="2.100"/><circle cx="1442.1" cy="1890.7" r="2.100"/><circle cx="1458.4" cy="1890.7" r="2.100"/><circle cx="1474.7" cy="1890.7" r="2.100"/><circle cx="1491.0" cy="1890.7" r="2.100"/><circle cx="1507.4" cy="1890.7" r="2.100"/><circle cx="1523.7" cy="1890.7" r="2.100"/><circle cx="1540.0" cy="1890.7" r="2.100"/><circle cx="1556.3" cy="1890.7" r="2.100"/><circle cx="1572.6" cy="1890.7" r="2.100"/><circle cx="1589.0" cy="1890.7" r="2.100"/><circle cx="1605.3" cy="1890.7" r="2.100"/><circle cx="1621.6" cy="1890.7" r="2.100"/><circle cx="1637.9" cy="1890.7" r="2.100"/><circle cx="1654.2" cy="1890.7" r="2.100"/><circle cx="1670.6" cy="1814.8" r="2.100"/><circle cx="1686.9" cy="1890.7" r="2.100"/><circle cx="1703.2" cy="1890.7" r="2.100"/><circle cx="1719.5" cy="1890.7" r="2.100"/><circle cx="1735.8" cy="1890.7" r="2.100"/><circle cx="1752.2" cy="1890.7" r="2.100"/><circle cx="1768.5" cy="1814.8" r="2.100"/><circle cx="1784.8" cy="1890.7" r="2.100"/><circle cx="1801.1" cy="1890.7" r="2.100"/><circle cx="1817.5" cy="1890.7" r="2.100"/><circle cx="1833.8" cy="1890.7" r="2.100"/><circle cx="1850.1" cy="1890.7" r="2.100"/><circle cx="1866.4" cy="1662.9" r="2.100"/><circle cx="1882.7" cy="1890.7" r="2.100"/><circle cx="1899.1" cy="1890.7" r="2.100"/><circle cx="1915.4" cy="1890.7" r="2.100"/><circle cx="1931.7" cy="1890.7" r="2.100"/><circle cx="1948.0" cy="1890.7" r="2.100"/><circle cx="1964.3" cy="1738.8" r="2.100"/><circle cx="1980.7" cy="1890.7" r="2.100"/><circle cx="1997.0" cy="1890.7" r="2.100"/><circle cx="2013.3" cy="1890.7" r="2.100"/><circle cx="2029.6" cy="1890.7" r="2.100"/><circle cx="2046.0" cy="1890.7" r="2.100"/><circle cx="2062.3" cy="1814.8" r="2.100"/><circle cx="2078.6" cy="1890.7" r="2.100"/><circle cx="2094.9" cy="1890.7" r="2.100"/><circle cx="2111.2" cy="1890.7" r="2.100"/><circle cx="2127.6" cy="1890.7" r="2.100"/><circle cx="2143.9" cy="1890.7" r="2.100"/><circle cx="2160.2" cy="1890.7" r="2.100"/><circle cx="2176.5" cy="1890.7" r="2.100"/><circle cx="2192.8" cy="1890.7" r="2.100"/><circle cx="2209.2" cy="1890.7" r="2.100"/><circle cx="2225.5" cy="1890.7" r="2.100"/><circle cx="2241.8" cy="1890.7" r="2.100"/><circle cx="2258.1" cy="1814.8" r="2.100"/><circle cx="2274.4" cy="1890.7" r="2.100"/><circle cx="2290.8" cy="1890.7" r="2.100"/><circle cx="2307.1" cy="1890.7" r="2.100"/><circle cx="2323.4" cy="1890.7" r="2.100"/><circle cx="2339.7" cy="1890.7" r="2.100"/><circle cx="2356.1" cy="1890.7" r="2.100"/><circle cx="2372.4" cy="1890.7" r="2.100"/><circle cx="2388.7" cy="1890.7" r="2.100"/><circle cx="2405.0" cy="1890.7" r="2.100"/><circle cx="2421.3" cy="1890.7" r="2.100"/><circle cx="2437.7" cy="1890.7" r="2.100"/><circle cx="2454.0" cy="1738.8" r="2.100"/><circle cx="2470.3" cy="1890.7" r="2.100"/><circle cx="2486.6" cy="1890.7" r="2.100"/><circle cx="2502.9" cy="1890.7" r="2.100"/><circle cx="2519.3" cy="1890.7" r="2.100"/><circle cx="2535.6" cy="1890.7" r="2.100"/><circle cx="2551.9" cy="1814.8" r="2.100"/><circle cx="2568.2" cy="1890.7" r="2.100"/><circle cx="2584.6" cy="1890.7" r="2.100"/><circle cx="2600.9" cy="1890.7" r="2.100"/><circle cx="2617.2" cy="1890.7" r="2.100"/><circle cx="2633.5" cy="1890.7" r="2.100"/><circle cx="2649.8" cy="1890.7" r="2.100"/><circle cx="2666.2" cy="1890.7" r="2.100"/><circle cx="2682.5" cy="1890.7" r="2.100"/><circle cx="2698.8" cy="1890.7" r="2.100"/></g><rect x="1713.3" y="1621.7" width="74.800" height="22.200" fill="rgba(179,105,25,0.5)" stroke="#b0640c" stroke-width="1.800"/></svg>
<span id="t70" class="t " style="top:1879.0px;font-size:21.60px;color:#666666;-webkit-text-stroke-width:0.35px;left:1063.0px;transform:translateX(-100%);">0</span>
<span id="t71" class="t " style="top:1803.1px;font-size:21.60px;color:#666666;-webkit-text-stroke-width:0.35px;left:1063.0px;transform:translateX(-100%);">1</span>
<span id="t72" class="t " style="top:1727.1px;font-size:21.60px;color:#666666;-webkit-text-stroke-width:0.35px;left:1063.0px;transform:translateX(-100%);">2</span>
<span id="t73" class="t " style="top:1651.2px;font-size:21.60px;color:#666666;-webkit-text-stroke-width:0.35px;left:1063.0px;transform:translateX(-100%);">3</span>
<span id="t74" class="t " style="top:1621.9px;font-size:21.60px;color:#666666;-webkit-text-stroke-width:0.35px;left:1799.2px;letter-spacing:0.417px;">Receive Packet Loss</span>
<svg class="chart" style="left:1040px;top:1901.5px" width="1659" height="298.5" viewBox="1040 1901.5 1659 298.5"><path d="M1108.6 2189.3 H2699" stroke="rgba(0,0,0,0.25)" stroke-width="1.800"/><path d="M1108.6 2132.4 H2699" stroke="rgba(0,0,0,0.1)" stroke-width="1.800"/><path d="M1108.6 2075.4 H2699" stroke="rgba(0,0,0,0.1)" stroke-width="1.800"/><path d="M1108.6 2018.5 H2699" stroke="rgba(0,0,0,0.1)" stroke-width="1.800"/><path d="M1108.6 1961.5 H2699" stroke="rgba(0,0,0,0.1)" stroke-width="1.800"/><path d="M1126.6 1961.5 V2189.3" stroke="rgba(0,0,0,0.1)" stroke-width="1.800"/><path d="M1126.6 2103.9C1133.0 2138.0 1131.7 2160.4 1142.5 2189.3C1144.4 2189.3 1154.2 2189.3 1158.4 2189.3C1166.9 2181.6 1165.7 2168.5 1174.2 2160.8C1178.4 2157.1 1186.0 2157.1 1190.1 2160.8C1198.7 2168.5 1203.2 2189.3 1206.0 2189.3C1215.9 2162.7 1213.5 2090.4 1221.9 2075.4C1226.2 2067.7 1231.4 2109.6 1237.8 2132.4C1244.1 2155.1 1245.5 2182.0 1253.6 2189.3C1258.2 2189.3 1261.0 2168.5 1269.5 2160.8C1273.7 2157.1 1281.2 2164.6 1285.4 2160.8C1294.0 2153.2 1297.8 2144.8 1301.3 2132.4C1310.5 2099.2 1312.4 2038.3 1317.2 2046.9C1325.1 2061.1 1322.7 2152.2 1333.1 2189.3C1335.4 2189.3 1340.4 2168.5 1348.9 2160.8C1353.1 2157.1 1360.7 2157.1 1364.8 2160.8C1373.4 2168.5 1372.1 2181.6 1380.7 2189.3C1384.9 2189.3 1394.6 2189.3 1396.6 2189.3C1407.3 2160.4 1406.1 2103.9 1412.5 2103.9C1418.8 2103.9 1417.6 2160.4 1428.3 2189.3C1430.3 2189.3 1440.1 2189.3 1444.2 2189.3C1452.8 2181.6 1456.6 2173.3 1460.1 2160.8C1469.3 2127.7 1470.5 2070.5 1476.0 2075.4C1483.2 2081.9 1482.0 2162.7 1491.9 2189.3C1494.7 2189.3 1501.4 2160.8 1507.7 2160.8C1514.1 2160.8 1515.1 2181.6 1523.6 2189.3C1527.8 2189.3 1533.1 2189.3 1539.5 2189.3C1545.9 2189.3 1549.0 2189.3 1555.4 2189.3C1561.7 2189.3 1564.9 2189.3 1571.3 2189.3C1577.6 2189.3 1584.5 2189.3 1587.1 2189.3C1597.2 2171.3 1594.8 2139.7 1603.0 2132.4C1607.5 2128.3 1612.6 2149.4 1618.9 2160.8C1625.3 2172.2 1626.2 2181.6 1634.8 2189.3C1638.9 2189.3 1646.5 2189.3 1650.7 2189.3C1659.2 2181.6 1662.0 2173.0 1666.5 2160.8C1674.7 2138.8 1676.1 2103.9 1682.4 2103.9C1688.8 2103.9 1690.1 2138.8 1698.3 2160.8C1702.8 2173.0 1705.6 2181.6 1714.2 2189.3C1718.4 2189.3 1727.4 2189.3 1730.1 2189.3C1740.1 2171.3 1737.8 2139.7 1746.0 2132.4C1750.5 2128.3 1755.5 2149.4 1761.8 2160.8C1768.2 2172.2 1771.4 2189.3 1777.7 2189.3C1784.1 2189.3 1790.1 2173.3 1793.6 2160.8C1802.8 2127.7 1801.9 2082.2 1809.5 2075.4C1814.6 2070.8 1819.0 2109.6 1825.4 2132.4C1831.7 2155.1 1831.2 2171.3 1841.2 2189.3C1843.9 2189.3 1853.0 2189.3 1857.1 2189.3C1865.7 2181.6 1866.6 2160.8 1873.0 2160.8C1879.4 2160.8 1880.3 2181.6 1888.9 2189.3C1893.0 2189.3 1902.1 2189.3 1904.8 2189.3C1914.8 2171.3 1912.5 2139.7 1920.6 2132.4C1925.2 2128.3 1930.2 2149.4 1936.5 2160.8C1942.9 2172.2 1948.9 2189.3 1952.4 2189.3C1961.6 2172.7 1960.7 2110.7 1968.3 2103.9C1973.4 2099.3 1976.0 2138.8 1984.2 2160.8C1988.7 2173.0 1991.5 2181.6 2000.0 2189.3C2004.2 2189.3 2011.8 2189.3 2015.9 2189.3C2024.5 2181.6 2025.5 2172.2 2031.8 2160.8C2038.2 2149.4 2043.2 2128.3 2047.7 2132.4C2055.9 2139.7 2053.6 2171.3 2063.6 2189.3C2066.3 2189.3 2075.3 2189.3 2079.4 2189.3C2088.0 2181.6 2089.0 2160.8 2095.3 2160.8C2101.7 2160.8 2106.7 2189.3 2111.2 2189.3C2119.4 2182.0 2120.7 2155.1 2127.1 2132.4C2133.4 2109.6 2137.8 2070.8 2143.0 2075.4C2150.5 2082.2 2151.3 2154.0 2158.9 2160.8C2164.0 2165.4 2168.4 2103.9 2174.7 2103.9C2181.1 2103.9 2182.4 2138.8 2190.6 2160.8C2195.1 2173.0 2198.0 2181.6 2206.5 2189.3C2210.7 2189.3 2218.2 2189.3 2222.4 2189.3C2230.9 2181.6 2231.9 2172.2 2238.3 2160.8C2244.6 2149.4 2245.6 2140.0 2254.1 2132.4C2258.3 2128.6 2265.9 2128.6 2270.0 2132.4C2278.6 2140.0 2279.5 2149.4 2285.9 2160.8C2292.3 2172.2 2293.2 2181.6 2301.8 2189.3C2305.9 2189.3 2311.3 2189.3 2317.7 2189.3C2324.0 2189.3 2332.6 2189.3 2333.5 2189.3C2345.3 2115.4 2340.6 2021.7 2349.4 1990.0C2353.3 1976.2 2359.8 2041.1 2365.3 2075.4C2372.5 2120.8 2371.3 2162.7 2381.2 2189.3C2384.0 2189.3 2390.7 2172.2 2397.1 2160.8C2403.4 2149.4 2406.6 2132.4 2412.9 2132.4C2419.3 2132.4 2424.3 2164.9 2428.8 2160.8C2437.0 2153.5 2440.4 2127.1 2444.7 2103.9C2453.1 2058.7 2454.9 1984.9 2460.6 1990.0C2467.6 1996.3 2468.6 2118.2 2476.5 2132.4C2481.3 2141.0 2486.9 2042.0 2492.3 2046.9C2499.6 2053.4 2498.3 2134.2 2508.2 2160.8C2511.0 2168.4 2519.6 2144.5 2524.1 2132.4C2532.3 2110.3 2531.8 2082.7 2540.0 2075.4C2544.5 2071.4 2549.5 2103.9 2555.9 2103.9C2562.2 2103.9 2567.2 2071.4 2571.8 2075.4C2579.9 2082.7 2579.4 2110.3 2587.6 2132.4C2592.2 2144.5 2595.0 2153.2 2603.5 2160.8C2607.7 2164.6 2616.7 2165.6 2619.4 2160.8C2629.4 2142.9 2627.1 2111.2 2635.3 2103.9C2639.8 2099.8 2644.8 2121.0 2651.2 2132.4C2657.5 2143.7 2660.7 2149.4 2667.0 2160.8C2673.4 2172.2 2674.4 2181.6 2682.9 2189.3C2687.1 2189.3 2692.4 2189.3 2698.8 2189.3 L2698.8 2189.3 L1126.6 2189.3 Z" fill="rgba(31,55,173,0.5)"/><path d="M1126.6 2103.9C1133.0 2138.0 1131.7 2160.4 1142.5 2189.3C1144.4 2189.3 1154.2 2189.3 1158.4 2189.3C1166.9 2181.6 1165.7 2168.5 1174.2 2160.8C1178.4 2157.1 1186.0 2157.1 1190.1 2160.8C1198.7 2168.5 1203.2 2189.3 1206.0 2189.3C1215.9 2162.7 1213.5 2090.4 1221.9 2075.4C1226.2 2067.7 1231.4 2109.6 1237.8 2132.4C1244.1 2155.1 1245.5 2182.0 1253.6 2189.3C1258.2 2189.3 1261.0 2168.5 1269.5 2160.8C1273.7 2157.1 1281.2 2164.6 1285.4 2160.8C1294.0 2153.2 1297.8 2144.8 1301.3 2132.4C1310.5 2099.2 1312.4 2038.3 1317.2 2046.9C1325.1 2061.1 1322.7 2152.2 1333.1 2189.3C1335.4 2189.3 1340.4 2168.5 1348.9 2160.8C1353.1 2157.1 1360.7 2157.1 1364.8 2160.8C1373.4 2168.5 1372.1 2181.6 1380.7 2189.3C1384.9 2189.3 1394.6 2189.3 1396.6 2189.3C1407.3 2160.4 1406.1 2103.9 1412.5 2103.9C1418.8 2103.9 1417.6 2160.4 1428.3 2189.3C1430.3 2189.3 1440.1 2189.3 1444.2 2189.3C1452.8 2181.6 1456.6 2173.3 1460.1 2160.8C1469.3 2127.7 1470.5 2070.5 1476.0 2075.4C1483.2 2081.9 1482.0 2162.7 1491.9 2189.3C1494.7 2189.3 1501.4 2160.8 1507.7 2160.8C1514.1 2160.8 1515.1 2181.6 1523.6 2189.3C1527.8 2189.3 1533.1 2189.3 1539.5 2189.3C1545.9 2189.3 1549.0 2189.3 1555.4 2189.3C1561.7 2189.3 1564.9 2189.3 1571.3 2189.3C1577.6 2189.3 1584.5 2189.3 1587.1 2189.3C1597.2 2171.3 1594.8 2139.7 1603.0 2132.4C1607.5 2128.3 1612.6 2149.4 1618.9 2160.8C1625.3 2172.2 1626.2 2181.6 1634.8 2189.3C1638.9 2189.3 1646.5 2189.3 1650.7 2189.3C1659.2 2181.6 1662.0 2173.0 1666.5 2160.8C1674.7 2138.8 1676.1 2103.9 1682.4 2103.9C1688.8 2103.9 1690.1 2138.8 1698.3 2160.8C1702.8 2173.0 1705.6 2181.6 1714.2 2189.3C1718.4 2189.3 1727.4 2189.3 1730.1 2189.3C1740.1 2171.3 1737.8 2139.7 1746.0 2132.4C1750.5 2128.3 1755.5 2149.4 1761.8 2160.8C1768.2 2172.2 1771.4 2189.3 1777.7 2189.3C1784.1 2189.3 1790.1 2173.3 1793.6 2160.8C1802.8 2127.7 1801.9 2082.2 1809.5 2075.4C1814.6 2070.8 1819.0 2109.6 1825.4 2132.4C1831.7 2155.1 1831.2 2171.3 1841.2 2189.3C1843.9 2189.3 1853.0 2189.3 1857.1 2189.3C1865.7 2181.6 1866.6 2160.8 1873.0 2160.8C1879.4 2160.8 1880.3 2181.6 1888.9 2189.3C1893.0 2189.3 1902.1 2189.3 1904.8 2189.3C1914.8 2171.3 1912.5 2139.7 1920.6 2132.4C1925.2 2128.3 1930.2 2149.4 1936.5 2160.8C1942.9 2172.2 1948.9 2189.3 1952.4 2189.3C1961.6 2172.7 1960.7 2110.7 1968.3 2103.9C1973.4 2099.3 1976.0 2138.8 1984.2 2160.8C1988.7 2173.0 1991.5 2181.6 2000.0 2189.3C2004.2 2189.3 2011.8 2189.3 2015.9 2189.3C2024.5 2181.6 2025.5 2172.2 2031.8 2160.8C2038.2 2149.4 2043.2 2128.3 2047.7 2132.4C2055.9 2139.7 2053.6 2171.3 2063.6 2189.3C2066.3 2189.3 2075.3 2189.3 2079.4 2189.3C2088.0 2181.6 2089.0 2160.8 2095.3 2160.8C2101.7 2160.8 2106.7 2189.3 2111.2 2189.3C2119.4 2182.0 2120.7 2155.1 2127.1 2132.4C2133.4 2109.6 2137.8 2070.8 2143.0 2075.4C2150.5 2082.2 2151.3 2154.0 2158.9 2160.8C2164.0 2165.4 2168.4 2103.9 2174.7 2103.9C2181.1 2103.9 2182.4 2138.8 2190.6 2160.8C2195.1 2173.0 2198.0 2181.6 2206.5 2189.3C2210.7 2189.3 2218.2 2189.3 2222.4 2189.3C2230.9 2181.6 2231.9 2172.2 2238.3 2160.8C2244.6 2149.4 2245.6 2140.0 2254.1 2132.4C2258.3 2128.6 2265.9 2128.6 2270.0 2132.4C2278.6 2140.0 2279.5 2149.4 2285.9 2160.8C2292.3 2172.2 2293.2 2181.6 2301.8 2189.3C2305.9 2189.3 2311.3 2189.3 2317.7 2189.3C2324.0 2189.3 2332.6 2189.3 2333.5 2189.3C2345.3 2115.4 2340.6 2021.7 2349.4 1990.0C2353.3 1976.2 2359.8 2041.1 2365.3 2075.4C2372.5 2120.8 2371.3 2162.7 2381.2 2189.3C2384.0 2189.3 2390.7 2172.2 2397.1 2160.8C2403.4 2149.4 2406.6 2132.4 2412.9 2132.4C2419.3 2132.4 2424.3 2164.9 2428.8 2160.8C2437.0 2153.5 2440.4 2127.1 2444.7 2103.9C2453.1 2058.7 2454.9 1984.9 2460.6 1990.0C2467.6 1996.3 2468.6 2118.2 2476.5 2132.4C2481.3 2141.0 2486.9 2042.0 2492.3 2046.9C2499.6 2053.4 2498.3 2134.2 2508.2 2160.8C2511.0 2168.4 2519.6 2144.5 2524.1 2132.4C2532.3 2110.3 2531.8 2082.7 2540.0 2075.4C2544.5 2071.4 2549.5 2103.9 2555.9 2103.9C2562.2 2103.9 2567.2 2071.4 2571.8 2075.4C2579.9 2082.7 2579.4 2110.3 2587.6 2132.4C2592.2 2144.5 2595.0 2153.2 2603.5 2160.8C2607.7 2164.6 2616.7 2165.6 2619.4 2160.8C2629.4 2142.9 2627.1 2111.2 2635.3 2103.9C2639.8 2099.8 2644.8 2121.0 2651.2 2132.4C2657.5 2143.7 2660.7 2149.4 2667.0 2160.8C2673.4 2172.2 2674.4 2181.6 2682.9 2189.3C2687.1 2189.3 2692.4 2189.3 2698.8 2189.3" fill="none" stroke="#1c2aa0" stroke-width="1.800" stroke-linejoin="round"/><g fill="rgba(31,55,173,0.5)" stroke="#1c2aa0" stroke-width="1.800"><circle cx="1126.6" cy="2103.9" r="2.100"/><circle cx="1142.5" cy="2189.3" r="2.100"/><circle cx="1158.4" cy="2189.3" r="2.100"/><circle cx="1174.2" cy="2160.8" r="2.100"/><circle cx="1190.1" cy="2160.8" r="2.100"/><circle cx="1206.0" cy="2189.3" r="2.100"/><circle cx="1221.9" cy="2075.4" r="2.100"/><circle cx="1237.8" cy="2132.4" r="2.100"/><circle cx="1253.6" cy="2189.3" r="2.100"/><circle cx="1269.5" cy="2160.8" r="2.100"/><circle cx="1285.4" cy="2160.8" r="2.100"/><circle cx="1301.3" cy="2132.4" r="2.100"/><circle cx="1317.2" cy="2046.9" r="2.100"/><circle cx="1333.1" cy="2189.3" r="2.100"/><circle cx="1348.9" cy="2160.8" r="2.100"/><circle cx="1364.8" cy="2160.8" r="2.100"/><circle cx="1380.7" cy="2189.3" r="2.100"/><circle cx="1396.6" cy="2189.3" r="2.100"/><circle cx="1412.5" cy="2103.9" r="2.100"/><circle cx="1428.3" cy="2189.3" r="2.100"/><circle cx="1444.2" cy="2189.3" r="2.100"/><circle cx="1460.1" cy="2160.8" r="2.100"/><circle cx="1476.0" cy="2075.4" r="2.100"/><circle cx="1491.9" cy="2189.3" r="2.100"/><circle cx="1507.7" cy="2160.8" r="2.100"/><circle cx="1523.6" cy="2189.3" r="2.100"/><circle cx="1539.5" cy="2189.3" r="2.100"/><circle cx="1555.4" cy="2189.3" r="2.100"/><circle cx="1571.3" cy="2189.3" r="2.100"/><circle cx="1587.1" cy="2189.3" r="2.100"/><circle cx="1603.0" cy="2132.4" r="2.100"/><circle cx="1618.9" cy="2160.8" r="2.100"/><circle cx="1634.8" cy="2189.3" r="2.100"/><circle cx="1650.7" cy="2189.3" r="2.100"/><circle cx="1666.5" cy="2160.8" r="2.100"/><circle cx="1682.4" cy="2103.9" r="2.100"/><circle cx="1698.3" cy="2160.8" r="2.100"/><circle cx="1714.2" cy="2189.3" r="2.100"/><circle cx="1730.1" cy="2189.3" r="2.100"/><circle cx="1746.0" cy="2132.4" r="2.100"/><circle cx="1761.8" cy="2160.8" r="2.100"/><circle cx="1777.7" cy="2189.3" r="2.100"/><circle cx="1793.6" cy="2160.8" r="2.100"/><circle cx="1809.5" cy="2075.4" r="2.100"/><circle cx="1825.4" cy="2132.4" r="2.100"/><circle cx="1841.2" cy="2189.3" r="2.100"/><circle cx="1857.1" cy="2189.3" r="2.100"/><circle cx="1873.0" cy="2160.8" r="2.100"/><circle cx="1888.9" cy="2189.3" r="2.100"/><circle cx="1904.8" cy="2189.3" r="2.100"/><circle cx="1920.6" cy="2132.4" r="2.100"/><circle cx="1936.5" cy="2160.8" r="2.100"/><circle cx="1952.4" cy="2189.3" r="2.100"/><circle cx="1968.3" cy="2103.9" r="2.100"/><circle cx="1984.2" cy="2160.8" r="2.100"/><circle cx="2000.0" cy="2189.3" r="2.100"/><circle cx="2015.9" cy="2189.3" r="2.100"/><circle cx="2031.8" cy="2160.8" r="2.100"/><circle cx="2047.7" cy="2132.4" r="2.100"/><circle cx="2063.6" cy="2189.3" r="2.100"/><circle cx="2079.4" cy="2189.3" r="2.100"/><circle cx="2095.3" cy="2160.8" r="2.100"/><circle cx="2111.2" cy="2189.3" r="2.100"/><circle cx="2127.1" cy="2132.4" r="2.100"/><circle cx="2143.0" cy="2075.4" r="2.100"/><circle cx="2158.9" cy="2160.8" r="2.100"/><circle cx="2174.7" cy="2103.9" r="2.100"/><circle cx="2190.6" cy="2160.8" r="2.100"/><circle cx="2206.5" cy="2189.3" r="2.100"/><circle cx="2222.4" cy="2189.3" r="2.100"/><circle cx="2238.3" cy="2160.8" r="2.100"/><circle cx="2254.1" cy="2132.4" r="2.100"/><circle cx="2270.0" cy="2132.4" r="2.100"/><circle cx="2285.9" cy="2160.8" r="2.100"/><circle cx="2301.8" cy="2189.3" r="2.100"/><circle cx="2317.7" cy="2189.3" r="2.100"/><circle cx="2333.5" cy="2189.3" r="2.100"/><circle cx="2349.4" cy="1990.0" r="2.100"/><circle cx="2365.3" cy="2075.4" r="2.100"/><circle cx="2381.2" cy="2189.3" r="2.100"/><circle cx="2397.1" cy="2160.8" r="2.100"/><circle cx="2412.9" cy="2132.4" r="2.100"/><circle cx="2428.8" cy="2160.8" r="2.100"/><circle cx="2444.7" cy="2103.9" r="2.100"/><circle cx="2460.6" cy="1990.0" r="2.100"/><circle cx="2476.5" cy="2132.4" r="2.100"/><circle cx="2492.3" cy="2046.9" r="2.100"/><circle cx="2508.2" cy="2160.8" r="2.100"/><circle cx="2524.1" cy="2132.4" r="2.100"/><circle cx="2540.0" cy="2075.4" r="2.100"/><circle cx="2555.9" cy="2103.9" r="2.100"/><circle cx="2571.8" cy="2075.4" r="2.100"/><circle cx="2587.6" cy="2132.4" r="2.100"/><circle cx="2603.5" cy="2160.8" r="2.100"/><circle cx="2619.4" cy="2160.8" r="2.100"/><circle cx="2635.3" cy="2103.9" r="2.100"/><circle cx="2651.2" cy="2132.4" r="2.100"/><circle cx="2667.0" cy="2160.8" r="2.100"/><circle cx="2682.9" cy="2189.3" r="2.100"/><circle cx="2698.8" cy="2189.3" r="2.100"/></g></svg>
<span id="t75" class="t " style="top:2177.6px;font-size:21.60px;color:#666666;-webkit-text-stroke-width:0.35px;left:1106.6px;transform:translateX(-100%);">0</span>
<span id="t76" class="t " style="top:2120.7px;font-size:21.60px;color:#666666;-webkit-text-stroke-width:0.35px;left:1106.6px;transform:translateX(-100%);">0.002</span>
<span id="t77" class="t " style="top:2063.7px;font-size:21.60px;color:#666666;-webkit-text-stroke-width:0.35px;left:1106.6px;transform:translateX(-100%);">0.004</span>
<span id="t78" class="t " style="top:2006.8px;font-size:21.60px;color:#666666;-webkit-text-stroke-width:0.35px;left:1106.6px;transform:translateX(-100%);">0.006</span>
<span id="t79" class="t " style="top:1949.8px;font-size:21.60px;color:#666666;-webkit-text-stroke-width:0.35px;left:1106.6px;transform:translateX(-100%);">0.008</span>
<svg class="chart" style="left:1040px;top:2200.0px" width="1659" height="71.0" viewBox="1040 2200.0 1659 71.0"><path d="M1077.6 2261.3 H2699" stroke="rgba(0,0,0,0.1)" stroke-width="1.800"/><path d="M1095.6 2261.3 V2489.1" stroke="rgba(0,0,0,0.1)" stroke-width="1.800"/></svg>
<span id="t80" class="t " style="top:2249.6px;font-size:21.60px;color:#666666;-webkit-text-stroke-width:0.35px;left:1075.6px;transform:translateX(-100%);">40</span>
<div class="abs" id="scrollthumb" style="left:2699.300px;top:330px;width:19px;height:1541.700px;border-radius:9.500px;background:#aaaaaa"></div>
<div id="popup" class="abs" style="left:1590px;top:1825px;width:597px;height:470px;border-radius:19px;background:#212121"></div>
<svg style="left:1868.5px;top:1862.0px" width="40.0" height="26.0" viewBox="0 0 40 26" ><path d="M3.500 4 L20 20 L36.500 4" stroke="#e0e0e0" stroke-width="8.500" fill="none" stroke-linejoin="miter"/></svg>
<div class="abs btn" style="left:1654.9px;top:1909.2px;width:102.600px;height:102.600px;border-radius:50%;background:#444444"></div>
<div class="abs btn" style="left:1776.2px;top:1909.2px;width:102.600px;height:102.600px;border-radius:50%;background:#444444"></div>
<div class="abs btn" style="left:1897.6px;top:1909.2px;width:102.600px;height:102.600px;border-radius:50%;background:#444444"></div>
<div class="abs btn" style="left:2018.9px;top:1909.2px;width:102.600px;height:102.600px;border-radius:50%;background:#de1e00"></div>
<div class="abs btn" style="left:1654.9px;top:2030.2px;width:102.600px;height:102.600px;border-radius:50%;background:#444444"></div>
<div class="abs btn" style="left:1776.2px;top:2030.2px;width:102.600px;height:102.600px;border-radius:50%;background:#444444"></div>
<div class="abs btn" style="left:1897.6px;top:2030.2px;width:102.600px;height:102.600px;border-radius:50%;background:#444444"></div>
<div class="abs btn" style="left:2018.9px;top:2030.2px;width:102.600px;height:102.600px;border-radius:50%;background:#444444"></div>
<div class="abs btn" style="left:1776.2px;top:2151.9px;width:102.600px;height:102.600px;border-radius:50%;background:#444444"></div>
<div class="abs btn" style="left:1897.6px;top:2151.9px;width:102.600px;height:102.600px;border-radius:50%;background:#444444"></div>
<svg style="left:1689.2px;top:1938.5px" width="34.0" height="40.0" viewBox="0 0 34 40" ><rect x="11" y="1" width="12" height="23" rx="6" fill="#d2d2d2"/><path d="M5.500 16 V18 a11.500 11.500 0 0 0 23 0 V16 M17 29.500 V36.500 M9.500 37.500 H24.500" stroke="#d2d2d2" stroke-width="3" fill="none"/><path d="M2 35 L32 6" stroke="#444" stroke-width="7"/><path d="M2 35.500 L32 6.500" stroke="#d2d2d2" stroke-width="3.200"/></svg>
<svg style="left:1809.5px;top:1941.0px" width="36.0" height="36.0" viewBox="0 0 36 36" ><circle cx="18" cy="18" r="18" fill="#d2d2d2"/><rect x="10.200" y="10.500" width="5.800" height="15" fill="#444"/><rect x="20" y="10.500" width="5.800" height="15" fill="#444"/></svg>
<svg style="left:1927.4px;top:1941.0px" width="43.0" height="36.0" viewBox="0 0 43 36" ><path d="M27 0 L43 14 L27 28 V19.500 C15 19.500 8 24 6 36 C-3 22 6 8.500 27 8.500 Z" fill="#d2d2d2"/></svg>
<svg style="left:2049.7px;top:1948.5px" width="41.0" height="18.0" viewBox="0 0 41 18" ><path d="M20.500 0 C30 0 37 3 40 7.500 C41.500 10 41 13 40 15.500 C39.500 17 38.500 17.500 37 17 L30.500 15 C29.300 14.600 28.800 13.800 28.800 12.600 L29 8.800 C23.500 7 17.500 7 12 8.800 L12.200 12.600 C12.200 13.800 11.700 14.600 10.500 15 L4 17 C2.500 17.500 1.500 17 1 15.500 C0 13 -0.500 10 1 7.500 C4 3 11 0 20.500 0Z" fill="#ffffff"/></svg>
<svg style="left:1688.2px;top:2063.5px" width="36.0" height="36.0" viewBox="0 0 36 36" ><circle cx="18" cy="18" r="15.400" fill="none" stroke="#d2d2d2" stroke-width="4.900"/><circle cx="18" cy="18" r="6.200" fill="#d2d2d2"/></svg>
<svg style="left:1805.0px;top:2059.5px" width="45.0" height="42.0" viewBox="0 0 45 42" ><circle cx="9.500" cy="5.500" r="5.500" fill="#d2d2d2"/><circle cx="35.500" cy="5.500" r="5.500" fill="#d2d2d2"/><path d="M0 17 a5 5 0 0 1 5 -5 H13 V22 H3 a3 3 0 0 1 -3 -3Z M45 17 a5 5 0 0 0 -5 -5 H32 V22 H42 a3 3 0 0 0 3 -3Z" fill="#d2d2d2"/><circle cx="22.500" cy="15" r="10.200" fill="#444"/><circle cx="22.500" cy="15" r="8.500" fill="#d2d2d2"/><path d="M4.500 38 V33 C4.500 22 40.500 22 40.500 33 V38 a4 4 0 0 1 -4 4 H8.500 a4 4 0 0 1 -4 -4Z" fill="#444"/><path d="M6.500 37.500 V33.500 C6.500 24.500 38.500 24.500 38.500 33.500 V37.500 a4 4 0 0 1 -4 4 H10.500 a4 4 0 0 1 -4 -4Z" fill="#d2d2d2"/></svg>
<svg style="left:1926.4px;top:2067.5px" width="45.0" height="28.0" viewBox="0 0 45 28" ><rect x="1.200" y="1.200" width="42.600" height="25.600" rx="2.500" fill="none" stroke="#d2d2d2" stroke-width="2.400"/><rect x="6.0" y="6.0" width="3.400" height="3.400" fill="#d2d2d2"/><rect x="11.7" y="6.0" width="3.400" height="3.400" fill="#d2d2d2"/><rect x="17.4" y="6.0" width="3.400" height="3.400" fill="#d2d2d2"/><rect x="23.1" y="6.0" width="3.400" height="3.400" fill="#d2d2d2"/><rect x="28.8" y="6.0" width="3.400" height="3.400" fill="#d2d2d2"/><rect x="34.5" y="6.0" width="3.400" height="3.400" fill="#d2d2d2"/><rect x="7.5" y="11.5" width="3.400" height="3.400" fill="#d2d2d2"/><rect x="13.2" y="11.5" width="3.400" height="3.400" fill="#d2d2d2"/><rect x="18.9" y="11.5" width="3.400" height="3.400" fill="#d2d2d2"/><rect x="24.6" y="11.5" width="3.400" height="3.400" fill="#d2d2d2"/><rect x="30.3" y="11.5" width="3.400" height="3.400" fill="#d2d2d2"/><rect x="36.0" y="11.5" width="3.400" height="3.400" fill="#d2d2d2"/><rect x="35.500" y="6" width="3.500" height="9" fill="#d2d2d2"/><rect x="6" y="11.500" width="1" height="3.400" fill="#d2d2d2"/><rect x="6" y="17.500" width="4" height="3.400" fill="#d2d2d2"/><rect x="12" y="17.500" width="21" height="3.400" fill="#d2d2d2"/><rect x="35" y="17.500" width="4" height="3.400" fill="#d2d2d2"/></svg>
<svg style="left:2050.7px;top:2064.0px" width="39.0" height="33.0" viewBox="0 0 39 33" ><path d="M0 10.500 H7 L17 1 V32 L7 22.500 H0Z" fill="#d2d2d2"/><path d="M21.500 11.500 A6.500 6.500 0 0 1 21.500 21.500 M25.500 6.500 A13 13 0 0 1 25.500 26.500 M29.500 1.500 A19.500 19.500 0 0 1 29.500 31.500" stroke="#d2d2d2" stroke-width="3" fill="none"/></svg>
<svg style="left:1803.5px;top:2183.7px" width="48.0" height="36.0" viewBox="0 0 48 36" ><path d="M1.500 0 V34.500 H48" stroke="#ff1e00" stroke-width="3" fill="none"/><path d="M6.500 29.500 V15 L17 4 L29.500 16.500 L38 9.500 L44.500 29.500Z" fill="#ff1e00"/></svg>
<svg style="left:1927.9px;top:2186.9px" width="42.0" height="32.5" viewBox="0 0 42 32.500" ><circle cx="4.500" cy="4.5" r="4.500" fill="#d2d2d2"/><rect x="12.500" y="1.5" width="29.500" height="6" fill="#d2d2d2"/><circle cx="4.500" cy="16.2" r="4.500" fill="#d2d2d2"/><rect x="12.500" y="13.2" width="29.500" height="6" fill="#d2d2d2"/><circle cx="4.500" cy="28.0" r="4.500" fill="#d2d2d2"/><rect x="12.500" y="25.0" width="29.500" height="6" fill="#d2d2d2"/></svg>
</div><script>(function(){var w=window.innerWidth;if(w&&Math.abs(w-3176)>2){document.documentElement.style.zoom=w/3176;}})();</script></body></html>
